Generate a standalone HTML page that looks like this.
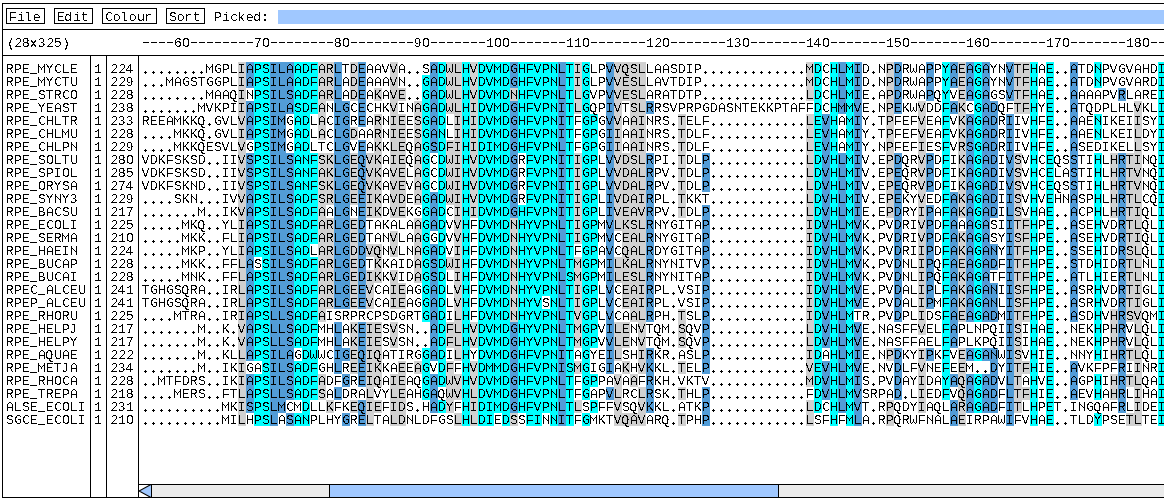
<!DOCTYPE html>
<html><head><meta charset="utf-8"><style>
html,body{margin:0;padding:0;background:#fff;}
body{width:1164px;height:504px;overflow:hidden;position:relative;font-family:"Liberation Mono",monospace;font-size:13.333px;color:#000;}
.a{position:absolute;}
.t{position:absolute;white-space:pre;line-height:13px;height:13px;}
.hl{position:absolute;background:#000;height:1px;}
.vl{position:absolute;background:#000;width:1px;}
.bx{position:absolute;border:1px solid #000;box-sizing:border-box;}
.r{position:absolute;height:13px;}
#txt{position:absolute;left:0;top:0;width:1164px;height:504px;filter:url(#crisp);}
.ln{position:absolute;left:0;height:13px;width:1164px}
.ln i{position:absolute;top:0;font-style:normal;white-space:pre;line-height:13px}
</style></head><body>

<svg width="0" height="0" style="position:absolute"><filter id="crisp" x="0" y="0" width="100%" height="100%" color-interpolation-filters="sRGB"><feComponentTransfer><feFuncA type="discrete" tableValues="0 1" /></feComponentTransfer></filter></svg>
<div class="r" style="left:238px;top:62px;width:8px;background:#d0d0d0"></div>
<div class="r" style="left:246px;top:62px;width:8px;background:#529cd7"></div>
<div class="r" style="left:254px;top:62px;width:16px;background:#00ffff"></div>
<div class="r" style="left:270px;top:62px;width:24px;background:#529cd7"></div>
<div class="r" style="left:294px;top:62px;width:24px;background:#00ffff"></div>
<div class="r" style="left:318px;top:62px;width:16px;background:#d0d0d0"></div>
<div class="r" style="left:334px;top:62px;width:8px;background:#529cd7"></div>
<div class="r" style="left:350px;top:62px;width:8px;background:#d0d0d0"></div>
<div class="r" style="left:358px;top:62px;width:8px;background:#529cd7"></div>
<div class="r" style="left:390px;top:62px;width:8px;background:#d0d0d0"></div>
<div class="r" style="left:430px;top:62px;width:8px;background:#529cd7"></div>
<div class="r" style="left:438px;top:62px;width:8px;background:#00ffff"></div>
<div class="r" style="left:446px;top:62px;width:16px;background:#d0d0d0"></div>
<div class="r" style="left:462px;top:62px;width:8px;background:#00ffff"></div>
<div class="r" style="left:470px;top:62px;width:8px;background:#d0d0d0"></div>
<div class="r" style="left:478px;top:62px;width:32px;background:#00ffff"></div>
<div class="r" style="left:510px;top:62px;width:8px;background:#529cd7"></div>
<div class="r" style="left:518px;top:62px;width:40px;background:#00ffff"></div>
<div class="r" style="left:558px;top:62px;width:8px;background:#529cd7"></div>
<div class="r" style="left:566px;top:62px;width:8px;background:#00ffff"></div>
<div class="r" style="left:574px;top:62px;width:8px;background:#d0d0d0"></div>
<div class="r" style="left:582px;top:62px;width:8px;background:#00ffff"></div>
<div class="r" style="left:606px;top:62px;width:8px;background:#529cd7"></div>
<div class="r" style="left:614px;top:62px;width:32px;background:#d0d0d0"></div>
<div class="r" style="left:806px;top:62px;width:8px;background:#d0d0d0"></div>
<div class="r" style="left:814px;top:62px;width:8px;background:#00ffff"></div>
<div class="r" style="left:830px;top:62px;width:8px;background:#00ffff"></div>
<div class="r" style="left:838px;top:62px;width:8px;background:#529cd7"></div>
<div class="r" style="left:846px;top:62px;width:8px;background:#00ffff"></div>
<div class="r" style="left:854px;top:62px;width:8px;background:#529cd7"></div>
<div class="r" style="left:886px;top:62px;width:8px;background:#d0d0d0"></div>
<div class="r" style="left:894px;top:62px;width:8px;background:#529cd7"></div>
<div class="r" style="left:926px;top:62px;width:8px;background:#529cd7"></div>
<div class="r" style="left:942px;top:62px;width:8px;background:#00ffff"></div>
<div class="r" style="left:950px;top:62px;width:8px;background:#529cd7"></div>
<div class="r" style="left:958px;top:62px;width:8px;background:#d0d0d0"></div>
<div class="r" style="left:966px;top:62px;width:8px;background:#529cd7"></div>
<div class="r" style="left:974px;top:62px;width:8px;background:#00ffff"></div>
<div class="r" style="left:982px;top:62px;width:8px;background:#529cd7"></div>
<div class="r" style="left:1006px;top:62px;width:8px;background:#529cd7"></div>
<div class="r" style="left:1014px;top:62px;width:16px;background:#d0d0d0"></div>
<div class="r" style="left:1030px;top:62px;width:8px;background:#00ffff"></div>
<div class="r" style="left:1046px;top:62px;width:8px;background:#00ffff"></div>
<div class="r" style="left:1070px;top:62px;width:8px;background:#529cd7"></div>
<div class="r" style="left:1094px;top:62px;width:8px;background:#00ffff"></div>
<div class="r" style="left:1158px;top:62px;width:8px;background:#00ffff"></div>
<div class="r" style="left:238px;top:75px;width:8px;background:#d0d0d0"></div>
<div class="r" style="left:246px;top:75px;width:8px;background:#529cd7"></div>
<div class="r" style="left:254px;top:75px;width:16px;background:#00ffff"></div>
<div class="r" style="left:270px;top:75px;width:24px;background:#529cd7"></div>
<div class="r" style="left:294px;top:75px;width:24px;background:#00ffff"></div>
<div class="r" style="left:318px;top:75px;width:16px;background:#d0d0d0"></div>
<div class="r" style="left:334px;top:75px;width:8px;background:#529cd7"></div>
<div class="r" style="left:350px;top:75px;width:8px;background:#d0d0d0"></div>
<div class="r" style="left:358px;top:75px;width:8px;background:#529cd7"></div>
<div class="r" style="left:390px;top:75px;width:8px;background:#d0d0d0"></div>
<div class="r" style="left:422px;top:75px;width:8px;background:#00ffff"></div>
<div class="r" style="left:430px;top:75px;width:8px;background:#529cd7"></div>
<div class="r" style="left:438px;top:75px;width:8px;background:#00ffff"></div>
<div class="r" style="left:446px;top:75px;width:16px;background:#d0d0d0"></div>
<div class="r" style="left:462px;top:75px;width:8px;background:#00ffff"></div>
<div class="r" style="left:470px;top:75px;width:8px;background:#d0d0d0"></div>
<div class="r" style="left:478px;top:75px;width:32px;background:#00ffff"></div>
<div class="r" style="left:510px;top:75px;width:8px;background:#529cd7"></div>
<div class="r" style="left:518px;top:75px;width:40px;background:#00ffff"></div>
<div class="r" style="left:558px;top:75px;width:8px;background:#529cd7"></div>
<div class="r" style="left:566px;top:75px;width:8px;background:#00ffff"></div>
<div class="r" style="left:574px;top:75px;width:8px;background:#d0d0d0"></div>
<div class="r" style="left:582px;top:75px;width:8px;background:#00ffff"></div>
<div class="r" style="left:606px;top:75px;width:8px;background:#529cd7"></div>
<div class="r" style="left:614px;top:75px;width:32px;background:#d0d0d0"></div>
<div class="r" style="left:806px;top:75px;width:8px;background:#d0d0d0"></div>
<div class="r" style="left:814px;top:75px;width:8px;background:#00ffff"></div>
<div class="r" style="left:830px;top:75px;width:8px;background:#00ffff"></div>
<div class="r" style="left:838px;top:75px;width:8px;background:#529cd7"></div>
<div class="r" style="left:846px;top:75px;width:8px;background:#00ffff"></div>
<div class="r" style="left:854px;top:75px;width:8px;background:#529cd7"></div>
<div class="r" style="left:886px;top:75px;width:8px;background:#d0d0d0"></div>
<div class="r" style="left:894px;top:75px;width:8px;background:#529cd7"></div>
<div class="r" style="left:926px;top:75px;width:8px;background:#529cd7"></div>
<div class="r" style="left:942px;top:75px;width:8px;background:#00ffff"></div>
<div class="r" style="left:950px;top:75px;width:8px;background:#529cd7"></div>
<div class="r" style="left:958px;top:75px;width:8px;background:#d0d0d0"></div>
<div class="r" style="left:966px;top:75px;width:8px;background:#529cd7"></div>
<div class="r" style="left:974px;top:75px;width:8px;background:#00ffff"></div>
<div class="r" style="left:982px;top:75px;width:8px;background:#529cd7"></div>
<div class="r" style="left:1006px;top:75px;width:8px;background:#529cd7"></div>
<div class="r" style="left:1014px;top:75px;width:16px;background:#d0d0d0"></div>
<div class="r" style="left:1030px;top:75px;width:8px;background:#00ffff"></div>
<div class="r" style="left:1046px;top:75px;width:8px;background:#00ffff"></div>
<div class="r" style="left:1070px;top:75px;width:8px;background:#529cd7"></div>
<div class="r" style="left:1094px;top:75px;width:8px;background:#00ffff"></div>
<div class="r" style="left:1158px;top:75px;width:8px;background:#00ffff"></div>
<div class="r" style="left:238px;top:88px;width:8px;background:#d0d0d0"></div>
<div class="r" style="left:254px;top:88px;width:16px;background:#00ffff"></div>
<div class="r" style="left:270px;top:88px;width:24px;background:#529cd7"></div>
<div class="r" style="left:294px;top:88px;width:24px;background:#00ffff"></div>
<div class="r" style="left:318px;top:88px;width:16px;background:#d0d0d0"></div>
<div class="r" style="left:334px;top:88px;width:8px;background:#529cd7"></div>
<div class="r" style="left:350px;top:88px;width:8px;background:#d0d0d0"></div>
<div class="r" style="left:358px;top:88px;width:8px;background:#529cd7"></div>
<div class="r" style="left:374px;top:88px;width:8px;background:#d0d0d0"></div>
<div class="r" style="left:390px;top:88px;width:16px;background:#d0d0d0"></div>
<div class="r" style="left:422px;top:88px;width:8px;background:#00ffff"></div>
<div class="r" style="left:430px;top:88px;width:8px;background:#529cd7"></div>
<div class="r" style="left:438px;top:88px;width:8px;background:#00ffff"></div>
<div class="r" style="left:446px;top:88px;width:16px;background:#d0d0d0"></div>
<div class="r" style="left:462px;top:88px;width:8px;background:#00ffff"></div>
<div class="r" style="left:470px;top:88px;width:8px;background:#d0d0d0"></div>
<div class="r" style="left:478px;top:88px;width:32px;background:#00ffff"></div>
<div class="r" style="left:510px;top:88px;width:8px;background:#d0d0d0"></div>
<div class="r" style="left:518px;top:88px;width:40px;background:#00ffff"></div>
<div class="r" style="left:558px;top:88px;width:8px;background:#529cd7"></div>
<div class="r" style="left:566px;top:88px;width:8px;background:#00ffff"></div>
<div class="r" style="left:574px;top:88px;width:8px;background:#d0d0d0"></div>
<div class="r" style="left:582px;top:88px;width:8px;background:#00ffff"></div>
<div class="r" style="left:606px;top:88px;width:8px;background:#529cd7"></div>
<div class="r" style="left:614px;top:88px;width:32px;background:#d0d0d0"></div>
<div class="r" style="left:806px;top:88px;width:8px;background:#d0d0d0"></div>
<div class="r" style="left:814px;top:88px;width:8px;background:#00ffff"></div>
<div class="r" style="left:830px;top:88px;width:8px;background:#00ffff"></div>
<div class="r" style="left:838px;top:88px;width:8px;background:#529cd7"></div>
<div class="r" style="left:846px;top:88px;width:8px;background:#00ffff"></div>
<div class="r" style="left:854px;top:88px;width:8px;background:#529cd7"></div>
<div class="r" style="left:886px;top:88px;width:8px;background:#d0d0d0"></div>
<div class="r" style="left:894px;top:88px;width:8px;background:#529cd7"></div>
<div class="r" style="left:926px;top:88px;width:8px;background:#529cd7"></div>
<div class="r" style="left:942px;top:88px;width:8px;background:#00ffff"></div>
<div class="r" style="left:958px;top:88px;width:8px;background:#d0d0d0"></div>
<div class="r" style="left:966px;top:88px;width:8px;background:#529cd7"></div>
<div class="r" style="left:974px;top:88px;width:8px;background:#00ffff"></div>
<div class="r" style="left:982px;top:88px;width:8px;background:#529cd7"></div>
<div class="r" style="left:1006px;top:88px;width:8px;background:#529cd7"></div>
<div class="r" style="left:1014px;top:88px;width:16px;background:#d0d0d0"></div>
<div class="r" style="left:1030px;top:88px;width:8px;background:#00ffff"></div>
<div class="r" style="left:1046px;top:88px;width:8px;background:#00ffff"></div>
<div class="r" style="left:1070px;top:88px;width:8px;background:#529cd7"></div>
<div class="r" style="left:1118px;top:88px;width:8px;background:#529cd7"></div>
<div class="r" style="left:1158px;top:88px;width:8px;background:#00ffff"></div>
<div class="r" style="left:238px;top:101px;width:8px;background:#d0d0d0"></div>
<div class="r" style="left:246px;top:101px;width:8px;background:#529cd7"></div>
<div class="r" style="left:254px;top:101px;width:16px;background:#00ffff"></div>
<div class="r" style="left:270px;top:101px;width:24px;background:#529cd7"></div>
<div class="r" style="left:294px;top:101px;width:24px;background:#00ffff"></div>
<div class="r" style="left:318px;top:101px;width:8px;background:#d0d0d0"></div>
<div class="r" style="left:334px;top:101px;width:16px;background:#529cd7"></div>
<div class="r" style="left:358px;top:101px;width:8px;background:#529cd7"></div>
<div class="r" style="left:390px;top:101px;width:8px;background:#d0d0d0"></div>
<div class="r" style="left:414px;top:101px;width:8px;background:#d0d0d0"></div>
<div class="r" style="left:422px;top:101px;width:8px;background:#00ffff"></div>
<div class="r" style="left:430px;top:101px;width:8px;background:#529cd7"></div>
<div class="r" style="left:438px;top:101px;width:8px;background:#00ffff"></div>
<div class="r" style="left:446px;top:101px;width:16px;background:#d0d0d0"></div>
<div class="r" style="left:462px;top:101px;width:8px;background:#00ffff"></div>
<div class="r" style="left:470px;top:101px;width:8px;background:#d0d0d0"></div>
<div class="r" style="left:478px;top:101px;width:32px;background:#00ffff"></div>
<div class="r" style="left:510px;top:101px;width:8px;background:#529cd7"></div>
<div class="r" style="left:518px;top:101px;width:40px;background:#00ffff"></div>
<div class="r" style="left:558px;top:101px;width:8px;background:#529cd7"></div>
<div class="r" style="left:566px;top:101px;width:8px;background:#00ffff"></div>
<div class="r" style="left:574px;top:101px;width:8px;background:#d0d0d0"></div>
<div class="r" style="left:582px;top:101px;width:8px;background:#00ffff"></div>
<div class="r" style="left:606px;top:101px;width:8px;background:#529cd7"></div>
<div class="r" style="left:614px;top:101px;width:8px;background:#d0d0d0"></div>
<div class="r" style="left:630px;top:101px;width:16px;background:#d0d0d0"></div>
<div class="r" style="left:646px;top:101px;width:8px;background:#529cd7"></div>
<div class="r" style="left:814px;top:101px;width:8px;background:#00ffff"></div>
<div class="r" style="left:830px;top:101px;width:8px;background:#00ffff"></div>
<div class="r" style="left:838px;top:101px;width:8px;background:#529cd7"></div>
<div class="r" style="left:846px;top:101px;width:8px;background:#00ffff"></div>
<div class="r" style="left:854px;top:101px;width:8px;background:#529cd7"></div>
<div class="r" style="left:886px;top:101px;width:8px;background:#d0d0d0"></div>
<div class="r" style="left:894px;top:101px;width:8px;background:#529cd7"></div>
<div class="r" style="left:918px;top:101px;width:8px;background:#d0d0d0"></div>
<div class="r" style="left:942px;top:101px;width:8px;background:#00ffff"></div>
<div class="r" style="left:950px;top:101px;width:8px;background:#529cd7"></div>
<div class="r" style="left:958px;top:101px;width:8px;background:#d0d0d0"></div>
<div class="r" style="left:974px;top:101px;width:8px;background:#00ffff"></div>
<div class="r" style="left:982px;top:101px;width:16px;background:#529cd7"></div>
<div class="r" style="left:1014px;top:101px;width:16px;background:#d0d0d0"></div>
<div class="r" style="left:1030px;top:101px;width:8px;background:#00ffff"></div>
<div class="r" style="left:1046px;top:101px;width:8px;background:#00ffff"></div>
<div class="r" style="left:1070px;top:101px;width:8px;background:#529cd7"></div>
<div class="r" style="left:1134px;top:101px;width:8px;background:#d0d0d0"></div>
<div class="r" style="left:1158px;top:101px;width:8px;background:#00ffff"></div>
<div class="r" style="left:238px;top:114px;width:8px;background:#d0d0d0"></div>
<div class="r" style="left:246px;top:114px;width:8px;background:#529cd7"></div>
<div class="r" style="left:254px;top:114px;width:16px;background:#00ffff"></div>
<div class="r" style="left:270px;top:114px;width:16px;background:#529cd7"></div>
<div class="r" style="left:294px;top:114px;width:16px;background:#00ffff"></div>
<div class="r" style="left:318px;top:114px;width:8px;background:#d0d0d0"></div>
<div class="r" style="left:334px;top:114px;width:16px;background:#529cd7"></div>
<div class="r" style="left:358px;top:114px;width:8px;background:#529cd7"></div>
<div class="r" style="left:374px;top:114px;width:8px;background:#d0d0d0"></div>
<div class="r" style="left:390px;top:114px;width:16px;background:#d0d0d0"></div>
<div class="r" style="left:414px;top:114px;width:8px;background:#d0d0d0"></div>
<div class="r" style="left:422px;top:114px;width:8px;background:#00ffff"></div>
<div class="r" style="left:430px;top:114px;width:8px;background:#529cd7"></div>
<div class="r" style="left:438px;top:114px;width:8px;background:#00ffff"></div>
<div class="r" style="left:454px;top:114px;width:8px;background:#d0d0d0"></div>
<div class="r" style="left:462px;top:114px;width:8px;background:#00ffff"></div>
<div class="r" style="left:470px;top:114px;width:8px;background:#d0d0d0"></div>
<div class="r" style="left:478px;top:114px;width:32px;background:#00ffff"></div>
<div class="r" style="left:510px;top:114px;width:8px;background:#529cd7"></div>
<div class="r" style="left:518px;top:114px;width:40px;background:#00ffff"></div>
<div class="r" style="left:558px;top:114px;width:8px;background:#529cd7"></div>
<div class="r" style="left:566px;top:114px;width:8px;background:#00ffff"></div>
<div class="r" style="left:582px;top:114px;width:16px;background:#00ffff"></div>
<div class="r" style="left:606px;top:114px;width:8px;background:#529cd7"></div>
<div class="r" style="left:614px;top:114px;width:8px;background:#d0d0d0"></div>
<div class="r" style="left:630px;top:114px;width:16px;background:#d0d0d0"></div>
<div class="r" style="left:678px;top:114px;width:8px;background:#d0d0d0"></div>
<div class="r" style="left:806px;top:114px;width:8px;background:#d0d0d0"></div>
<div class="r" style="left:814px;top:114px;width:8px;background:#00ffff"></div>
<div class="r" style="left:822px;top:114px;width:8px;background:#529cd7"></div>
<div class="r" style="left:830px;top:114px;width:8px;background:#00ffff"></div>
<div class="r" style="left:846px;top:114px;width:8px;background:#00ffff"></div>
<div class="r" style="left:854px;top:114px;width:8px;background:#529cd7"></div>
<div class="r" style="left:886px;top:114px;width:8px;background:#d0d0d0"></div>
<div class="r" style="left:918px;top:114px;width:8px;background:#d0d0d0"></div>
<div class="r" style="left:942px;top:114px;width:8px;background:#00ffff"></div>
<div class="r" style="left:958px;top:114px;width:8px;background:#d0d0d0"></div>
<div class="r" style="left:966px;top:114px;width:8px;background:#529cd7"></div>
<div class="r" style="left:974px;top:114px;width:8px;background:#00ffff"></div>
<div class="r" style="left:982px;top:114px;width:16px;background:#529cd7"></div>
<div class="r" style="left:1006px;top:114px;width:8px;background:#529cd7"></div>
<div class="r" style="left:1030px;top:114px;width:8px;background:#00ffff"></div>
<div class="r" style="left:1046px;top:114px;width:8px;background:#00ffff"></div>
<div class="r" style="left:1070px;top:114px;width:8px;background:#529cd7"></div>
<div class="r" style="left:1094px;top:114px;width:8px;background:#00ffff"></div>
<div class="r" style="left:1134px;top:114px;width:8px;background:#d0d0d0"></div>
<div class="r" style="left:1158px;top:114px;width:8px;background:#00ffff"></div>
<div class="r" style="left:238px;top:127px;width:8px;background:#d0d0d0"></div>
<div class="r" style="left:246px;top:127px;width:8px;background:#529cd7"></div>
<div class="r" style="left:254px;top:127px;width:16px;background:#00ffff"></div>
<div class="r" style="left:270px;top:127px;width:16px;background:#529cd7"></div>
<div class="r" style="left:294px;top:127px;width:16px;background:#00ffff"></div>
<div class="r" style="left:318px;top:127px;width:8px;background:#d0d0d0"></div>
<div class="r" style="left:334px;top:127px;width:16px;background:#529cd7"></div>
<div class="r" style="left:350px;top:127px;width:8px;background:#d0d0d0"></div>
<div class="r" style="left:374px;top:127px;width:8px;background:#d0d0d0"></div>
<div class="r" style="left:390px;top:127px;width:16px;background:#d0d0d0"></div>
<div class="r" style="left:414px;top:127px;width:8px;background:#d0d0d0"></div>
<div class="r" style="left:422px;top:127px;width:8px;background:#00ffff"></div>
<div class="r" style="left:430px;top:127px;width:8px;background:#529cd7"></div>
<div class="r" style="left:438px;top:127px;width:8px;background:#00ffff"></div>
<div class="r" style="left:454px;top:127px;width:8px;background:#d0d0d0"></div>
<div class="r" style="left:462px;top:127px;width:8px;background:#00ffff"></div>
<div class="r" style="left:470px;top:127px;width:8px;background:#d0d0d0"></div>
<div class="r" style="left:478px;top:127px;width:32px;background:#00ffff"></div>
<div class="r" style="left:510px;top:127px;width:8px;background:#529cd7"></div>
<div class="r" style="left:518px;top:127px;width:40px;background:#00ffff"></div>
<div class="r" style="left:558px;top:127px;width:8px;background:#529cd7"></div>
<div class="r" style="left:566px;top:127px;width:8px;background:#00ffff"></div>
<div class="r" style="left:582px;top:127px;width:16px;background:#00ffff"></div>
<div class="r" style="left:606px;top:127px;width:8px;background:#529cd7"></div>
<div class="r" style="left:614px;top:127px;width:8px;background:#d0d0d0"></div>
<div class="r" style="left:630px;top:127px;width:16px;background:#d0d0d0"></div>
<div class="r" style="left:678px;top:127px;width:8px;background:#d0d0d0"></div>
<div class="r" style="left:806px;top:127px;width:8px;background:#d0d0d0"></div>
<div class="r" style="left:814px;top:127px;width:8px;background:#00ffff"></div>
<div class="r" style="left:822px;top:127px;width:8px;background:#529cd7"></div>
<div class="r" style="left:830px;top:127px;width:8px;background:#00ffff"></div>
<div class="r" style="left:846px;top:127px;width:8px;background:#00ffff"></div>
<div class="r" style="left:854px;top:127px;width:8px;background:#529cd7"></div>
<div class="r" style="left:886px;top:127px;width:8px;background:#d0d0d0"></div>
<div class="r" style="left:918px;top:127px;width:8px;background:#d0d0d0"></div>
<div class="r" style="left:942px;top:127px;width:8px;background:#00ffff"></div>
<div class="r" style="left:958px;top:127px;width:8px;background:#d0d0d0"></div>
<div class="r" style="left:966px;top:127px;width:8px;background:#529cd7"></div>
<div class="r" style="left:974px;top:127px;width:8px;background:#00ffff"></div>
<div class="r" style="left:982px;top:127px;width:16px;background:#529cd7"></div>
<div class="r" style="left:1006px;top:127px;width:8px;background:#529cd7"></div>
<div class="r" style="left:1030px;top:127px;width:8px;background:#00ffff"></div>
<div class="r" style="left:1046px;top:127px;width:8px;background:#00ffff"></div>
<div class="r" style="left:1070px;top:127px;width:8px;background:#529cd7"></div>
<div class="r" style="left:1094px;top:127px;width:8px;background:#00ffff"></div>
<div class="r" style="left:1134px;top:127px;width:8px;background:#d0d0d0"></div>
<div class="r" style="left:1158px;top:127px;width:8px;background:#00ffff"></div>
<div class="r" style="left:238px;top:140px;width:8px;background:#d0d0d0"></div>
<div class="r" style="left:254px;top:140px;width:16px;background:#00ffff"></div>
<div class="r" style="left:270px;top:140px;width:16px;background:#529cd7"></div>
<div class="r" style="left:294px;top:140px;width:16px;background:#00ffff"></div>
<div class="r" style="left:334px;top:140px;width:16px;background:#529cd7"></div>
<div class="r" style="left:358px;top:140px;width:8px;background:#529cd7"></div>
<div class="r" style="left:374px;top:140px;width:8px;background:#d0d0d0"></div>
<div class="r" style="left:390px;top:140px;width:16px;background:#d0d0d0"></div>
<div class="r" style="left:414px;top:140px;width:8px;background:#d0d0d0"></div>
<div class="r" style="left:422px;top:140px;width:8px;background:#00ffff"></div>
<div class="r" style="left:430px;top:140px;width:8px;background:#529cd7"></div>
<div class="r" style="left:438px;top:140px;width:8px;background:#00ffff"></div>
<div class="r" style="left:446px;top:140px;width:16px;background:#d0d0d0"></div>
<div class="r" style="left:462px;top:140px;width:8px;background:#00ffff"></div>
<div class="r" style="left:470px;top:140px;width:8px;background:#d0d0d0"></div>
<div class="r" style="left:478px;top:140px;width:32px;background:#00ffff"></div>
<div class="r" style="left:510px;top:140px;width:8px;background:#529cd7"></div>
<div class="r" style="left:518px;top:140px;width:40px;background:#00ffff"></div>
<div class="r" style="left:558px;top:140px;width:8px;background:#529cd7"></div>
<div class="r" style="left:566px;top:140px;width:8px;background:#00ffff"></div>
<div class="r" style="left:582px;top:140px;width:16px;background:#00ffff"></div>
<div class="r" style="left:606px;top:140px;width:8px;background:#529cd7"></div>
<div class="r" style="left:614px;top:140px;width:8px;background:#d0d0d0"></div>
<div class="r" style="left:630px;top:140px;width:16px;background:#d0d0d0"></div>
<div class="r" style="left:678px;top:140px;width:8px;background:#d0d0d0"></div>
<div class="r" style="left:806px;top:140px;width:8px;background:#d0d0d0"></div>
<div class="r" style="left:814px;top:140px;width:8px;background:#00ffff"></div>
<div class="r" style="left:822px;top:140px;width:8px;background:#529cd7"></div>
<div class="r" style="left:830px;top:140px;width:8px;background:#00ffff"></div>
<div class="r" style="left:846px;top:140px;width:8px;background:#00ffff"></div>
<div class="r" style="left:854px;top:140px;width:8px;background:#529cd7"></div>
<div class="r" style="left:886px;top:140px;width:8px;background:#d0d0d0"></div>
<div class="r" style="left:918px;top:140px;width:8px;background:#d0d0d0"></div>
<div class="r" style="left:942px;top:140px;width:8px;background:#00ffff"></div>
<div class="r" style="left:958px;top:140px;width:8px;background:#d0d0d0"></div>
<div class="r" style="left:966px;top:140px;width:8px;background:#529cd7"></div>
<div class="r" style="left:974px;top:140px;width:8px;background:#00ffff"></div>
<div class="r" style="left:982px;top:140px;width:16px;background:#529cd7"></div>
<div class="r" style="left:1006px;top:140px;width:8px;background:#529cd7"></div>
<div class="r" style="left:1030px;top:140px;width:8px;background:#00ffff"></div>
<div class="r" style="left:1046px;top:140px;width:8px;background:#00ffff"></div>
<div class="r" style="left:1070px;top:140px;width:8px;background:#529cd7"></div>
<div class="r" style="left:1134px;top:140px;width:8px;background:#d0d0d0"></div>
<div class="r" style="left:1158px;top:140px;width:8px;background:#00ffff"></div>
<div class="r" style="left:238px;top:153px;width:8px;background:#d0d0d0"></div>
<div class="r" style="left:246px;top:153px;width:8px;background:#529cd7"></div>
<div class="r" style="left:254px;top:153px;width:16px;background:#00ffff"></div>
<div class="r" style="left:270px;top:153px;width:24px;background:#529cd7"></div>
<div class="r" style="left:294px;top:153px;width:24px;background:#00ffff"></div>
<div class="r" style="left:318px;top:153px;width:16px;background:#d0d0d0"></div>
<div class="r" style="left:334px;top:153px;width:16px;background:#529cd7"></div>
<div class="r" style="left:350px;top:153px;width:8px;background:#d0d0d0"></div>
<div class="r" style="left:358px;top:153px;width:8px;background:#529cd7"></div>
<div class="r" style="left:366px;top:153px;width:16px;background:#d0d0d0"></div>
<div class="r" style="left:390px;top:153px;width:16px;background:#d0d0d0"></div>
<div class="r" style="left:414px;top:153px;width:8px;background:#d0d0d0"></div>
<div class="r" style="left:422px;top:153px;width:8px;background:#00ffff"></div>
<div class="r" style="left:438px;top:153px;width:8px;background:#00ffff"></div>
<div class="r" style="left:446px;top:153px;width:16px;background:#d0d0d0"></div>
<div class="r" style="left:462px;top:153px;width:8px;background:#00ffff"></div>
<div class="r" style="left:470px;top:153px;width:8px;background:#d0d0d0"></div>
<div class="r" style="left:478px;top:153px;width:32px;background:#00ffff"></div>
<div class="r" style="left:510px;top:153px;width:8px;background:#529cd7"></div>
<div class="r" style="left:526px;top:153px;width:32px;background:#00ffff"></div>
<div class="r" style="left:558px;top:153px;width:8px;background:#529cd7"></div>
<div class="r" style="left:566px;top:153px;width:8px;background:#00ffff"></div>
<div class="r" style="left:574px;top:153px;width:8px;background:#d0d0d0"></div>
<div class="r" style="left:582px;top:153px;width:16px;background:#00ffff"></div>
<div class="r" style="left:606px;top:153px;width:8px;background:#529cd7"></div>
<div class="r" style="left:614px;top:153px;width:32px;background:#d0d0d0"></div>
<div class="r" style="left:646px;top:153px;width:8px;background:#529cd7"></div>
<div class="r" style="left:678px;top:153px;width:8px;background:#d0d0d0"></div>
<div class="r" style="left:702px;top:153px;width:8px;background:#529cd7"></div>
<div class="r" style="left:806px;top:153px;width:8px;background:#d0d0d0"></div>
<div class="r" style="left:814px;top:153px;width:8px;background:#00ffff"></div>
<div class="r" style="left:822px;top:153px;width:8px;background:#529cd7"></div>
<div class="r" style="left:830px;top:153px;width:8px;background:#00ffff"></div>
<div class="r" style="left:838px;top:153px;width:8px;background:#529cd7"></div>
<div class="r" style="left:846px;top:153px;width:8px;background:#00ffff"></div>
<div class="r" style="left:854px;top:153px;width:8px;background:#529cd7"></div>
<div class="r" style="left:886px;top:153px;width:8px;background:#d0d0d0"></div>
<div class="r" style="left:894px;top:153px;width:8px;background:#529cd7"></div>
<div class="r" style="left:918px;top:153px;width:8px;background:#d0d0d0"></div>
<div class="r" style="left:926px;top:153px;width:8px;background:#529cd7"></div>
<div class="r" style="left:942px;top:153px;width:8px;background:#00ffff"></div>
<div class="r" style="left:958px;top:153px;width:8px;background:#d0d0d0"></div>
<div class="r" style="left:966px;top:153px;width:8px;background:#529cd7"></div>
<div class="r" style="left:974px;top:153px;width:8px;background:#00ffff"></div>
<div class="r" style="left:982px;top:153px;width:16px;background:#529cd7"></div>
<div class="r" style="left:1006px;top:153px;width:8px;background:#529cd7"></div>
<div class="r" style="left:1014px;top:153px;width:8px;background:#d0d0d0"></div>
<div class="r" style="left:1030px;top:153px;width:8px;background:#00ffff"></div>
<div class="r" style="left:1046px;top:153px;width:8px;background:#00ffff"></div>
<div class="r" style="left:1070px;top:153px;width:8px;background:#529cd7"></div>
<div class="r" style="left:1094px;top:153px;width:8px;background:#00ffff"></div>
<div class="r" style="left:1110px;top:153px;width:8px;background:#d0d0d0"></div>
<div class="r" style="left:1118px;top:153px;width:8px;background:#529cd7"></div>
<div class="r" style="left:1126px;top:153px;width:16px;background:#d0d0d0"></div>
<div class="r" style="left:1158px;top:153px;width:8px;background:#00ffff"></div>
<div class="r" style="left:238px;top:166px;width:8px;background:#d0d0d0"></div>
<div class="r" style="left:246px;top:166px;width:8px;background:#529cd7"></div>
<div class="r" style="left:254px;top:166px;width:16px;background:#00ffff"></div>
<div class="r" style="left:270px;top:166px;width:24px;background:#529cd7"></div>
<div class="r" style="left:294px;top:166px;width:24px;background:#00ffff"></div>
<div class="r" style="left:318px;top:166px;width:16px;background:#d0d0d0"></div>
<div class="r" style="left:334px;top:166px;width:16px;background:#529cd7"></div>
<div class="r" style="left:350px;top:166px;width:8px;background:#d0d0d0"></div>
<div class="r" style="left:358px;top:166px;width:8px;background:#529cd7"></div>
<div class="r" style="left:366px;top:166px;width:16px;background:#d0d0d0"></div>
<div class="r" style="left:390px;top:166px;width:16px;background:#d0d0d0"></div>
<div class="r" style="left:414px;top:166px;width:8px;background:#d0d0d0"></div>
<div class="r" style="left:422px;top:166px;width:8px;background:#00ffff"></div>
<div class="r" style="left:438px;top:166px;width:8px;background:#00ffff"></div>
<div class="r" style="left:446px;top:166px;width:16px;background:#d0d0d0"></div>
<div class="r" style="left:462px;top:166px;width:8px;background:#00ffff"></div>
<div class="r" style="left:470px;top:166px;width:8px;background:#d0d0d0"></div>
<div class="r" style="left:478px;top:166px;width:32px;background:#00ffff"></div>
<div class="r" style="left:510px;top:166px;width:8px;background:#529cd7"></div>
<div class="r" style="left:526px;top:166px;width:32px;background:#00ffff"></div>
<div class="r" style="left:558px;top:166px;width:8px;background:#529cd7"></div>
<div class="r" style="left:566px;top:166px;width:8px;background:#00ffff"></div>
<div class="r" style="left:574px;top:166px;width:8px;background:#d0d0d0"></div>
<div class="r" style="left:582px;top:166px;width:16px;background:#00ffff"></div>
<div class="r" style="left:606px;top:166px;width:8px;background:#529cd7"></div>
<div class="r" style="left:614px;top:166px;width:32px;background:#d0d0d0"></div>
<div class="r" style="left:646px;top:166px;width:8px;background:#529cd7"></div>
<div class="r" style="left:678px;top:166px;width:8px;background:#d0d0d0"></div>
<div class="r" style="left:702px;top:166px;width:8px;background:#529cd7"></div>
<div class="r" style="left:806px;top:166px;width:8px;background:#d0d0d0"></div>
<div class="r" style="left:814px;top:166px;width:8px;background:#00ffff"></div>
<div class="r" style="left:822px;top:166px;width:8px;background:#529cd7"></div>
<div class="r" style="left:830px;top:166px;width:8px;background:#00ffff"></div>
<div class="r" style="left:838px;top:166px;width:8px;background:#529cd7"></div>
<div class="r" style="left:846px;top:166px;width:8px;background:#00ffff"></div>
<div class="r" style="left:854px;top:166px;width:8px;background:#529cd7"></div>
<div class="r" style="left:886px;top:166px;width:8px;background:#d0d0d0"></div>
<div class="r" style="left:894px;top:166px;width:8px;background:#529cd7"></div>
<div class="r" style="left:918px;top:166px;width:8px;background:#d0d0d0"></div>
<div class="r" style="left:926px;top:166px;width:8px;background:#529cd7"></div>
<div class="r" style="left:942px;top:166px;width:8px;background:#00ffff"></div>
<div class="r" style="left:958px;top:166px;width:8px;background:#d0d0d0"></div>
<div class="r" style="left:966px;top:166px;width:8px;background:#529cd7"></div>
<div class="r" style="left:974px;top:166px;width:8px;background:#00ffff"></div>
<div class="r" style="left:982px;top:166px;width:16px;background:#529cd7"></div>
<div class="r" style="left:1006px;top:166px;width:8px;background:#529cd7"></div>
<div class="r" style="left:1014px;top:166px;width:8px;background:#d0d0d0"></div>
<div class="r" style="left:1030px;top:166px;width:8px;background:#00ffff"></div>
<div class="r" style="left:1046px;top:166px;width:8px;background:#00ffff"></div>
<div class="r" style="left:1070px;top:166px;width:8px;background:#529cd7"></div>
<div class="r" style="left:1094px;top:166px;width:8px;background:#00ffff"></div>
<div class="r" style="left:1110px;top:166px;width:8px;background:#d0d0d0"></div>
<div class="r" style="left:1118px;top:166px;width:8px;background:#529cd7"></div>
<div class="r" style="left:1126px;top:166px;width:16px;background:#d0d0d0"></div>
<div class="r" style="left:1158px;top:166px;width:8px;background:#00ffff"></div>
<div class="r" style="left:238px;top:179px;width:8px;background:#d0d0d0"></div>
<div class="r" style="left:246px;top:179px;width:8px;background:#529cd7"></div>
<div class="r" style="left:254px;top:179px;width:16px;background:#00ffff"></div>
<div class="r" style="left:270px;top:179px;width:24px;background:#529cd7"></div>
<div class="r" style="left:294px;top:179px;width:24px;background:#00ffff"></div>
<div class="r" style="left:318px;top:179px;width:16px;background:#d0d0d0"></div>
<div class="r" style="left:334px;top:179px;width:16px;background:#529cd7"></div>
<div class="r" style="left:350px;top:179px;width:8px;background:#d0d0d0"></div>
<div class="r" style="left:358px;top:179px;width:8px;background:#529cd7"></div>
<div class="r" style="left:366px;top:179px;width:16px;background:#d0d0d0"></div>
<div class="r" style="left:390px;top:179px;width:16px;background:#d0d0d0"></div>
<div class="r" style="left:414px;top:179px;width:8px;background:#d0d0d0"></div>
<div class="r" style="left:422px;top:179px;width:8px;background:#00ffff"></div>
<div class="r" style="left:438px;top:179px;width:8px;background:#00ffff"></div>
<div class="r" style="left:446px;top:179px;width:16px;background:#d0d0d0"></div>
<div class="r" style="left:462px;top:179px;width:8px;background:#00ffff"></div>
<div class="r" style="left:470px;top:179px;width:8px;background:#d0d0d0"></div>
<div class="r" style="left:478px;top:179px;width:32px;background:#00ffff"></div>
<div class="r" style="left:510px;top:179px;width:8px;background:#529cd7"></div>
<div class="r" style="left:526px;top:179px;width:32px;background:#00ffff"></div>
<div class="r" style="left:558px;top:179px;width:8px;background:#529cd7"></div>
<div class="r" style="left:566px;top:179px;width:8px;background:#00ffff"></div>
<div class="r" style="left:574px;top:179px;width:8px;background:#d0d0d0"></div>
<div class="r" style="left:582px;top:179px;width:16px;background:#00ffff"></div>
<div class="r" style="left:606px;top:179px;width:8px;background:#529cd7"></div>
<div class="r" style="left:614px;top:179px;width:32px;background:#d0d0d0"></div>
<div class="r" style="left:646px;top:179px;width:8px;background:#529cd7"></div>
<div class="r" style="left:678px;top:179px;width:8px;background:#d0d0d0"></div>
<div class="r" style="left:702px;top:179px;width:8px;background:#529cd7"></div>
<div class="r" style="left:806px;top:179px;width:8px;background:#d0d0d0"></div>
<div class="r" style="left:814px;top:179px;width:8px;background:#00ffff"></div>
<div class="r" style="left:822px;top:179px;width:8px;background:#529cd7"></div>
<div class="r" style="left:830px;top:179px;width:8px;background:#00ffff"></div>
<div class="r" style="left:838px;top:179px;width:8px;background:#529cd7"></div>
<div class="r" style="left:846px;top:179px;width:8px;background:#00ffff"></div>
<div class="r" style="left:854px;top:179px;width:8px;background:#529cd7"></div>
<div class="r" style="left:886px;top:179px;width:8px;background:#d0d0d0"></div>
<div class="r" style="left:894px;top:179px;width:8px;background:#529cd7"></div>
<div class="r" style="left:918px;top:179px;width:8px;background:#d0d0d0"></div>
<div class="r" style="left:926px;top:179px;width:8px;background:#529cd7"></div>
<div class="r" style="left:942px;top:179px;width:8px;background:#00ffff"></div>
<div class="r" style="left:958px;top:179px;width:8px;background:#d0d0d0"></div>
<div class="r" style="left:966px;top:179px;width:8px;background:#529cd7"></div>
<div class="r" style="left:974px;top:179px;width:8px;background:#00ffff"></div>
<div class="r" style="left:982px;top:179px;width:16px;background:#529cd7"></div>
<div class="r" style="left:1006px;top:179px;width:8px;background:#529cd7"></div>
<div class="r" style="left:1014px;top:179px;width:8px;background:#d0d0d0"></div>
<div class="r" style="left:1030px;top:179px;width:8px;background:#00ffff"></div>
<div class="r" style="left:1046px;top:179px;width:8px;background:#00ffff"></div>
<div class="r" style="left:1070px;top:179px;width:8px;background:#529cd7"></div>
<div class="r" style="left:1094px;top:179px;width:8px;background:#00ffff"></div>
<div class="r" style="left:1110px;top:179px;width:8px;background:#d0d0d0"></div>
<div class="r" style="left:1118px;top:179px;width:8px;background:#529cd7"></div>
<div class="r" style="left:1126px;top:179px;width:16px;background:#d0d0d0"></div>
<div class="r" style="left:1158px;top:179px;width:8px;background:#00ffff"></div>
<div class="r" style="left:238px;top:192px;width:8px;background:#d0d0d0"></div>
<div class="r" style="left:246px;top:192px;width:8px;background:#529cd7"></div>
<div class="r" style="left:254px;top:192px;width:16px;background:#00ffff"></div>
<div class="r" style="left:270px;top:192px;width:24px;background:#529cd7"></div>
<div class="r" style="left:294px;top:192px;width:24px;background:#00ffff"></div>
<div class="r" style="left:318px;top:192px;width:16px;background:#d0d0d0"></div>
<div class="r" style="left:334px;top:192px;width:16px;background:#529cd7"></div>
<div class="r" style="left:350px;top:192px;width:8px;background:#d0d0d0"></div>
<div class="r" style="left:358px;top:192px;width:8px;background:#529cd7"></div>
<div class="r" style="left:366px;top:192px;width:16px;background:#d0d0d0"></div>
<div class="r" style="left:390px;top:192px;width:16px;background:#d0d0d0"></div>
<div class="r" style="left:414px;top:192px;width:8px;background:#d0d0d0"></div>
<div class="r" style="left:422px;top:192px;width:8px;background:#00ffff"></div>
<div class="r" style="left:430px;top:192px;width:8px;background:#529cd7"></div>
<div class="r" style="left:438px;top:192px;width:8px;background:#00ffff"></div>
<div class="r" style="left:446px;top:192px;width:16px;background:#d0d0d0"></div>
<div class="r" style="left:462px;top:192px;width:8px;background:#00ffff"></div>
<div class="r" style="left:470px;top:192px;width:8px;background:#d0d0d0"></div>
<div class="r" style="left:478px;top:192px;width:32px;background:#00ffff"></div>
<div class="r" style="left:510px;top:192px;width:8px;background:#529cd7"></div>
<div class="r" style="left:526px;top:192px;width:32px;background:#00ffff"></div>
<div class="r" style="left:558px;top:192px;width:8px;background:#529cd7"></div>
<div class="r" style="left:566px;top:192px;width:8px;background:#00ffff"></div>
<div class="r" style="left:574px;top:192px;width:8px;background:#d0d0d0"></div>
<div class="r" style="left:582px;top:192px;width:16px;background:#00ffff"></div>
<div class="r" style="left:606px;top:192px;width:8px;background:#529cd7"></div>
<div class="r" style="left:614px;top:192px;width:32px;background:#d0d0d0"></div>
<div class="r" style="left:646px;top:192px;width:8px;background:#529cd7"></div>
<div class="r" style="left:678px;top:192px;width:8px;background:#d0d0d0"></div>
<div class="r" style="left:806px;top:192px;width:8px;background:#d0d0d0"></div>
<div class="r" style="left:814px;top:192px;width:8px;background:#00ffff"></div>
<div class="r" style="left:822px;top:192px;width:8px;background:#529cd7"></div>
<div class="r" style="left:830px;top:192px;width:8px;background:#00ffff"></div>
<div class="r" style="left:838px;top:192px;width:8px;background:#529cd7"></div>
<div class="r" style="left:846px;top:192px;width:8px;background:#00ffff"></div>
<div class="r" style="left:854px;top:192px;width:8px;background:#529cd7"></div>
<div class="r" style="left:886px;top:192px;width:8px;background:#d0d0d0"></div>
<div class="r" style="left:894px;top:192px;width:8px;background:#529cd7"></div>
<div class="r" style="left:918px;top:192px;width:8px;background:#d0d0d0"></div>
<div class="r" style="left:942px;top:192px;width:8px;background:#00ffff"></div>
<div class="r" style="left:950px;top:192px;width:8px;background:#529cd7"></div>
<div class="r" style="left:958px;top:192px;width:8px;background:#d0d0d0"></div>
<div class="r" style="left:966px;top:192px;width:8px;background:#529cd7"></div>
<div class="r" style="left:974px;top:192px;width:8px;background:#00ffff"></div>
<div class="r" style="left:982px;top:192px;width:16px;background:#529cd7"></div>
<div class="r" style="left:1006px;top:192px;width:8px;background:#529cd7"></div>
<div class="r" style="left:1014px;top:192px;width:8px;background:#d0d0d0"></div>
<div class="r" style="left:1030px;top:192px;width:8px;background:#00ffff"></div>
<div class="r" style="left:1046px;top:192px;width:8px;background:#00ffff"></div>
<div class="r" style="left:1070px;top:192px;width:8px;background:#529cd7"></div>
<div class="r" style="left:1094px;top:192px;width:8px;background:#00ffff"></div>
<div class="r" style="left:1110px;top:192px;width:8px;background:#d0d0d0"></div>
<div class="r" style="left:1118px;top:192px;width:8px;background:#529cd7"></div>
<div class="r" style="left:1126px;top:192px;width:16px;background:#d0d0d0"></div>
<div class="r" style="left:1158px;top:192px;width:8px;background:#00ffff"></div>
<div class="r" style="left:238px;top:205px;width:8px;background:#d0d0d0"></div>
<div class="r" style="left:246px;top:205px;width:8px;background:#529cd7"></div>
<div class="r" style="left:254px;top:205px;width:16px;background:#00ffff"></div>
<div class="r" style="left:270px;top:205px;width:24px;background:#529cd7"></div>
<div class="r" style="left:294px;top:205px;width:24px;background:#00ffff"></div>
<div class="r" style="left:318px;top:205px;width:8px;background:#d0d0d0"></div>
<div class="r" style="left:334px;top:205px;width:16px;background:#529cd7"></div>
<div class="r" style="left:358px;top:205px;width:8px;background:#529cd7"></div>
<div class="r" style="left:366px;top:205px;width:16px;background:#d0d0d0"></div>
<div class="r" style="left:390px;top:205px;width:16px;background:#d0d0d0"></div>
<div class="r" style="left:422px;top:205px;width:8px;background:#00ffff"></div>
<div class="r" style="left:430px;top:205px;width:8px;background:#529cd7"></div>
<div class="r" style="left:438px;top:205px;width:8px;background:#00ffff"></div>
<div class="r" style="left:454px;top:205px;width:8px;background:#d0d0d0"></div>
<div class="r" style="left:462px;top:205px;width:8px;background:#00ffff"></div>
<div class="r" style="left:470px;top:205px;width:8px;background:#d0d0d0"></div>
<div class="r" style="left:478px;top:205px;width:32px;background:#00ffff"></div>
<div class="r" style="left:510px;top:205px;width:8px;background:#529cd7"></div>
<div class="r" style="left:518px;top:205px;width:40px;background:#00ffff"></div>
<div class="r" style="left:558px;top:205px;width:8px;background:#529cd7"></div>
<div class="r" style="left:566px;top:205px;width:8px;background:#00ffff"></div>
<div class="r" style="left:574px;top:205px;width:8px;background:#d0d0d0"></div>
<div class="r" style="left:582px;top:205px;width:16px;background:#00ffff"></div>
<div class="r" style="left:606px;top:205px;width:8px;background:#529cd7"></div>
<div class="r" style="left:614px;top:205px;width:32px;background:#d0d0d0"></div>
<div class="r" style="left:646px;top:205px;width:8px;background:#529cd7"></div>
<div class="r" style="left:678px;top:205px;width:8px;background:#d0d0d0"></div>
<div class="r" style="left:702px;top:205px;width:8px;background:#529cd7"></div>
<div class="r" style="left:806px;top:205px;width:8px;background:#d0d0d0"></div>
<div class="r" style="left:814px;top:205px;width:8px;background:#00ffff"></div>
<div class="r" style="left:822px;top:205px;width:8px;background:#529cd7"></div>
<div class="r" style="left:830px;top:205px;width:8px;background:#00ffff"></div>
<div class="r" style="left:838px;top:205px;width:8px;background:#529cd7"></div>
<div class="r" style="left:846px;top:205px;width:8px;background:#00ffff"></div>
<div class="r" style="left:854px;top:205px;width:8px;background:#529cd7"></div>
<div class="r" style="left:886px;top:205px;width:8px;background:#d0d0d0"></div>
<div class="r" style="left:894px;top:205px;width:8px;background:#529cd7"></div>
<div class="r" style="left:918px;top:205px;width:8px;background:#d0d0d0"></div>
<div class="r" style="left:926px;top:205px;width:8px;background:#529cd7"></div>
<div class="r" style="left:942px;top:205px;width:8px;background:#00ffff"></div>
<div class="r" style="left:950px;top:205px;width:8px;background:#529cd7"></div>
<div class="r" style="left:958px;top:205px;width:8px;background:#d0d0d0"></div>
<div class="r" style="left:966px;top:205px;width:8px;background:#529cd7"></div>
<div class="r" style="left:974px;top:205px;width:8px;background:#00ffff"></div>
<div class="r" style="left:982px;top:205px;width:16px;background:#529cd7"></div>
<div class="r" style="left:1006px;top:205px;width:8px;background:#529cd7"></div>
<div class="r" style="left:1014px;top:205px;width:8px;background:#d0d0d0"></div>
<div class="r" style="left:1030px;top:205px;width:8px;background:#00ffff"></div>
<div class="r" style="left:1046px;top:205px;width:8px;background:#00ffff"></div>
<div class="r" style="left:1070px;top:205px;width:8px;background:#529cd7"></div>
<div class="r" style="left:1094px;top:205px;width:8px;background:#00ffff"></div>
<div class="r" style="left:1110px;top:205px;width:8px;background:#d0d0d0"></div>
<div class="r" style="left:1118px;top:205px;width:8px;background:#529cd7"></div>
<div class="r" style="left:1126px;top:205px;width:16px;background:#d0d0d0"></div>
<div class="r" style="left:1158px;top:205px;width:8px;background:#00ffff"></div>
<div class="r" style="left:238px;top:218px;width:8px;background:#d0d0d0"></div>
<div class="r" style="left:246px;top:218px;width:8px;background:#529cd7"></div>
<div class="r" style="left:254px;top:218px;width:16px;background:#00ffff"></div>
<div class="r" style="left:270px;top:218px;width:24px;background:#529cd7"></div>
<div class="r" style="left:294px;top:218px;width:24px;background:#00ffff"></div>
<div class="r" style="left:318px;top:218px;width:16px;background:#d0d0d0"></div>
<div class="r" style="left:334px;top:218px;width:16px;background:#529cd7"></div>
<div class="r" style="left:350px;top:218px;width:8px;background:#d0d0d0"></div>
<div class="r" style="left:358px;top:218px;width:8px;background:#529cd7"></div>
<div class="r" style="left:414px;top:218px;width:8px;background:#d0d0d0"></div>
<div class="r" style="left:422px;top:218px;width:8px;background:#00ffff"></div>
<div class="r" style="left:430px;top:218px;width:8px;background:#529cd7"></div>
<div class="r" style="left:438px;top:218px;width:8px;background:#00ffff"></div>
<div class="r" style="left:454px;top:218px;width:8px;background:#d0d0d0"></div>
<div class="r" style="left:462px;top:218px;width:8px;background:#00ffff"></div>
<div class="r" style="left:478px;top:218px;width:32px;background:#00ffff"></div>
<div class="r" style="left:510px;top:218px;width:8px;background:#d0d0d0"></div>
<div class="r" style="left:518px;top:218px;width:40px;background:#00ffff"></div>
<div class="r" style="left:558px;top:218px;width:8px;background:#529cd7"></div>
<div class="r" style="left:566px;top:218px;width:8px;background:#00ffff"></div>
<div class="r" style="left:574px;top:218px;width:8px;background:#d0d0d0"></div>
<div class="r" style="left:582px;top:218px;width:16px;background:#00ffff"></div>
<div class="r" style="left:606px;top:218px;width:8px;background:#529cd7"></div>
<div class="r" style="left:614px;top:218px;width:32px;background:#d0d0d0"></div>
<div class="r" style="left:646px;top:218px;width:8px;background:#529cd7"></div>
<div class="r" style="left:702px;top:218px;width:8px;background:#529cd7"></div>
<div class="r" style="left:806px;top:218px;width:8px;background:#d0d0d0"></div>
<div class="r" style="left:814px;top:218px;width:8px;background:#00ffff"></div>
<div class="r" style="left:822px;top:218px;width:8px;background:#529cd7"></div>
<div class="r" style="left:830px;top:218px;width:8px;background:#00ffff"></div>
<div class="r" style="left:838px;top:218px;width:8px;background:#529cd7"></div>
<div class="r" style="left:846px;top:218px;width:8px;background:#00ffff"></div>
<div class="r" style="left:854px;top:218px;width:8px;background:#529cd7"></div>
<div class="r" style="left:894px;top:218px;width:8px;background:#529cd7"></div>
<div class="r" style="left:918px;top:218px;width:8px;background:#d0d0d0"></div>
<div class="r" style="left:926px;top:218px;width:8px;background:#529cd7"></div>
<div class="r" style="left:942px;top:218px;width:8px;background:#00ffff"></div>
<div class="r" style="left:950px;top:218px;width:8px;background:#529cd7"></div>
<div class="r" style="left:966px;top:218px;width:8px;background:#529cd7"></div>
<div class="r" style="left:974px;top:218px;width:8px;background:#00ffff"></div>
<div class="r" style="left:982px;top:218px;width:8px;background:#529cd7"></div>
<div class="r" style="left:1006px;top:218px;width:8px;background:#529cd7"></div>
<div class="r" style="left:1014px;top:218px;width:16px;background:#d0d0d0"></div>
<div class="r" style="left:1030px;top:218px;width:8px;background:#00ffff"></div>
<div class="r" style="left:1046px;top:218px;width:8px;background:#00ffff"></div>
<div class="r" style="left:1070px;top:218px;width:8px;background:#529cd7"></div>
<div class="r" style="left:1094px;top:218px;width:8px;background:#00ffff"></div>
<div class="r" style="left:1118px;top:218px;width:8px;background:#529cd7"></div>
<div class="r" style="left:1126px;top:218px;width:16px;background:#d0d0d0"></div>
<div class="r" style="left:1158px;top:218px;width:8px;background:#00ffff"></div>
<div class="r" style="left:238px;top:231px;width:8px;background:#d0d0d0"></div>
<div class="r" style="left:246px;top:231px;width:8px;background:#529cd7"></div>
<div class="r" style="left:254px;top:231px;width:16px;background:#00ffff"></div>
<div class="r" style="left:270px;top:231px;width:24px;background:#529cd7"></div>
<div class="r" style="left:294px;top:231px;width:24px;background:#00ffff"></div>
<div class="r" style="left:318px;top:231px;width:16px;background:#d0d0d0"></div>
<div class="r" style="left:334px;top:231px;width:16px;background:#529cd7"></div>
<div class="r" style="left:350px;top:231px;width:8px;background:#d0d0d0"></div>
<div class="r" style="left:358px;top:231px;width:8px;background:#529cd7"></div>
<div class="r" style="left:390px;top:231px;width:8px;background:#d0d0d0"></div>
<div class="r" style="left:414px;top:231px;width:8px;background:#d0d0d0"></div>
<div class="r" style="left:422px;top:231px;width:8px;background:#00ffff"></div>
<div class="r" style="left:438px;top:231px;width:8px;background:#00ffff"></div>
<div class="r" style="left:454px;top:231px;width:8px;background:#d0d0d0"></div>
<div class="r" style="left:462px;top:231px;width:8px;background:#00ffff"></div>
<div class="r" style="left:478px;top:231px;width:32px;background:#00ffff"></div>
<div class="r" style="left:510px;top:231px;width:8px;background:#d0d0d0"></div>
<div class="r" style="left:518px;top:231px;width:40px;background:#00ffff"></div>
<div class="r" style="left:558px;top:231px;width:8px;background:#529cd7"></div>
<div class="r" style="left:566px;top:231px;width:8px;background:#00ffff"></div>
<div class="r" style="left:574px;top:231px;width:8px;background:#d0d0d0"></div>
<div class="r" style="left:582px;top:231px;width:16px;background:#00ffff"></div>
<div class="r" style="left:606px;top:231px;width:8px;background:#529cd7"></div>
<div class="r" style="left:622px;top:231px;width:24px;background:#d0d0d0"></div>
<div class="r" style="left:646px;top:231px;width:8px;background:#529cd7"></div>
<div class="r" style="left:702px;top:231px;width:8px;background:#529cd7"></div>
<div class="r" style="left:806px;top:231px;width:8px;background:#d0d0d0"></div>
<div class="r" style="left:814px;top:231px;width:8px;background:#00ffff"></div>
<div class="r" style="left:822px;top:231px;width:8px;background:#529cd7"></div>
<div class="r" style="left:830px;top:231px;width:8px;background:#00ffff"></div>
<div class="r" style="left:838px;top:231px;width:8px;background:#529cd7"></div>
<div class="r" style="left:846px;top:231px;width:8px;background:#00ffff"></div>
<div class="r" style="left:854px;top:231px;width:8px;background:#529cd7"></div>
<div class="r" style="left:894px;top:231px;width:8px;background:#529cd7"></div>
<div class="r" style="left:918px;top:231px;width:8px;background:#d0d0d0"></div>
<div class="r" style="left:926px;top:231px;width:8px;background:#529cd7"></div>
<div class="r" style="left:942px;top:231px;width:8px;background:#00ffff"></div>
<div class="r" style="left:950px;top:231px;width:8px;background:#529cd7"></div>
<div class="r" style="left:958px;top:231px;width:8px;background:#d0d0d0"></div>
<div class="r" style="left:966px;top:231px;width:8px;background:#529cd7"></div>
<div class="r" style="left:974px;top:231px;width:8px;background:#00ffff"></div>
<div class="r" style="left:982px;top:231px;width:8px;background:#529cd7"></div>
<div class="r" style="left:1006px;top:231px;width:8px;background:#529cd7"></div>
<div class="r" style="left:1014px;top:231px;width:16px;background:#d0d0d0"></div>
<div class="r" style="left:1030px;top:231px;width:8px;background:#00ffff"></div>
<div class="r" style="left:1046px;top:231px;width:8px;background:#00ffff"></div>
<div class="r" style="left:1070px;top:231px;width:8px;background:#529cd7"></div>
<div class="r" style="left:1094px;top:231px;width:8px;background:#00ffff"></div>
<div class="r" style="left:1118px;top:231px;width:8px;background:#529cd7"></div>
<div class="r" style="left:1126px;top:231px;width:16px;background:#d0d0d0"></div>
<div class="r" style="left:1158px;top:231px;width:8px;background:#00ffff"></div>
<div class="r" style="left:238px;top:244px;width:8px;background:#d0d0d0"></div>
<div class="r" style="left:246px;top:244px;width:8px;background:#529cd7"></div>
<div class="r" style="left:254px;top:244px;width:16px;background:#00ffff"></div>
<div class="r" style="left:270px;top:244px;width:24px;background:#529cd7"></div>
<div class="r" style="left:294px;top:244px;width:16px;background:#00ffff"></div>
<div class="r" style="left:318px;top:244px;width:16px;background:#d0d0d0"></div>
<div class="r" style="left:334px;top:244px;width:16px;background:#529cd7"></div>
<div class="r" style="left:350px;top:244px;width:8px;background:#d0d0d0"></div>
<div class="r" style="left:358px;top:244px;width:8px;background:#529cd7"></div>
<div class="r" style="left:366px;top:244px;width:16px;background:#d0d0d0"></div>
<div class="r" style="left:390px;top:244px;width:8px;background:#d0d0d0"></div>
<div class="r" style="left:414px;top:244px;width:8px;background:#d0d0d0"></div>
<div class="r" style="left:422px;top:244px;width:8px;background:#00ffff"></div>
<div class="r" style="left:430px;top:244px;width:8px;background:#529cd7"></div>
<div class="r" style="left:438px;top:244px;width:8px;background:#00ffff"></div>
<div class="r" style="left:454px;top:244px;width:8px;background:#d0d0d0"></div>
<div class="r" style="left:462px;top:244px;width:8px;background:#00ffff"></div>
<div class="r" style="left:478px;top:244px;width:32px;background:#00ffff"></div>
<div class="r" style="left:510px;top:244px;width:8px;background:#d0d0d0"></div>
<div class="r" style="left:518px;top:244px;width:40px;background:#00ffff"></div>
<div class="r" style="left:558px;top:244px;width:8px;background:#529cd7"></div>
<div class="r" style="left:566px;top:244px;width:8px;background:#00ffff"></div>
<div class="r" style="left:582px;top:244px;width:16px;background:#00ffff"></div>
<div class="r" style="left:606px;top:244px;width:8px;background:#529cd7"></div>
<div class="r" style="left:622px;top:244px;width:24px;background:#d0d0d0"></div>
<div class="r" style="left:646px;top:244px;width:8px;background:#529cd7"></div>
<div class="r" style="left:702px;top:244px;width:8px;background:#529cd7"></div>
<div class="r" style="left:806px;top:244px;width:8px;background:#d0d0d0"></div>
<div class="r" style="left:814px;top:244px;width:8px;background:#00ffff"></div>
<div class="r" style="left:822px;top:244px;width:8px;background:#529cd7"></div>
<div class="r" style="left:830px;top:244px;width:8px;background:#00ffff"></div>
<div class="r" style="left:838px;top:244px;width:8px;background:#529cd7"></div>
<div class="r" style="left:846px;top:244px;width:8px;background:#00ffff"></div>
<div class="r" style="left:854px;top:244px;width:8px;background:#529cd7"></div>
<div class="r" style="left:894px;top:244px;width:8px;background:#529cd7"></div>
<div class="r" style="left:918px;top:244px;width:8px;background:#d0d0d0"></div>
<div class="r" style="left:926px;top:244px;width:8px;background:#529cd7"></div>
<div class="r" style="left:942px;top:244px;width:8px;background:#00ffff"></div>
<div class="r" style="left:950px;top:244px;width:8px;background:#529cd7"></div>
<div class="r" style="left:958px;top:244px;width:8px;background:#d0d0d0"></div>
<div class="r" style="left:966px;top:244px;width:8px;background:#529cd7"></div>
<div class="r" style="left:974px;top:244px;width:8px;background:#00ffff"></div>
<div class="r" style="left:982px;top:244px;width:16px;background:#529cd7"></div>
<div class="r" style="left:1006px;top:244px;width:8px;background:#529cd7"></div>
<div class="r" style="left:1014px;top:244px;width:16px;background:#d0d0d0"></div>
<div class="r" style="left:1030px;top:244px;width:8px;background:#00ffff"></div>
<div class="r" style="left:1046px;top:244px;width:8px;background:#00ffff"></div>
<div class="r" style="left:1070px;top:244px;width:8px;background:#529cd7"></div>
<div class="r" style="left:1094px;top:244px;width:8px;background:#00ffff"></div>
<div class="r" style="left:1118px;top:244px;width:8px;background:#529cd7"></div>
<div class="r" style="left:1126px;top:244px;width:16px;background:#d0d0d0"></div>
<div class="r" style="left:1158px;top:244px;width:8px;background:#00ffff"></div>
<div class="r" style="left:238px;top:257px;width:8px;background:#d0d0d0"></div>
<div class="r" style="left:246px;top:257px;width:8px;background:#529cd7"></div>
<div class="r" style="left:262px;top:257px;width:8px;background:#00ffff"></div>
<div class="r" style="left:270px;top:257px;width:24px;background:#529cd7"></div>
<div class="r" style="left:294px;top:257px;width:24px;background:#00ffff"></div>
<div class="r" style="left:318px;top:257px;width:16px;background:#d0d0d0"></div>
<div class="r" style="left:334px;top:257px;width:16px;background:#529cd7"></div>
<div class="r" style="left:350px;top:257px;width:8px;background:#d0d0d0"></div>
<div class="r" style="left:358px;top:257px;width:8px;background:#529cd7"></div>
<div class="r" style="left:374px;top:257px;width:8px;background:#d0d0d0"></div>
<div class="r" style="left:414px;top:257px;width:8px;background:#d0d0d0"></div>
<div class="r" style="left:422px;top:257px;width:8px;background:#00ffff"></div>
<div class="r" style="left:430px;top:257px;width:8px;background:#529cd7"></div>
<div class="r" style="left:438px;top:257px;width:8px;background:#00ffff"></div>
<div class="r" style="left:446px;top:257px;width:16px;background:#d0d0d0"></div>
<div class="r" style="left:462px;top:257px;width:8px;background:#00ffff"></div>
<div class="r" style="left:478px;top:257px;width:32px;background:#00ffff"></div>
<div class="r" style="left:510px;top:257px;width:8px;background:#d0d0d0"></div>
<div class="r" style="left:518px;top:257px;width:40px;background:#00ffff"></div>
<div class="r" style="left:558px;top:257px;width:8px;background:#529cd7"></div>
<div class="r" style="left:566px;top:257px;width:8px;background:#00ffff"></div>
<div class="r" style="left:574px;top:257px;width:8px;background:#d0d0d0"></div>
<div class="r" style="left:582px;top:257px;width:16px;background:#00ffff"></div>
<div class="r" style="left:606px;top:257px;width:8px;background:#529cd7"></div>
<div class="r" style="left:614px;top:257px;width:32px;background:#d0d0d0"></div>
<div class="r" style="left:646px;top:257px;width:8px;background:#529cd7"></div>
<div class="r" style="left:702px;top:257px;width:8px;background:#529cd7"></div>
<div class="r" style="left:806px;top:257px;width:8px;background:#d0d0d0"></div>
<div class="r" style="left:814px;top:257px;width:8px;background:#00ffff"></div>
<div class="r" style="left:822px;top:257px;width:8px;background:#529cd7"></div>
<div class="r" style="left:830px;top:257px;width:8px;background:#00ffff"></div>
<div class="r" style="left:838px;top:257px;width:8px;background:#529cd7"></div>
<div class="r" style="left:846px;top:257px;width:8px;background:#00ffff"></div>
<div class="r" style="left:854px;top:257px;width:8px;background:#529cd7"></div>
<div class="r" style="left:894px;top:257px;width:8px;background:#529cd7"></div>
<div class="r" style="left:918px;top:257px;width:8px;background:#d0d0d0"></div>
<div class="r" style="left:926px;top:257px;width:8px;background:#529cd7"></div>
<div class="r" style="left:942px;top:257px;width:8px;background:#00ffff"></div>
<div class="r" style="left:950px;top:257px;width:8px;background:#529cd7"></div>
<div class="r" style="left:958px;top:257px;width:8px;background:#d0d0d0"></div>
<div class="r" style="left:966px;top:257px;width:8px;background:#529cd7"></div>
<div class="r" style="left:974px;top:257px;width:8px;background:#00ffff"></div>
<div class="r" style="left:982px;top:257px;width:16px;background:#529cd7"></div>
<div class="r" style="left:1006px;top:257px;width:8px;background:#529cd7"></div>
<div class="r" style="left:1014px;top:257px;width:16px;background:#d0d0d0"></div>
<div class="r" style="left:1030px;top:257px;width:8px;background:#00ffff"></div>
<div class="r" style="left:1046px;top:257px;width:8px;background:#00ffff"></div>
<div class="r" style="left:1070px;top:257px;width:8px;background:#529cd7"></div>
<div class="r" style="left:1094px;top:257px;width:8px;background:#00ffff"></div>
<div class="r" style="left:1118px;top:257px;width:8px;background:#529cd7"></div>
<div class="r" style="left:1126px;top:257px;width:16px;background:#d0d0d0"></div>
<div class="r" style="left:1158px;top:257px;width:8px;background:#00ffff"></div>
<div class="r" style="left:238px;top:270px;width:8px;background:#d0d0d0"></div>
<div class="r" style="left:246px;top:270px;width:8px;background:#529cd7"></div>
<div class="r" style="left:254px;top:270px;width:16px;background:#00ffff"></div>
<div class="r" style="left:270px;top:270px;width:24px;background:#529cd7"></div>
<div class="r" style="left:294px;top:270px;width:24px;background:#00ffff"></div>
<div class="r" style="left:318px;top:270px;width:16px;background:#d0d0d0"></div>
<div class="r" style="left:334px;top:270px;width:16px;background:#529cd7"></div>
<div class="r" style="left:350px;top:270px;width:8px;background:#d0d0d0"></div>
<div class="r" style="left:358px;top:270px;width:8px;background:#529cd7"></div>
<div class="r" style="left:366px;top:270px;width:16px;background:#d0d0d0"></div>
<div class="r" style="left:390px;top:270px;width:8px;background:#d0d0d0"></div>
<div class="r" style="left:414px;top:270px;width:8px;background:#d0d0d0"></div>
<div class="r" style="left:422px;top:270px;width:8px;background:#00ffff"></div>
<div class="r" style="left:430px;top:270px;width:8px;background:#529cd7"></div>
<div class="r" style="left:438px;top:270px;width:8px;background:#00ffff"></div>
<div class="r" style="left:454px;top:270px;width:8px;background:#d0d0d0"></div>
<div class="r" style="left:462px;top:270px;width:8px;background:#00ffff"></div>
<div class="r" style="left:478px;top:270px;width:32px;background:#00ffff"></div>
<div class="r" style="left:510px;top:270px;width:8px;background:#d0d0d0"></div>
<div class="r" style="left:518px;top:270px;width:40px;background:#00ffff"></div>
<div class="r" style="left:558px;top:270px;width:8px;background:#529cd7"></div>
<div class="r" style="left:566px;top:270px;width:8px;background:#00ffff"></div>
<div class="r" style="left:574px;top:270px;width:8px;background:#d0d0d0"></div>
<div class="r" style="left:582px;top:270px;width:16px;background:#00ffff"></div>
<div class="r" style="left:606px;top:270px;width:8px;background:#529cd7"></div>
<div class="r" style="left:614px;top:270px;width:32px;background:#d0d0d0"></div>
<div class="r" style="left:646px;top:270px;width:8px;background:#529cd7"></div>
<div class="r" style="left:702px;top:270px;width:8px;background:#529cd7"></div>
<div class="r" style="left:806px;top:270px;width:8px;background:#d0d0d0"></div>
<div class="r" style="left:814px;top:270px;width:8px;background:#00ffff"></div>
<div class="r" style="left:822px;top:270px;width:8px;background:#529cd7"></div>
<div class="r" style="left:830px;top:270px;width:8px;background:#00ffff"></div>
<div class="r" style="left:838px;top:270px;width:8px;background:#529cd7"></div>
<div class="r" style="left:846px;top:270px;width:8px;background:#00ffff"></div>
<div class="r" style="left:854px;top:270px;width:8px;background:#529cd7"></div>
<div class="r" style="left:894px;top:270px;width:8px;background:#529cd7"></div>
<div class="r" style="left:918px;top:270px;width:8px;background:#d0d0d0"></div>
<div class="r" style="left:926px;top:270px;width:8px;background:#529cd7"></div>
<div class="r" style="left:942px;top:270px;width:8px;background:#00ffff"></div>
<div class="r" style="left:950px;top:270px;width:8px;background:#529cd7"></div>
<div class="r" style="left:958px;top:270px;width:8px;background:#d0d0d0"></div>
<div class="r" style="left:966px;top:270px;width:8px;background:#529cd7"></div>
<div class="r" style="left:974px;top:270px;width:8px;background:#00ffff"></div>
<div class="r" style="left:982px;top:270px;width:8px;background:#529cd7"></div>
<div class="r" style="left:1006px;top:270px;width:8px;background:#529cd7"></div>
<div class="r" style="left:1014px;top:270px;width:16px;background:#d0d0d0"></div>
<div class="r" style="left:1030px;top:270px;width:8px;background:#00ffff"></div>
<div class="r" style="left:1046px;top:270px;width:8px;background:#00ffff"></div>
<div class="r" style="left:1070px;top:270px;width:8px;background:#529cd7"></div>
<div class="r" style="left:1094px;top:270px;width:8px;background:#00ffff"></div>
<div class="r" style="left:1118px;top:270px;width:8px;background:#529cd7"></div>
<div class="r" style="left:1126px;top:270px;width:16px;background:#d0d0d0"></div>
<div class="r" style="left:1158px;top:270px;width:8px;background:#00ffff"></div>
<div class="r" style="left:238px;top:283px;width:8px;background:#d0d0d0"></div>
<div class="r" style="left:246px;top:283px;width:8px;background:#529cd7"></div>
<div class="r" style="left:254px;top:283px;width:16px;background:#00ffff"></div>
<div class="r" style="left:270px;top:283px;width:24px;background:#529cd7"></div>
<div class="r" style="left:294px;top:283px;width:24px;background:#00ffff"></div>
<div class="r" style="left:318px;top:283px;width:16px;background:#d0d0d0"></div>
<div class="r" style="left:334px;top:283px;width:16px;background:#529cd7"></div>
<div class="r" style="left:350px;top:283px;width:8px;background:#d0d0d0"></div>
<div class="r" style="left:358px;top:283px;width:8px;background:#529cd7"></div>
<div class="r" style="left:366px;top:283px;width:8px;background:#d0d0d0"></div>
<div class="r" style="left:390px;top:283px;width:16px;background:#d0d0d0"></div>
<div class="r" style="left:422px;top:283px;width:8px;background:#00ffff"></div>
<div class="r" style="left:430px;top:283px;width:8px;background:#529cd7"></div>
<div class="r" style="left:438px;top:283px;width:8px;background:#00ffff"></div>
<div class="r" style="left:454px;top:283px;width:8px;background:#d0d0d0"></div>
<div class="r" style="left:462px;top:283px;width:8px;background:#00ffff"></div>
<div class="r" style="left:478px;top:283px;width:32px;background:#00ffff"></div>
<div class="r" style="left:510px;top:283px;width:8px;background:#d0d0d0"></div>
<div class="r" style="left:518px;top:283px;width:40px;background:#00ffff"></div>
<div class="r" style="left:558px;top:283px;width:8px;background:#529cd7"></div>
<div class="r" style="left:566px;top:283px;width:8px;background:#00ffff"></div>
<div class="r" style="left:574px;top:283px;width:8px;background:#d0d0d0"></div>
<div class="r" style="left:582px;top:283px;width:16px;background:#00ffff"></div>
<div class="r" style="left:606px;top:283px;width:8px;background:#529cd7"></div>
<div class="r" style="left:622px;top:283px;width:24px;background:#d0d0d0"></div>
<div class="r" style="left:646px;top:283px;width:8px;background:#529cd7"></div>
<div class="r" style="left:702px;top:283px;width:8px;background:#529cd7"></div>
<div class="r" style="left:806px;top:283px;width:8px;background:#d0d0d0"></div>
<div class="r" style="left:814px;top:283px;width:8px;background:#00ffff"></div>
<div class="r" style="left:822px;top:283px;width:8px;background:#529cd7"></div>
<div class="r" style="left:830px;top:283px;width:8px;background:#00ffff"></div>
<div class="r" style="left:838px;top:283px;width:8px;background:#529cd7"></div>
<div class="r" style="left:846px;top:283px;width:8px;background:#00ffff"></div>
<div class="r" style="left:854px;top:283px;width:8px;background:#529cd7"></div>
<div class="r" style="left:894px;top:283px;width:8px;background:#529cd7"></div>
<div class="r" style="left:918px;top:283px;width:8px;background:#d0d0d0"></div>
<div class="r" style="left:926px;top:283px;width:8px;background:#529cd7"></div>
<div class="r" style="left:942px;top:283px;width:8px;background:#00ffff"></div>
<div class="r" style="left:950px;top:283px;width:8px;background:#529cd7"></div>
<div class="r" style="left:958px;top:283px;width:8px;background:#d0d0d0"></div>
<div class="r" style="left:966px;top:283px;width:8px;background:#529cd7"></div>
<div class="r" style="left:974px;top:283px;width:8px;background:#00ffff"></div>
<div class="r" style="left:982px;top:283px;width:16px;background:#529cd7"></div>
<div class="r" style="left:1006px;top:283px;width:8px;background:#529cd7"></div>
<div class="r" style="left:1014px;top:283px;width:16px;background:#d0d0d0"></div>
<div class="r" style="left:1030px;top:283px;width:8px;background:#00ffff"></div>
<div class="r" style="left:1046px;top:283px;width:8px;background:#00ffff"></div>
<div class="r" style="left:1070px;top:283px;width:8px;background:#529cd7"></div>
<div class="r" style="left:1094px;top:283px;width:8px;background:#00ffff"></div>
<div class="r" style="left:1118px;top:283px;width:8px;background:#529cd7"></div>
<div class="r" style="left:1126px;top:283px;width:16px;background:#d0d0d0"></div>
<div class="r" style="left:1158px;top:283px;width:8px;background:#00ffff"></div>
<div class="r" style="left:238px;top:296px;width:8px;background:#d0d0d0"></div>
<div class="r" style="left:246px;top:296px;width:8px;background:#529cd7"></div>
<div class="r" style="left:254px;top:296px;width:16px;background:#00ffff"></div>
<div class="r" style="left:270px;top:296px;width:24px;background:#529cd7"></div>
<div class="r" style="left:294px;top:296px;width:24px;background:#00ffff"></div>
<div class="r" style="left:318px;top:296px;width:16px;background:#d0d0d0"></div>
<div class="r" style="left:334px;top:296px;width:16px;background:#529cd7"></div>
<div class="r" style="left:350px;top:296px;width:8px;background:#d0d0d0"></div>
<div class="r" style="left:358px;top:296px;width:8px;background:#529cd7"></div>
<div class="r" style="left:366px;top:296px;width:8px;background:#d0d0d0"></div>
<div class="r" style="left:390px;top:296px;width:16px;background:#d0d0d0"></div>
<div class="r" style="left:422px;top:296px;width:8px;background:#00ffff"></div>
<div class="r" style="left:430px;top:296px;width:8px;background:#529cd7"></div>
<div class="r" style="left:438px;top:296px;width:8px;background:#00ffff"></div>
<div class="r" style="left:454px;top:296px;width:8px;background:#d0d0d0"></div>
<div class="r" style="left:462px;top:296px;width:8px;background:#00ffff"></div>
<div class="r" style="left:478px;top:296px;width:32px;background:#00ffff"></div>
<div class="r" style="left:510px;top:296px;width:8px;background:#d0d0d0"></div>
<div class="r" style="left:518px;top:296px;width:24px;background:#00ffff"></div>
<div class="r" style="left:550px;top:296px;width:8px;background:#00ffff"></div>
<div class="r" style="left:558px;top:296px;width:8px;background:#529cd7"></div>
<div class="r" style="left:566px;top:296px;width:8px;background:#00ffff"></div>
<div class="r" style="left:574px;top:296px;width:8px;background:#d0d0d0"></div>
<div class="r" style="left:582px;top:296px;width:16px;background:#00ffff"></div>
<div class="r" style="left:606px;top:296px;width:8px;background:#529cd7"></div>
<div class="r" style="left:622px;top:296px;width:24px;background:#d0d0d0"></div>
<div class="r" style="left:646px;top:296px;width:8px;background:#529cd7"></div>
<div class="r" style="left:702px;top:296px;width:8px;background:#529cd7"></div>
<div class="r" style="left:806px;top:296px;width:8px;background:#d0d0d0"></div>
<div class="r" style="left:814px;top:296px;width:8px;background:#00ffff"></div>
<div class="r" style="left:822px;top:296px;width:8px;background:#529cd7"></div>
<div class="r" style="left:830px;top:296px;width:8px;background:#00ffff"></div>
<div class="r" style="left:838px;top:296px;width:8px;background:#529cd7"></div>
<div class="r" style="left:846px;top:296px;width:8px;background:#00ffff"></div>
<div class="r" style="left:854px;top:296px;width:8px;background:#529cd7"></div>
<div class="r" style="left:894px;top:296px;width:8px;background:#529cd7"></div>
<div class="r" style="left:918px;top:296px;width:8px;background:#d0d0d0"></div>
<div class="r" style="left:926px;top:296px;width:8px;background:#529cd7"></div>
<div class="r" style="left:942px;top:296px;width:8px;background:#00ffff"></div>
<div class="r" style="left:950px;top:296px;width:8px;background:#529cd7"></div>
<div class="r" style="left:958px;top:296px;width:8px;background:#d0d0d0"></div>
<div class="r" style="left:966px;top:296px;width:8px;background:#529cd7"></div>
<div class="r" style="left:974px;top:296px;width:8px;background:#00ffff"></div>
<div class="r" style="left:982px;top:296px;width:16px;background:#529cd7"></div>
<div class="r" style="left:1006px;top:296px;width:8px;background:#529cd7"></div>
<div class="r" style="left:1014px;top:296px;width:16px;background:#d0d0d0"></div>
<div class="r" style="left:1030px;top:296px;width:8px;background:#00ffff"></div>
<div class="r" style="left:1046px;top:296px;width:8px;background:#00ffff"></div>
<div class="r" style="left:1070px;top:296px;width:8px;background:#529cd7"></div>
<div class="r" style="left:1094px;top:296px;width:8px;background:#00ffff"></div>
<div class="r" style="left:1118px;top:296px;width:8px;background:#529cd7"></div>
<div class="r" style="left:1126px;top:296px;width:16px;background:#d0d0d0"></div>
<div class="r" style="left:1158px;top:296px;width:8px;background:#00ffff"></div>
<div class="r" style="left:238px;top:309px;width:8px;background:#d0d0d0"></div>
<div class="r" style="left:246px;top:309px;width:8px;background:#529cd7"></div>
<div class="r" style="left:254px;top:309px;width:16px;background:#00ffff"></div>
<div class="r" style="left:270px;top:309px;width:24px;background:#529cd7"></div>
<div class="r" style="left:294px;top:309px;width:24px;background:#00ffff"></div>
<div class="r" style="left:318px;top:309px;width:8px;background:#d0d0d0"></div>
<div class="r" style="left:422px;top:309px;width:8px;background:#00ffff"></div>
<div class="r" style="left:430px;top:309px;width:8px;background:#529cd7"></div>
<div class="r" style="left:438px;top:309px;width:8px;background:#00ffff"></div>
<div class="r" style="left:454px;top:309px;width:8px;background:#d0d0d0"></div>
<div class="r" style="left:462px;top:309px;width:8px;background:#00ffff"></div>
<div class="r" style="left:478px;top:309px;width:32px;background:#00ffff"></div>
<div class="r" style="left:510px;top:309px;width:8px;background:#d0d0d0"></div>
<div class="r" style="left:518px;top:309px;width:40px;background:#00ffff"></div>
<div class="r" style="left:558px;top:309px;width:8px;background:#529cd7"></div>
<div class="r" style="left:566px;top:309px;width:8px;background:#00ffff"></div>
<div class="r" style="left:574px;top:309px;width:8px;background:#d0d0d0"></div>
<div class="r" style="left:582px;top:309px;width:16px;background:#00ffff"></div>
<div class="r" style="left:606px;top:309px;width:8px;background:#529cd7"></div>
<div class="r" style="left:630px;top:309px;width:16px;background:#d0d0d0"></div>
<div class="r" style="left:646px;top:309px;width:8px;background:#529cd7"></div>
<div class="r" style="left:678px;top:309px;width:8px;background:#d0d0d0"></div>
<div class="r" style="left:702px;top:309px;width:8px;background:#529cd7"></div>
<div class="r" style="left:806px;top:309px;width:8px;background:#d0d0d0"></div>
<div class="r" style="left:814px;top:309px;width:8px;background:#00ffff"></div>
<div class="r" style="left:822px;top:309px;width:8px;background:#529cd7"></div>
<div class="r" style="left:830px;top:309px;width:8px;background:#00ffff"></div>
<div class="r" style="left:838px;top:309px;width:8px;background:#529cd7"></div>
<div class="r" style="left:846px;top:309px;width:8px;background:#00ffff"></div>
<div class="r" style="left:894px;top:309px;width:8px;background:#529cd7"></div>
<div class="r" style="left:918px;top:309px;width:8px;background:#d0d0d0"></div>
<div class="r" style="left:942px;top:309px;width:8px;background:#00ffff"></div>
<div class="r" style="left:950px;top:309px;width:8px;background:#529cd7"></div>
<div class="r" style="left:958px;top:309px;width:8px;background:#d0d0d0"></div>
<div class="r" style="left:966px;top:309px;width:8px;background:#529cd7"></div>
<div class="r" style="left:974px;top:309px;width:8px;background:#00ffff"></div>
<div class="r" style="left:982px;top:309px;width:16px;background:#529cd7"></div>
<div class="r" style="left:1006px;top:309px;width:8px;background:#529cd7"></div>
<div class="r" style="left:1014px;top:309px;width:16px;background:#d0d0d0"></div>
<div class="r" style="left:1030px;top:309px;width:8px;background:#00ffff"></div>
<div class="r" style="left:1046px;top:309px;width:8px;background:#00ffff"></div>
<div class="r" style="left:1070px;top:309px;width:8px;background:#529cd7"></div>
<div class="r" style="left:1094px;top:309px;width:8px;background:#00ffff"></div>
<div class="r" style="left:1110px;top:309px;width:8px;background:#d0d0d0"></div>
<div class="r" style="left:1118px;top:309px;width:8px;background:#529cd7"></div>
<div class="r" style="left:1126px;top:309px;width:16px;background:#d0d0d0"></div>
<div class="r" style="left:1158px;top:309px;width:8px;background:#00ffff"></div>
<div class="r" style="left:238px;top:322px;width:8px;background:#d0d0d0"></div>
<div class="r" style="left:246px;top:322px;width:8px;background:#529cd7"></div>
<div class="r" style="left:254px;top:322px;width:16px;background:#00ffff"></div>
<div class="r" style="left:270px;top:322px;width:24px;background:#529cd7"></div>
<div class="r" style="left:294px;top:322px;width:24px;background:#00ffff"></div>
<div class="r" style="left:334px;top:322px;width:8px;background:#529cd7"></div>
<div class="r" style="left:350px;top:322px;width:8px;background:#d0d0d0"></div>
<div class="r" style="left:358px;top:322px;width:8px;background:#529cd7"></div>
<div class="r" style="left:366px;top:322px;width:16px;background:#d0d0d0"></div>
<div class="r" style="left:390px;top:322px;width:8px;background:#d0d0d0"></div>
<div class="r" style="left:430px;top:322px;width:8px;background:#529cd7"></div>
<div class="r" style="left:438px;top:322px;width:8px;background:#00ffff"></div>
<div class="r" style="left:446px;top:322px;width:16px;background:#d0d0d0"></div>
<div class="r" style="left:462px;top:322px;width:8px;background:#00ffff"></div>
<div class="r" style="left:470px;top:322px;width:8px;background:#d0d0d0"></div>
<div class="r" style="left:478px;top:322px;width:32px;background:#00ffff"></div>
<div class="r" style="left:510px;top:322px;width:8px;background:#529cd7"></div>
<div class="r" style="left:518px;top:322px;width:40px;background:#00ffff"></div>
<div class="r" style="left:558px;top:322px;width:8px;background:#529cd7"></div>
<div class="r" style="left:566px;top:322px;width:8px;background:#00ffff"></div>
<div class="r" style="left:574px;top:322px;width:8px;background:#d0d0d0"></div>
<div class="r" style="left:582px;top:322px;width:16px;background:#00ffff"></div>
<div class="r" style="left:606px;top:322px;width:8px;background:#529cd7"></div>
<div class="r" style="left:614px;top:322px;width:16px;background:#d0d0d0"></div>
<div class="r" style="left:638px;top:322px;width:8px;background:#d0d0d0"></div>
<div class="r" style="left:678px;top:322px;width:8px;background:#d0d0d0"></div>
<div class="r" style="left:702px;top:322px;width:8px;background:#529cd7"></div>
<div class="r" style="left:806px;top:322px;width:8px;background:#d0d0d0"></div>
<div class="r" style="left:814px;top:322px;width:8px;background:#00ffff"></div>
<div class="r" style="left:822px;top:322px;width:8px;background:#529cd7"></div>
<div class="r" style="left:830px;top:322px;width:8px;background:#00ffff"></div>
<div class="r" style="left:838px;top:322px;width:8px;background:#529cd7"></div>
<div class="r" style="left:846px;top:322px;width:8px;background:#00ffff"></div>
<div class="r" style="left:854px;top:322px;width:8px;background:#529cd7"></div>
<div class="r" style="left:918px;top:322px;width:8px;background:#d0d0d0"></div>
<div class="r" style="left:942px;top:322px;width:8px;background:#00ffff"></div>
<div class="r" style="left:950px;top:322px;width:8px;background:#529cd7"></div>
<div class="r" style="left:1006px;top:322px;width:8px;background:#529cd7"></div>
<div class="r" style="left:1014px;top:322px;width:8px;background:#d0d0d0"></div>
<div class="r" style="left:1030px;top:322px;width:8px;background:#00ffff"></div>
<div class="r" style="left:1046px;top:322px;width:8px;background:#00ffff"></div>
<div class="r" style="left:1094px;top:322px;width:8px;background:#00ffff"></div>
<div class="r" style="left:1110px;top:322px;width:8px;background:#d0d0d0"></div>
<div class="r" style="left:1118px;top:322px;width:8px;background:#529cd7"></div>
<div class="r" style="left:1134px;top:322px;width:8px;background:#d0d0d0"></div>
<div class="r" style="left:1158px;top:322px;width:8px;background:#00ffff"></div>
<div class="r" style="left:238px;top:335px;width:8px;background:#d0d0d0"></div>
<div class="r" style="left:246px;top:335px;width:8px;background:#529cd7"></div>
<div class="r" style="left:254px;top:335px;width:16px;background:#00ffff"></div>
<div class="r" style="left:270px;top:335px;width:24px;background:#529cd7"></div>
<div class="r" style="left:294px;top:335px;width:24px;background:#00ffff"></div>
<div class="r" style="left:334px;top:335px;width:8px;background:#529cd7"></div>
<div class="r" style="left:350px;top:335px;width:8px;background:#d0d0d0"></div>
<div class="r" style="left:358px;top:335px;width:8px;background:#529cd7"></div>
<div class="r" style="left:366px;top:335px;width:16px;background:#d0d0d0"></div>
<div class="r" style="left:390px;top:335px;width:8px;background:#d0d0d0"></div>
<div class="r" style="left:430px;top:335px;width:8px;background:#529cd7"></div>
<div class="r" style="left:438px;top:335px;width:8px;background:#00ffff"></div>
<div class="r" style="left:446px;top:335px;width:16px;background:#d0d0d0"></div>
<div class="r" style="left:462px;top:335px;width:8px;background:#00ffff"></div>
<div class="r" style="left:470px;top:335px;width:8px;background:#d0d0d0"></div>
<div class="r" style="left:478px;top:335px;width:32px;background:#00ffff"></div>
<div class="r" style="left:510px;top:335px;width:8px;background:#529cd7"></div>
<div class="r" style="left:518px;top:335px;width:40px;background:#00ffff"></div>
<div class="r" style="left:558px;top:335px;width:8px;background:#529cd7"></div>
<div class="r" style="left:566px;top:335px;width:8px;background:#00ffff"></div>
<div class="r" style="left:574px;top:335px;width:8px;background:#d0d0d0"></div>
<div class="r" style="left:582px;top:335px;width:16px;background:#00ffff"></div>
<div class="r" style="left:606px;top:335px;width:8px;background:#529cd7"></div>
<div class="r" style="left:614px;top:335px;width:16px;background:#d0d0d0"></div>
<div class="r" style="left:638px;top:335px;width:8px;background:#d0d0d0"></div>
<div class="r" style="left:678px;top:335px;width:8px;background:#d0d0d0"></div>
<div class="r" style="left:702px;top:335px;width:8px;background:#529cd7"></div>
<div class="r" style="left:806px;top:335px;width:8px;background:#d0d0d0"></div>
<div class="r" style="left:814px;top:335px;width:8px;background:#00ffff"></div>
<div class="r" style="left:822px;top:335px;width:8px;background:#529cd7"></div>
<div class="r" style="left:830px;top:335px;width:8px;background:#00ffff"></div>
<div class="r" style="left:838px;top:335px;width:8px;background:#529cd7"></div>
<div class="r" style="left:846px;top:335px;width:8px;background:#00ffff"></div>
<div class="r" style="left:854px;top:335px;width:8px;background:#529cd7"></div>
<div class="r" style="left:942px;top:335px;width:8px;background:#00ffff"></div>
<div class="r" style="left:950px;top:335px;width:8px;background:#529cd7"></div>
<div class="r" style="left:1006px;top:335px;width:8px;background:#529cd7"></div>
<div class="r" style="left:1014px;top:335px;width:8px;background:#d0d0d0"></div>
<div class="r" style="left:1030px;top:335px;width:8px;background:#00ffff"></div>
<div class="r" style="left:1046px;top:335px;width:8px;background:#00ffff"></div>
<div class="r" style="left:1094px;top:335px;width:8px;background:#00ffff"></div>
<div class="r" style="left:1110px;top:335px;width:8px;background:#d0d0d0"></div>
<div class="r" style="left:1118px;top:335px;width:8px;background:#529cd7"></div>
<div class="r" style="left:1134px;top:335px;width:8px;background:#d0d0d0"></div>
<div class="r" style="left:1158px;top:335px;width:8px;background:#00ffff"></div>
<div class="r" style="left:238px;top:348px;width:8px;background:#d0d0d0"></div>
<div class="r" style="left:246px;top:348px;width:8px;background:#529cd7"></div>
<div class="r" style="left:254px;top:348px;width:16px;background:#00ffff"></div>
<div class="r" style="left:270px;top:348px;width:24px;background:#529cd7"></div>
<div class="r" style="left:302px;top:348px;width:16px;background:#00ffff"></div>
<div class="r" style="left:334px;top:348px;width:16px;background:#529cd7"></div>
<div class="r" style="left:350px;top:348px;width:8px;background:#d0d0d0"></div>
<div class="r" style="left:358px;top:348px;width:8px;background:#529cd7"></div>
<div class="r" style="left:366px;top:348px;width:16px;background:#d0d0d0"></div>
<div class="r" style="left:422px;top:348px;width:8px;background:#00ffff"></div>
<div class="r" style="left:430px;top:348px;width:8px;background:#529cd7"></div>
<div class="r" style="left:438px;top:348px;width:8px;background:#00ffff"></div>
<div class="r" style="left:454px;top:348px;width:8px;background:#d0d0d0"></div>
<div class="r" style="left:462px;top:348px;width:8px;background:#00ffff"></div>
<div class="r" style="left:478px;top:348px;width:32px;background:#00ffff"></div>
<div class="r" style="left:510px;top:348px;width:8px;background:#529cd7"></div>
<div class="r" style="left:518px;top:348px;width:40px;background:#00ffff"></div>
<div class="r" style="left:558px;top:348px;width:8px;background:#529cd7"></div>
<div class="r" style="left:566px;top:348px;width:8px;background:#00ffff"></div>
<div class="r" style="left:582px;top:348px;width:8px;background:#00ffff"></div>
<div class="r" style="left:606px;top:348px;width:8px;background:#529cd7"></div>
<div class="r" style="left:614px;top:348px;width:8px;background:#d0d0d0"></div>
<div class="r" style="left:638px;top:348px;width:8px;background:#d0d0d0"></div>
<div class="r" style="left:646px;top:348px;width:8px;background:#529cd7"></div>
<div class="r" style="left:702px;top:348px;width:8px;background:#529cd7"></div>
<div class="r" style="left:806px;top:348px;width:8px;background:#d0d0d0"></div>
<div class="r" style="left:814px;top:348px;width:8px;background:#00ffff"></div>
<div class="r" style="left:830px;top:348px;width:8px;background:#00ffff"></div>
<div class="r" style="left:838px;top:348px;width:8px;background:#529cd7"></div>
<div class="r" style="left:846px;top:348px;width:8px;background:#00ffff"></div>
<div class="r" style="left:854px;top:348px;width:8px;background:#529cd7"></div>
<div class="r" style="left:886px;top:348px;width:8px;background:#d0d0d0"></div>
<div class="r" style="left:894px;top:348px;width:8px;background:#529cd7"></div>
<div class="r" style="left:918px;top:348px;width:8px;background:#d0d0d0"></div>
<div class="r" style="left:926px;top:348px;width:8px;background:#529cd7"></div>
<div class="r" style="left:942px;top:348px;width:8px;background:#00ffff"></div>
<div class="r" style="left:958px;top:348px;width:8px;background:#d0d0d0"></div>
<div class="r" style="left:966px;top:348px;width:8px;background:#529cd7"></div>
<div class="r" style="left:974px;top:348px;width:8px;background:#00ffff"></div>
<div class="r" style="left:982px;top:348px;width:16px;background:#529cd7"></div>
<div class="r" style="left:1006px;top:348px;width:8px;background:#529cd7"></div>
<div class="r" style="left:1014px;top:348px;width:8px;background:#d0d0d0"></div>
<div class="r" style="left:1030px;top:348px;width:8px;background:#00ffff"></div>
<div class="r" style="left:1046px;top:348px;width:8px;background:#00ffff"></div>
<div class="r" style="left:1094px;top:348px;width:8px;background:#00ffff"></div>
<div class="r" style="left:1110px;top:348px;width:8px;background:#d0d0d0"></div>
<div class="r" style="left:1118px;top:348px;width:8px;background:#529cd7"></div>
<div class="r" style="left:1126px;top:348px;width:16px;background:#d0d0d0"></div>
<div class="r" style="left:1158px;top:348px;width:8px;background:#00ffff"></div>
<div class="r" style="left:238px;top:361px;width:8px;background:#d0d0d0"></div>
<div class="r" style="left:262px;top:361px;width:8px;background:#00ffff"></div>
<div class="r" style="left:270px;top:361px;width:24px;background:#529cd7"></div>
<div class="r" style="left:294px;top:361px;width:24px;background:#00ffff"></div>
<div class="r" style="left:334px;top:361px;width:8px;background:#529cd7"></div>
<div class="r" style="left:350px;top:361px;width:8px;background:#d0d0d0"></div>
<div class="r" style="left:358px;top:361px;width:8px;background:#529cd7"></div>
<div class="r" style="left:366px;top:361px;width:16px;background:#d0d0d0"></div>
<div class="r" style="left:398px;top:361px;width:8px;background:#d0d0d0"></div>
<div class="r" style="left:414px;top:361px;width:8px;background:#d0d0d0"></div>
<div class="r" style="left:422px;top:361px;width:8px;background:#00ffff"></div>
<div class="r" style="left:438px;top:361px;width:8px;background:#00ffff"></div>
<div class="r" style="left:446px;top:361px;width:8px;background:#d0d0d0"></div>
<div class="r" style="left:462px;top:361px;width:8px;background:#00ffff"></div>
<div class="r" style="left:470px;top:361px;width:8px;background:#d0d0d0"></div>
<div class="r" style="left:478px;top:361px;width:32px;background:#00ffff"></div>
<div class="r" style="left:510px;top:361px;width:8px;background:#529cd7"></div>
<div class="r" style="left:518px;top:361px;width:40px;background:#00ffff"></div>
<div class="r" style="left:558px;top:361px;width:8px;background:#529cd7"></div>
<div class="r" style="left:566px;top:361px;width:8px;background:#00ffff"></div>
<div class="r" style="left:574px;top:361px;width:8px;background:#d0d0d0"></div>
<div class="r" style="left:582px;top:361px;width:8px;background:#00ffff"></div>
<div class="r" style="left:606px;top:361px;width:8px;background:#529cd7"></div>
<div class="r" style="left:622px;top:361px;width:8px;background:#d0d0d0"></div>
<div class="r" style="left:638px;top:361px;width:8px;background:#d0d0d0"></div>
<div class="r" style="left:646px;top:361px;width:8px;background:#529cd7"></div>
<div class="r" style="left:678px;top:361px;width:8px;background:#d0d0d0"></div>
<div class="r" style="left:702px;top:361px;width:8px;background:#529cd7"></div>
<div class="r" style="left:806px;top:361px;width:8px;background:#d0d0d0"></div>
<div class="r" style="left:814px;top:361px;width:8px;background:#00ffff"></div>
<div class="r" style="left:822px;top:361px;width:8px;background:#529cd7"></div>
<div class="r" style="left:830px;top:361px;width:8px;background:#00ffff"></div>
<div class="r" style="left:838px;top:361px;width:8px;background:#529cd7"></div>
<div class="r" style="left:846px;top:361px;width:8px;background:#00ffff"></div>
<div class="r" style="left:854px;top:361px;width:8px;background:#529cd7"></div>
<div class="r" style="left:894px;top:361px;width:8px;background:#529cd7"></div>
<div class="r" style="left:918px;top:361px;width:8px;background:#d0d0d0"></div>
<div class="r" style="left:942px;top:361px;width:8px;background:#00ffff"></div>
<div class="r" style="left:958px;top:361px;width:8px;background:#d0d0d0"></div>
<div class="r" style="left:990px;top:361px;width:8px;background:#529cd7"></div>
<div class="r" style="left:1006px;top:361px;width:8px;background:#529cd7"></div>
<div class="r" style="left:1014px;top:361px;width:16px;background:#d0d0d0"></div>
<div class="r" style="left:1030px;top:361px;width:8px;background:#00ffff"></div>
<div class="r" style="left:1046px;top:361px;width:8px;background:#00ffff"></div>
<div class="r" style="left:1070px;top:361px;width:8px;background:#529cd7"></div>
<div class="r" style="left:1118px;top:361px;width:8px;background:#529cd7"></div>
<div class="r" style="left:1134px;top:361px;width:8px;background:#d0d0d0"></div>
<div class="r" style="left:1158px;top:361px;width:8px;background:#00ffff"></div>
<div class="r" style="left:238px;top:374px;width:8px;background:#d0d0d0"></div>
<div class="r" style="left:246px;top:374px;width:8px;background:#529cd7"></div>
<div class="r" style="left:254px;top:374px;width:16px;background:#00ffff"></div>
<div class="r" style="left:270px;top:374px;width:24px;background:#529cd7"></div>
<div class="r" style="left:294px;top:374px;width:24px;background:#00ffff"></div>
<div class="r" style="left:318px;top:374px;width:8px;background:#d0d0d0"></div>
<div class="r" style="left:342px;top:374px;width:8px;background:#529cd7"></div>
<div class="r" style="left:358px;top:374px;width:8px;background:#529cd7"></div>
<div class="r" style="left:366px;top:374px;width:16px;background:#d0d0d0"></div>
<div class="r" style="left:390px;top:374px;width:16px;background:#d0d0d0"></div>
<div class="r" style="left:422px;top:374px;width:8px;background:#00ffff"></div>
<div class="r" style="left:430px;top:374px;width:8px;background:#529cd7"></div>
<div class="r" style="left:438px;top:374px;width:8px;background:#00ffff"></div>
<div class="r" style="left:446px;top:374px;width:16px;background:#d0d0d0"></div>
<div class="r" style="left:462px;top:374px;width:8px;background:#00ffff"></div>
<div class="r" style="left:470px;top:374px;width:8px;background:#d0d0d0"></div>
<div class="r" style="left:478px;top:374px;width:32px;background:#00ffff"></div>
<div class="r" style="left:510px;top:374px;width:8px;background:#529cd7"></div>
<div class="r" style="left:518px;top:374px;width:40px;background:#00ffff"></div>
<div class="r" style="left:558px;top:374px;width:8px;background:#529cd7"></div>
<div class="r" style="left:566px;top:374px;width:8px;background:#00ffff"></div>
<div class="r" style="left:582px;top:374px;width:16px;background:#00ffff"></div>
<div class="r" style="left:614px;top:374px;width:8px;background:#d0d0d0"></div>
<div class="r" style="left:630px;top:374px;width:8px;background:#d0d0d0"></div>
<div class="r" style="left:646px;top:374px;width:8px;background:#529cd7"></div>
<div class="r" style="left:806px;top:374px;width:8px;background:#d0d0d0"></div>
<div class="r" style="left:814px;top:374px;width:8px;background:#00ffff"></div>
<div class="r" style="left:822px;top:374px;width:8px;background:#529cd7"></div>
<div class="r" style="left:830px;top:374px;width:8px;background:#00ffff"></div>
<div class="r" style="left:838px;top:374px;width:8px;background:#529cd7"></div>
<div class="r" style="left:846px;top:374px;width:8px;background:#00ffff"></div>
<div class="r" style="left:854px;top:374px;width:8px;background:#529cd7"></div>
<div class="r" style="left:894px;top:374px;width:8px;background:#529cd7"></div>
<div class="r" style="left:918px;top:374px;width:8px;background:#d0d0d0"></div>
<div class="r" style="left:942px;top:374px;width:8px;background:#00ffff"></div>
<div class="r" style="left:950px;top:374px;width:8px;background:#529cd7"></div>
<div class="r" style="left:958px;top:374px;width:8px;background:#d0d0d0"></div>
<div class="r" style="left:966px;top:374px;width:8px;background:#529cd7"></div>
<div class="r" style="left:974px;top:374px;width:8px;background:#00ffff"></div>
<div class="r" style="left:982px;top:374px;width:16px;background:#529cd7"></div>
<div class="r" style="left:1006px;top:374px;width:8px;background:#529cd7"></div>
<div class="r" style="left:1014px;top:374px;width:8px;background:#d0d0d0"></div>
<div class="r" style="left:1030px;top:374px;width:8px;background:#00ffff"></div>
<div class="r" style="left:1046px;top:374px;width:8px;background:#00ffff"></div>
<div class="r" style="left:1070px;top:374px;width:8px;background:#529cd7"></div>
<div class="r" style="left:1094px;top:374px;width:8px;background:#00ffff"></div>
<div class="r" style="left:1110px;top:374px;width:8px;background:#d0d0d0"></div>
<div class="r" style="left:1118px;top:374px;width:8px;background:#529cd7"></div>
<div class="r" style="left:1126px;top:374px;width:16px;background:#d0d0d0"></div>
<div class="r" style="left:1158px;top:374px;width:8px;background:#00ffff"></div>
<div class="r" style="left:238px;top:387px;width:8px;background:#d0d0d0"></div>
<div class="r" style="left:246px;top:387px;width:8px;background:#529cd7"></div>
<div class="r" style="left:254px;top:387px;width:16px;background:#00ffff"></div>
<div class="r" style="left:270px;top:387px;width:24px;background:#529cd7"></div>
<div class="r" style="left:294px;top:387px;width:24px;background:#00ffff"></div>
<div class="r" style="left:318px;top:387px;width:8px;background:#d0d0d0"></div>
<div class="r" style="left:334px;top:387px;width:8px;background:#529cd7"></div>
<div class="r" style="left:366px;top:387px;width:8px;background:#d0d0d0"></div>
<div class="r" style="left:390px;top:387px;width:16px;background:#d0d0d0"></div>
<div class="r" style="left:422px;top:387px;width:8px;background:#00ffff"></div>
<div class="r" style="left:430px;top:387px;width:8px;background:#529cd7"></div>
<div class="r" style="left:446px;top:387px;width:16px;background:#d0d0d0"></div>
<div class="r" style="left:462px;top:387px;width:8px;background:#00ffff"></div>
<div class="r" style="left:470px;top:387px;width:8px;background:#d0d0d0"></div>
<div class="r" style="left:478px;top:387px;width:32px;background:#00ffff"></div>
<div class="r" style="left:510px;top:387px;width:8px;background:#529cd7"></div>
<div class="r" style="left:518px;top:387px;width:40px;background:#00ffff"></div>
<div class="r" style="left:558px;top:387px;width:8px;background:#529cd7"></div>
<div class="r" style="left:566px;top:387px;width:8px;background:#00ffff"></div>
<div class="r" style="left:582px;top:387px;width:8px;background:#00ffff"></div>
<div class="r" style="left:606px;top:387px;width:8px;background:#529cd7"></div>
<div class="r" style="left:614px;top:387px;width:8px;background:#d0d0d0"></div>
<div class="r" style="left:638px;top:387px;width:8px;background:#d0d0d0"></div>
<div class="r" style="left:646px;top:387px;width:8px;background:#529cd7"></div>
<div class="r" style="left:678px;top:387px;width:8px;background:#d0d0d0"></div>
<div class="r" style="left:702px;top:387px;width:8px;background:#529cd7"></div>
<div class="r" style="left:814px;top:387px;width:8px;background:#00ffff"></div>
<div class="r" style="left:822px;top:387px;width:8px;background:#529cd7"></div>
<div class="r" style="left:830px;top:387px;width:8px;background:#00ffff"></div>
<div class="r" style="left:838px;top:387px;width:8px;background:#529cd7"></div>
<div class="r" style="left:846px;top:387px;width:8px;background:#00ffff"></div>
<div class="r" style="left:854px;top:387px;width:8px;background:#529cd7"></div>
<div class="r" style="left:894px;top:387px;width:8px;background:#529cd7"></div>
<div class="r" style="left:918px;top:387px;width:8px;background:#d0d0d0"></div>
<div class="r" style="left:942px;top:387px;width:8px;background:#00ffff"></div>
<div class="r" style="left:958px;top:387px;width:8px;background:#d0d0d0"></div>
<div class="r" style="left:966px;top:387px;width:8px;background:#529cd7"></div>
<div class="r" style="left:974px;top:387px;width:8px;background:#00ffff"></div>
<div class="r" style="left:982px;top:387px;width:16px;background:#529cd7"></div>
<div class="r" style="left:1006px;top:387px;width:8px;background:#529cd7"></div>
<div class="r" style="left:1014px;top:387px;width:16px;background:#d0d0d0"></div>
<div class="r" style="left:1030px;top:387px;width:8px;background:#00ffff"></div>
<div class="r" style="left:1046px;top:387px;width:8px;background:#00ffff"></div>
<div class="r" style="left:1070px;top:387px;width:8px;background:#529cd7"></div>
<div class="r" style="left:1094px;top:387px;width:8px;background:#00ffff"></div>
<div class="r" style="left:1110px;top:387px;width:8px;background:#d0d0d0"></div>
<div class="r" style="left:1118px;top:387px;width:8px;background:#529cd7"></div>
<div class="r" style="left:1134px;top:387px;width:8px;background:#d0d0d0"></div>
<div class="r" style="left:1158px;top:387px;width:8px;background:#00ffff"></div>
<div class="r" style="left:238px;top:400px;width:8px;background:#d0d0d0"></div>
<div class="r" style="left:246px;top:400px;width:8px;background:#529cd7"></div>
<div class="r" style="left:254px;top:400px;width:16px;background:#00ffff"></div>
<div class="r" style="left:270px;top:400px;width:16px;background:#529cd7"></div>
<div class="r" style="left:302px;top:400px;width:8px;background:#00ffff"></div>
<div class="r" style="left:326px;top:400px;width:8px;background:#d0d0d0"></div>
<div class="r" style="left:350px;top:400px;width:8px;background:#d0d0d0"></div>
<div class="r" style="left:358px;top:400px;width:8px;background:#529cd7"></div>
<div class="r" style="left:366px;top:400px;width:16px;background:#d0d0d0"></div>
<div class="r" style="left:390px;top:400px;width:16px;background:#d0d0d0"></div>
<div class="r" style="left:430px;top:400px;width:8px;background:#529cd7"></div>
<div class="r" style="left:438px;top:400px;width:8px;background:#00ffff"></div>
<div class="r" style="left:446px;top:400px;width:8px;background:#d0d0d0"></div>
<div class="r" style="left:462px;top:400px;width:8px;background:#00ffff"></div>
<div class="r" style="left:470px;top:400px;width:8px;background:#d0d0d0"></div>
<div class="r" style="left:478px;top:400px;width:32px;background:#00ffff"></div>
<div class="r" style="left:510px;top:400px;width:8px;background:#529cd7"></div>
<div class="r" style="left:518px;top:400px;width:40px;background:#00ffff"></div>
<div class="r" style="left:558px;top:400px;width:8px;background:#529cd7"></div>
<div class="r" style="left:566px;top:400px;width:8px;background:#00ffff"></div>
<div class="r" style="left:574px;top:400px;width:8px;background:#d0d0d0"></div>
<div class="r" style="left:590px;top:400px;width:8px;background:#00ffff"></div>
<div class="r" style="left:614px;top:400px;width:8px;background:#d0d0d0"></div>
<div class="r" style="left:638px;top:400px;width:8px;background:#d0d0d0"></div>
<div class="r" style="left:646px;top:400px;width:8px;background:#529cd7"></div>
<div class="r" style="left:702px;top:400px;width:8px;background:#529cd7"></div>
<div class="r" style="left:806px;top:400px;width:8px;background:#d0d0d0"></div>
<div class="r" style="left:814px;top:400px;width:8px;background:#00ffff"></div>
<div class="r" style="left:830px;top:400px;width:8px;background:#00ffff"></div>
<div class="r" style="left:838px;top:400px;width:8px;background:#529cd7"></div>
<div class="r" style="left:846px;top:400px;width:8px;background:#00ffff"></div>
<div class="r" style="left:854px;top:400px;width:8px;background:#529cd7"></div>
<div class="r" style="left:886px;top:400px;width:8px;background:#d0d0d0"></div>
<div class="r" style="left:918px;top:400px;width:8px;background:#d0d0d0"></div>
<div class="r" style="left:950px;top:400px;width:8px;background:#529cd7"></div>
<div class="r" style="left:958px;top:400px;width:8px;background:#d0d0d0"></div>
<div class="r" style="left:966px;top:400px;width:8px;background:#529cd7"></div>
<div class="r" style="left:974px;top:400px;width:8px;background:#00ffff"></div>
<div class="r" style="left:982px;top:400px;width:16px;background:#529cd7"></div>
<div class="r" style="left:1006px;top:400px;width:8px;background:#529cd7"></div>
<div class="r" style="left:1014px;top:400px;width:8px;background:#d0d0d0"></div>
<div class="r" style="left:1030px;top:400px;width:8px;background:#00ffff"></div>
<div class="r" style="left:1046px;top:400px;width:8px;background:#00ffff"></div>
<div class="r" style="left:1118px;top:400px;width:8px;background:#529cd7"></div>
<div class="r" style="left:1134px;top:400px;width:8px;background:#d0d0d0"></div>
<div class="r" style="left:1158px;top:400px;width:8px;background:#00ffff"></div>
<div class="r" style="left:238px;top:413px;width:8px;background:#d0d0d0"></div>
<div class="r" style="left:254px;top:413px;width:16px;background:#00ffff"></div>
<div class="r" style="left:270px;top:413px;width:8px;background:#529cd7"></div>
<div class="r" style="left:286px;top:413px;width:8px;background:#529cd7"></div>
<div class="r" style="left:294px;top:413px;width:16px;background:#00ffff"></div>
<div class="r" style="left:342px;top:413px;width:8px;background:#529cd7"></div>
<div class="r" style="left:358px;top:413px;width:8px;background:#529cd7"></div>
<div class="r" style="left:366px;top:413px;width:8px;background:#d0d0d0"></div>
<div class="r" style="left:390px;top:413px;width:16px;background:#d0d0d0"></div>
<div class="r" style="left:454px;top:413px;width:8px;background:#d0d0d0"></div>
<div class="r" style="left:462px;top:413px;width:8px;background:#00ffff"></div>
<div class="r" style="left:470px;top:413px;width:8px;background:#d0d0d0"></div>
<div class="r" style="left:478px;top:413px;width:16px;background:#00ffff"></div>
<div class="r" style="left:502px;top:413px;width:8px;background:#00ffff"></div>
<div class="r" style="left:510px;top:413px;width:8px;background:#d0d0d0"></div>
<div class="r" style="left:526px;top:413px;width:16px;background:#00ffff"></div>
<div class="r" style="left:550px;top:413px;width:8px;background:#00ffff"></div>
<div class="r" style="left:558px;top:413px;width:8px;background:#529cd7"></div>
<div class="r" style="left:566px;top:413px;width:8px;background:#00ffff"></div>
<div class="r" style="left:582px;top:413px;width:8px;background:#00ffff"></div>
<div class="r" style="left:614px;top:413px;width:32px;background:#d0d0d0"></div>
<div class="r" style="left:678px;top:413px;width:8px;background:#d0d0d0"></div>
<div class="r" style="left:702px;top:413px;width:8px;background:#529cd7"></div>
<div class="r" style="left:806px;top:413px;width:8px;background:#d0d0d0"></div>
<div class="r" style="left:830px;top:413px;width:8px;background:#00ffff"></div>
<div class="r" style="left:846px;top:413px;width:8px;background:#00ffff"></div>
<div class="r" style="left:854px;top:413px;width:8px;background:#529cd7"></div>
<div class="r" style="left:886px;top:413px;width:8px;background:#d0d0d0"></div>
<div class="r" style="left:950px;top:413px;width:8px;background:#529cd7"></div>
<div class="r" style="left:958px;top:413px;width:8px;background:#d0d0d0"></div>
<div class="r" style="left:1006px;top:413px;width:8px;background:#529cd7"></div>
<div class="r" style="left:1030px;top:413px;width:8px;background:#00ffff"></div>
<div class="r" style="left:1046px;top:413px;width:8px;background:#00ffff"></div>
<div class="r" style="left:1094px;top:413px;width:8px;background:#00ffff"></div>
<div class="r" style="left:1126px;top:413px;width:16px;background:#d0d0d0"></div>
<div class="r" style="left:1158px;top:413px;width:8px;background:#00ffff"></div>
<div class="a" style="left:278px;top:10px;width:886px;height:14px;background:#a0c8ff"></div>
<div class="hl" style="left:2px;top:3px;width:1162px"></div>
<div class="vl" style="left:2px;top:3px;height:495px"></div>
<div class="hl" style="left:2px;top:497px;width:1162px"></div>
<div class="hl" style="left:2px;top:29px;width:1162px"></div>
<div class="hl" style="left:2px;top:55px;width:1162px"></div>
<div class="vl" style="left:90px;top:55px;height:442px"></div>
<div class="vl" style="left:106px;top:55px;height:442px"></div>
<div class="vl" style="left:138px;top:55px;height:442px"></div>
<div class="bx" style="left:6px;top:8px;width:39px;height:16px"></div>
<div class="bx" style="left:54px;top:8px;width:39px;height:16px"></div>
<div class="bx" style="left:102px;top:8px;width:55px;height:16px"></div>
<div class="bx" style="left:166px;top:8px;width:39px;height:16px"></div>
<div class="a" style="left:152px;top:485px;width:1012px;height:12px;background:#ebebeb"></div>
<div class="a" style="left:330px;top:485px;width:448px;height:12px;background:#a0c8ff"></div>
<div class="hl" style="left:138px;top:484px;width:1026px"></div>
<div class="vl" style="left:151px;top:484px;height:13px"></div>
<div class="vl" style="left:329px;top:484px;height:13px"></div>
<div class="vl" style="left:778px;top:484px;height:13px"></div>
<svg class="a" style="left:138px;top:484px" width="14" height="14" viewBox="0 0 14 14"><polygon points="1,7 13,1 13,13" fill="#a0c8ff"/><polyline points="13,0.6 1,7 13,13.4" fill="none" stroke="#000" stroke-width="1.1"/></svg>
<div id="txt">
<div class="ln" style="top:10.75px"><i style="left:8.75px">F</i><i style="left:17px">i</i><i style="left:24px">l</i><i style="left:32.75px">e</i></div>
<div class="ln" style="top:10.75px"><i style="left:56.5px">E</i><i style="left:64.25px">d</i><i style="left:73px">i</i><i style="left:80.5px">t</i></div>
<div class="ln" style="top:10.75px"><i style="left:105.25px">C</i><i style="left:112.75px">o</i><i style="left:120px">l</i><i style="left:128.75px">o</i><i style="left:137px">u</i><i style="left:144px">r</i></div>
<div class="ln" style="top:10.75px"><i style="left:169px">S</i><i style="left:176.75px">o</i><i style="left:184px">r</i><i style="left:192.5px">t</i></div>
<div class="ln" style="top:10.75px"><i style="left:213.75px">P</i><i style="left:222px">i</i><i style="left:230.25px">c</i><i style="left:237.25px">k</i><i style="left:245.75px">e</i><i style="left:253.25px">d</i><i style="left:261px">:</i></div>
<div class="ln" style="top:36.75px"><i style="left:7px">(</i><i style="left:14.25px">2</i><i style="left:21.75px">8</i><i style="left:29.5px">x</i><i style="left:37.5px">3</i><i style="left:46.25px">2</i><i style="left:53.75px">5</i><i style="left:62px">)</i></div>
<div class="ln" style="top:36.75px"><i style="left:174px">6</i><i style="left:182px">O</i><i style="left:253.75px">7</i><i style="left:262px">O</i><i style="left:333.75px">8</i><i style="left:342px">O</i><i style="left:413.5px">9</i><i style="left:422px">O</i><i style="left:486px">1</i><i style="left:494px">O</i><i style="left:502px">O</i><i style="left:566px">1</i><i style="left:574px">1</i><i style="left:582px">O</i><i style="left:646px">1</i><i style="left:654.25px">2</i><i style="left:662px">O</i><i style="left:726px">1</i><i style="left:733.5px">3</i><i style="left:742px">O</i><i style="left:806px">1</i><i style="left:813.25px">4</i><i style="left:822px">O</i><i style="left:886px">1</i><i style="left:893.75px">5</i><i style="left:902px">O</i><i style="left:966px">1</i><i style="left:974px">6</i><i style="left:982px">O</i><i style="left:1046px">1</i><i style="left:1053.75px">7</i><i style="left:1062px">O</i><i style="left:1126px">1</i><i style="left:1133.75px">8</i><i style="left:1142px">O</i></div>
<div class="ln" style="top:62.75px"><i style="left:5.75px">R</i><i style="left:13.75px">P</i><i style="left:21.5px">E</i><i style="left:45.5px">Y</i><i style="left:54.25px">C</i><i style="left:61.5px">L</i><i style="left:69.5px">E</i></div>
<div class="ln" style="top:62.75px"><i style="left:94px">1</i></div>
<div class="ln" style="top:62.75px"><i style="left:110.25px">2</i><i style="left:118.25px">2</i><i style="left:125.25px">4</i></div>
<div class="ln" style="top:62.75px"><i style="left:214.25px">G</i><i style="left:221.75px">P</i><i style="left:229.5px">L</i><i style="left:237.25px">I</i><i style="left:253.75px">P</i><i style="left:262px">S</i><i style="left:269.25px">I</i><i style="left:277.5px">L</i><i style="left:301.75px">D</i><i style="left:309.75px">F</i><i style="left:325.75px">R</i><i style="left:333.5px">L</i><i style="left:341.25px">T</i><i style="left:349.75px">D</i><i style="left:357.5px">E</i><i style="left:381.5px">V</i><i style="left:389.5px">V</i><i style="left:422px">S</i><i style="left:437.75px">D</i><i style="left:453.5px">L</i><i style="left:462px">H</i><i style="left:469.5px">V</i><i style="left:477.75px">D</i><i style="left:485.5px">V</i><i style="left:501.75px">D</i><i style="left:510.25px">G</i><i style="left:518px">H</i><i style="left:525.75px">F</i><i style="left:533.5px">V</i><i style="left:541.75px">P</i><i style="left:557.5px">L</i><i style="left:565.25px">T</i><i style="left:573.25px">I</i><i style="left:582.25px">G</i><i style="left:589.5px">L</i><i style="left:597.75px">P</i><i style="left:605.5px">V</i><i style="left:613.5px">V</i><i style="left:621.25px">Q</i><i style="left:630px">S</i><i style="left:637.5px">L</i><i style="left:645.5px">L</i><i style="left:670px">S</i><i style="left:677.75px">D</i><i style="left:685.25px">I</i><i style="left:693.75px">P</i><i style="left:813.75px">D</i><i style="left:822.25px">C</i><i style="left:830px">H</i><i style="left:837.5px">L</i><i style="left:853.25px">I</i><i style="left:861.75px">D</i><i style="left:885.75px">P</i><i style="left:893.75px">D</i><i style="left:901.75px">R</i><i style="left:925.75px">P</i><i style="left:933.75px">P</i><i style="left:941.5px">Y</i><i style="left:957.5px">E</i><i style="left:974.25px">G</i><i style="left:989.5px">Y</i><i style="left:1005.5px">V</i><i style="left:1013.25px">T</i><i style="left:1021.75px">F</i><i style="left:1030px">H</i><i style="left:1045.5px">E</i><i style="left:1077.25px">T</i><i style="left:1085.75px">D</i><i style="left:1101.75px">P</i><i style="left:1109.5px">V</i><i style="left:1118.25px">G</i><i style="left:1125.5px">V</i><i style="left:1142px">H</i><i style="left:1149.75px">D</i><i style="left:1157.25px">I</i></div>
<div class="ln" style="top:75.75px"><i style="left:5.75px">R</i><i style="left:13.75px">P</i><i style="left:21.5px">E</i><i style="left:45.5px">Y</i><i style="left:54.25px">C</i><i style="left:61.25px">T</i><i style="left:70.25px">U</i></div>
<div class="ln" style="top:75.75px"><i style="left:94px">1</i></div>
<div class="ln" style="top:75.75px"><i style="left:110.25px">2</i><i style="left:118.25px">2</i><i style="left:125.5px">9</i></div>
<div class="ln" style="top:75.75px"><i style="left:182.25px">G</i><i style="left:190px">S</i><i style="left:197.25px">T</i><i style="left:206.25px">G</i><i style="left:214.25px">G</i><i style="left:221.75px">P</i><i style="left:229.5px">L</i><i style="left:237.25px">I</i><i style="left:253.75px">P</i><i style="left:262px">S</i><i style="left:269.25px">I</i><i style="left:277.5px">L</i><i style="left:301.75px">D</i><i style="left:309.75px">F</i><i style="left:325.75px">R</i><i style="left:333.5px">L</i><i style="left:349.75px">D</i><i style="left:357.5px">E</i><i style="left:389.5px">V</i><i style="left:422.25px">G</i><i style="left:437.75px">D</i><i style="left:453.5px">L</i><i style="left:462px">H</i><i style="left:469.5px">V</i><i style="left:477.75px">D</i><i style="left:485.5px">V</i><i style="left:501.75px">D</i><i style="left:510.25px">G</i><i style="left:518px">H</i><i style="left:525.75px">F</i><i style="left:533.5px">V</i><i style="left:541.75px">P</i><i style="left:557.5px">L</i><i style="left:565.25px">T</i><i style="left:573.25px">I</i><i style="left:582.25px">G</i><i style="left:589.5px">L</i><i style="left:597.75px">P</i><i style="left:605.5px">V</i><i style="left:613.5px">V</i><i style="left:621.5px">E</i><i style="left:630px">S</i><i style="left:637.5px">L</i><i style="left:645.5px">L</i><i style="left:661.5px">V</i><i style="left:669.25px">T</i><i style="left:677.75px">D</i><i style="left:685.25px">I</i><i style="left:693.75px">P</i><i style="left:813.75px">D</i><i style="left:822.25px">C</i><i style="left:830px">H</i><i style="left:837.5px">L</i><i style="left:853.25px">I</i><i style="left:861.75px">D</i><i style="left:885.75px">P</i><i style="left:893.75px">D</i><i style="left:901.75px">R</i><i style="left:925.75px">P</i><i style="left:933.75px">P</i><i style="left:941.5px">Y</i><i style="left:957.5px">E</i><i style="left:974.25px">G</i><i style="left:989.5px">Y</i><i style="left:1005.5px">V</i><i style="left:1013.25px">T</i><i style="left:1021.75px">F</i><i style="left:1030px">H</i><i style="left:1045.5px">E</i><i style="left:1077.25px">T</i><i style="left:1085.75px">D</i><i style="left:1101.75px">P</i><i style="left:1109.5px">V</i><i style="left:1118.25px">G</i><i style="left:1125.5px">V</i><i style="left:1141.75px">R</i><i style="left:1149.75px">D</i><i style="left:1157.25px">I</i></div>
<div class="ln" style="top:88.75px"><i style="left:5.75px">R</i><i style="left:13.75px">P</i><i style="left:21.5px">E</i><i style="left:38px">S</i><i style="left:45.25px">T</i><i style="left:53.75px">R</i><i style="left:62.25px">C</i><i style="left:70px">O</i></div>
<div class="ln" style="top:88.75px"><i style="left:94px">1</i></div>
<div class="ln" style="top:88.75px"><i style="left:110.25px">2</i><i style="left:118.25px">2</i><i style="left:125.75px">8</i></div>
<div class="ln" style="top:88.75px"><i style="left:229.25px">Q</i><i style="left:237.25px">I</i><i style="left:253.75px">P</i><i style="left:262px">S</i><i style="left:269.25px">I</i><i style="left:277.5px">L</i><i style="left:286px">S</i><i style="left:301.75px">D</i><i style="left:309.75px">F</i><i style="left:325.75px">R</i><i style="left:333.5px">L</i><i style="left:349.75px">D</i><i style="left:357.5px">E</i><i style="left:373.75px">K</i><i style="left:389.5px">V</i><i style="left:397.5px">E</i><i style="left:422.25px">G</i><i style="left:437.75px">D</i><i style="left:453.5px">L</i><i style="left:462px">H</i><i style="left:469.5px">V</i><i style="left:477.75px">D</i><i style="left:485.5px">V</i><i style="left:501.75px">D</i><i style="left:518px">H</i><i style="left:525.75px">F</i><i style="left:533.5px">V</i><i style="left:541.75px">P</i><i style="left:557.5px">L</i><i style="left:565.25px">T</i><i style="left:573.5px">L</i><i style="left:582.25px">G</i><i style="left:589.5px">V</i><i style="left:597.75px">P</i><i style="left:605.5px">V</i><i style="left:613.5px">V</i><i style="left:621.5px">E</i><i style="left:630px">S</i><i style="left:637.5px">L</i><i style="left:653.75px">R</i><i style="left:669.25px">T</i><i style="left:677.75px">D</i><i style="left:685.25px">T</i><i style="left:693.75px">P</i><i style="left:805.5px">L</i><i style="left:813.75px">D</i><i style="left:822.25px">C</i><i style="left:830px">H</i><i style="left:837.5px">L</i><i style="left:853.25px">I</i><i style="left:861.5px">E</i><i style="left:885.75px">P</i><i style="left:893.75px">D</i><i style="left:901.75px">R</i><i style="left:925.75px">P</i><i style="left:933.25px">Q</i><i style="left:941.5px">Y</i><i style="left:949.5px">V</i><i style="left:957.5px">E</i><i style="left:974.25px">G</i><i style="left:990.25px">G</i><i style="left:998px">S</i><i style="left:1005.5px">V</i><i style="left:1013.25px">T</i><i style="left:1021.75px">F</i><i style="left:1030px">H</i><i style="left:1045.5px">E</i><i style="left:1101.75px">P</i><i style="left:1109.5px">V</i><i style="left:1117.75px">R</i><i style="left:1125.5px">L</i><i style="left:1141.75px">R</i><i style="left:1149.5px">E</i><i style="left:1157.25px">I</i></div>
<div class="ln" style="top:101.75px"><i style="left:5.75px">R</i><i style="left:13.75px">P</i><i style="left:21.5px">E</i><i style="left:37.5px">Y</i><i style="left:45.5px">E</i><i style="left:62px">S</i><i style="left:69.25px">T</i></div>
<div class="ln" style="top:101.75px"><i style="left:94px">1</i></div>
<div class="ln" style="top:101.75px"><i style="left:110.25px">2</i><i style="left:117.5px">3</i><i style="left:125.75px">8</i></div>
<div class="ln" style="top:101.75px"><i style="left:205.5px">V</i><i style="left:213.75px">K</i><i style="left:221.75px">P</i><i style="left:229.25px">I</i><i style="left:237.25px">I</i><i style="left:253.75px">P</i><i style="left:262px">S</i><i style="left:269.25px">I</i><i style="left:277.5px">L</i><i style="left:294px">S</i><i style="left:301.75px">D</i><i style="left:309.75px">F</i><i style="left:333.5px">L</i><i style="left:342.25px">G</i><i style="left:350.25px">C</i><i style="left:357.5px">E</i><i style="left:366.25px">C</i><i style="left:374px">H</i><i style="left:381.75px">K</i><i style="left:389.5px">V</i><i style="left:397.25px">I</i><i style="left:422.25px">G</i><i style="left:437.75px">D</i><i style="left:453.5px">L</i><i style="left:462px">H</i><i style="left:469.25px">I</i><i style="left:477.75px">D</i><i style="left:485.5px">V</i><i style="left:501.75px">D</i><i style="left:510.25px">G</i><i style="left:518px">H</i><i style="left:525.75px">F</i><i style="left:533.5px">V</i><i style="left:541.75px">P</i><i style="left:557.25px">I</i><i style="left:565.25px">T</i><i style="left:573.5px">L</i><i style="left:582.25px">G</i><i style="left:589.25px">Q</i><i style="left:597.75px">P</i><i style="left:605.25px">I</i><i style="left:613.5px">V</i><i style="left:621.25px">T</i><i style="left:630px">S</i><i style="left:637.5px">L</i><i style="left:645.75px">R</i><i style="left:653.75px">R</i><i style="left:662px">S</i><i style="left:669.5px">V</i><i style="left:677.75px">P</i><i style="left:685.75px">R</i><i style="left:693.75px">P</i><i style="left:702.25px">G</i><i style="left:709.75px">D</i><i style="left:726px">S</i><i style="left:741.25px">T</i><i style="left:749.5px">E</i><i style="left:757.75px">K</i><i style="left:765.75px">K</i><i style="left:773.75px">P</i><i style="left:781.25px">T</i><i style="left:797.75px">F</i><i style="left:805.75px">F</i><i style="left:813.75px">D</i><i style="left:822.25px">C</i><i style="left:830px">H</i><i style="left:853.5px">V</i><i style="left:861.5px">E</i><i style="left:885.75px">P</i><i style="left:893.5px">E</i><i style="left:901.75px">K</i><i style="left:917.5px">V</i><i style="left:925.75px">D</i><i style="left:933.75px">D</i><i style="left:941.75px">F</i><i style="left:957.75px">K</i><i style="left:966.25px">C</i><i style="left:974.25px">G</i><i style="left:989.75px">D</i><i style="left:997.25px">Q</i><i style="left:1005.75px">F</i><i style="left:1013.25px">T</i><i style="left:1021.75px">F</i><i style="left:1030px">H</i><i style="left:1037.5px">Y</i><i style="left:1045.5px">E</i><i style="left:1077.25px">T</i><i style="left:1085.25px">Q</i><i style="left:1093.75px">D</i><i style="left:1101.75px">P</i><i style="left:1109.5px">L</i><i style="left:1118px">H</i><i style="left:1125.5px">L</i><i style="left:1133.5px">V</i><i style="left:1141.75px">K</i><i style="left:1149.5px">L</i><i style="left:1157.25px">I</i></div>
<div class="ln" style="top:114.75px"><i style="left:5.75px">R</i><i style="left:13.75px">P</i><i style="left:21.5px">E</i><i style="left:38.25px">C</i><i style="left:46px">H</i><i style="left:53.5px">L</i><i style="left:61.25px">T</i><i style="left:69.75px">R</i></div>
<div class="ln" style="top:114.75px"><i style="left:94px">1</i></div>
<div class="ln" style="top:114.75px"><i style="left:110.25px">2</i><i style="left:117.5px">3</i><i style="left:125.5px">3</i></div>
<div class="ln" style="top:114.75px"><i style="left:141.75px">R</i><i style="left:149.5px">E</i><i style="left:157.5px">E</i><i style="left:181.75px">K</i><i style="left:189.75px">K</i><i style="left:197.25px">Q</i><i style="left:214.25px">G</i><i style="left:221.5px">V</i><i style="left:229.5px">L</i><i style="left:237.5px">V</i><i style="left:253.75px">P</i><i style="left:262px">S</i><i style="left:269.25px">I</i><i style="left:286.25px">G</i><i style="left:301.75px">D</i><i style="left:309.5px">L</i><i style="left:326.25px">C</i><i style="left:333.25px">I</i><i style="left:342.25px">G</i><i style="left:349.75px">R</i><i style="left:357.5px">E</i><i style="left:373.75px">R</i><i style="left:389.25px">I</i><i style="left:397.5px">E</i><i style="left:405.5px">E</i><i style="left:414px">S</i><i style="left:422.25px">G</i><i style="left:437.75px">D</i><i style="left:445.5px">L</i><i style="left:453.25px">I</i><i style="left:462px">H</i><i style="left:469.25px">I</i><i style="left:477.75px">D</i><i style="left:485.5px">V</i><i style="left:501.75px">D</i><i style="left:510.25px">G</i><i style="left:518px">H</i><i style="left:525.75px">F</i><i style="left:533.5px">V</i><i style="left:541.75px">P</i><i style="left:557.25px">I</i><i style="left:565.25px">T</i><i style="left:573.75px">F</i><i style="left:582.25px">G</i><i style="left:589.75px">P</i><i style="left:598.25px">G</i><i style="left:605.5px">V</i><i style="left:613.5px">V</i><i style="left:637.25px">I</i><i style="left:653.75px">R</i><i style="left:662px">S</i><i style="left:677.25px">T</i><i style="left:685.5px">E</i><i style="left:693.5px">L</i><i style="left:701.75px">F</i><i style="left:805.5px">L</i><i style="left:813.5px">E</i><i style="left:821.5px">V</i><i style="left:830px">H</i><i style="left:853.25px">I</i><i style="left:861.5px">Y</i><i style="left:877.25px">T</i><i style="left:885.75px">P</i><i style="left:893.75px">F</i><i style="left:901.5px">E</i><i style="left:909.75px">F</i><i style="left:917.5px">V</i><i style="left:925.5px">E</i><i style="left:941.75px">F</i><i style="left:949.5px">V</i><i style="left:957.75px">K</i><i style="left:974.25px">G</i><i style="left:989.75px">D</i><i style="left:997.75px">R</i><i style="left:1005.25px">I</i><i style="left:1013.25px">I</i><i style="left:1021.5px">V</i><i style="left:1030px">H</i><i style="left:1037.75px">F</i><i style="left:1045.5px">E</i><i style="left:1085.5px">E</i><i style="left:1101.25px">I</i><i style="left:1109.75px">K</i><i style="left:1117.5px">E</i><i style="left:1125.25px">I</i><i style="left:1133.25px">I</i><i style="left:1142px">S</i><i style="left:1149.5px">Y</i><i style="left:1157.25px">I</i></div>
<div class="ln" style="top:127.75px"><i style="left:5.75px">R</i><i style="left:13.75px">P</i><i style="left:21.5px">E</i><i style="left:38.25px">C</i><i style="left:46px">H</i><i style="left:53.5px">L</i><i style="left:70.25px">U</i></div>
<div class="ln" style="top:127.75px"><i style="left:94px">1</i></div>
<div class="ln" style="top:127.75px"><i style="left:110.25px">2</i><i style="left:118.25px">2</i><i style="left:125.75px">8</i></div>
<div class="ln" style="top:127.75px"><i style="left:181.75px">K</i><i style="left:189.75px">K</i><i style="left:197.25px">Q</i><i style="left:214.25px">G</i><i style="left:221.5px">V</i><i style="left:229.5px">L</i><i style="left:237.25px">I</i><i style="left:253.75px">P</i><i style="left:262px">S</i><i style="left:269.25px">I</i><i style="left:286.25px">G</i><i style="left:301.75px">D</i><i style="left:309.5px">L</i><i style="left:326.25px">C</i><i style="left:333.5px">L</i><i style="left:342.25px">G</i><i style="left:349.75px">D</i><i style="left:373.75px">R</i><i style="left:389.25px">I</i><i style="left:397.5px">E</i><i style="left:405.5px">E</i><i style="left:414px">S</i><i style="left:422.25px">G</i><i style="left:445.5px">L</i><i style="left:453.25px">I</i><i style="left:462px">H</i><i style="left:469.25px">I</i><i style="left:477.75px">D</i><i style="left:485.5px">V</i><i style="left:501.75px">D</i><i style="left:510.25px">G</i><i style="left:518px">H</i><i style="left:525.75px">F</i><i style="left:533.5px">V</i><i style="left:541.75px">P</i><i style="left:557.25px">I</i><i style="left:565.25px">T</i><i style="left:573.75px">F</i><i style="left:582.25px">G</i><i style="left:589.75px">P</i><i style="left:598.25px">G</i><i style="left:605.25px">I</i><i style="left:613.25px">I</i><i style="left:637.25px">I</i><i style="left:653.75px">R</i><i style="left:662px">S</i><i style="left:677.25px">T</i><i style="left:685.75px">D</i><i style="left:693.5px">L</i><i style="left:701.75px">F</i><i style="left:805.5px">L</i><i style="left:813.5px">E</i><i style="left:821.5px">V</i><i style="left:830px">H</i><i style="left:853.25px">I</i><i style="left:861.5px">Y</i><i style="left:877.25px">T</i><i style="left:885.75px">P</i><i style="left:893.75px">F</i><i style="left:901.5px">E</i><i style="left:909.75px">F</i><i style="left:917.5px">V</i><i style="left:925.5px">E</i><i style="left:941.75px">F</i><i style="left:949.5px">V</i><i style="left:957.75px">K</i><i style="left:974.25px">G</i><i style="left:989.75px">D</i><i style="left:997.75px">R</i><i style="left:1005.25px">I</i><i style="left:1013.25px">I</i><i style="left:1021.5px">V</i><i style="left:1030px">H</i><i style="left:1037.75px">F</i><i style="left:1045.5px">E</i><i style="left:1085.5px">E</i><i style="left:1101.5px">L</i><i style="left:1109.75px">K</i><i style="left:1117.5px">E</i><i style="left:1125.25px">I</i><i style="left:1133.5px">L</i><i style="left:1141.75px">D</i><i style="left:1149.5px">Y</i><i style="left:1157.25px">I</i></div>
<div class="ln" style="top:140.75px"><i style="left:5.75px">R</i><i style="left:13.75px">P</i><i style="left:21.5px">E</i><i style="left:38.25px">C</i><i style="left:46px">H</i><i style="left:53.5px">L</i><i style="left:61.75px">P</i></div>
<div class="ln" style="top:140.75px"><i style="left:94px">1</i></div>
<div class="ln" style="top:140.75px"><i style="left:110.25px">2</i><i style="left:118.25px">2</i><i style="left:125.5px">9</i></div>
<div class="ln" style="top:140.75px"><i style="left:181.75px">K</i><i style="left:189.75px">K</i><i style="left:197.25px">Q</i><i style="left:205.5px">E</i><i style="left:214px">S</i><i style="left:221.5px">V</i><i style="left:229.5px">L</i><i style="left:237.5px">V</i><i style="left:246.25px">G</i><i style="left:253.75px">P</i><i style="left:262px">S</i><i style="left:269.25px">I</i><i style="left:286.25px">G</i><i style="left:301.75px">D</i><i style="left:309.5px">L</i><i style="left:317.25px">T</i><i style="left:326.25px">C</i><i style="left:333.5px">L</i><i style="left:342.25px">G</i><i style="left:349.5px">V</i><i style="left:357.5px">E</i><i style="left:373.75px">K</i><i style="left:381.75px">K</i><i style="left:389.5px">L</i><i style="left:397.5px">E</i><i style="left:405.25px">Q</i><i style="left:422.25px">G</i><i style="left:430px">S</i><i style="left:437.75px">D</i><i style="left:445.75px">F</i><i style="left:453.25px">I</i><i style="left:462px">H</i><i style="left:469.25px">I</i><i style="left:477.75px">D</i><i style="left:485.25px">I</i><i style="left:501.75px">D</i><i style="left:510.25px">G</i><i style="left:518px">H</i><i style="left:525.75px">F</i><i style="left:533.5px">V</i><i style="left:541.75px">P</i><i style="left:557.5px">L</i><i style="left:565.25px">T</i><i style="left:573.75px">F</i><i style="left:582.25px">G</i><i style="left:589.75px">P</i><i style="left:598.25px">G</i><i style="left:605.25px">I</i><i style="left:613.25px">I</i><i style="left:637.25px">I</i><i style="left:653.75px">R</i><i style="left:662px">S</i><i style="left:677.25px">T</i><i style="left:685.75px">D</i><i style="left:693.5px">L</i><i style="left:701.75px">F</i><i style="left:805.5px">L</i><i style="left:813.5px">E</i><i style="left:821.5px">V</i><i style="left:830px">H</i><i style="left:853.25px">I</i><i style="left:861.5px">Y</i><i style="left:885.75px">P</i><i style="left:893.75px">F</i><i style="left:901.5px">E</i><i style="left:909.75px">F</i><i style="left:917.25px">I</i><i style="left:925.5px">E</i><i style="left:934px">S</i><i style="left:941.75px">F</i><i style="left:949.5px">V</i><i style="left:957.75px">R</i><i style="left:966px">S</i><i style="left:974.25px">G</i><i style="left:989.75px">D</i><i style="left:997.75px">R</i><i style="left:1005.25px">I</i><i style="left:1013.25px">I</i><i style="left:1021.5px">V</i><i style="left:1030px">H</i><i style="left:1037.75px">F</i><i style="left:1045.5px">E</i><i style="left:1078px">S</i><i style="left:1085.5px">E</i><i style="left:1093.75px">D</i><i style="left:1101.25px">I</i><i style="left:1109.75px">K</i><i style="left:1117.5px">E</i><i style="left:1125.5px">L</i><i style="left:1133.5px">L</i><i style="left:1142px">S</i><i style="left:1149.5px">Y</i><i style="left:1157.25px">I</i></div>
<div class="ln" style="top:153.75px"><i style="left:5.75px">R</i><i style="left:13.75px">P</i><i style="left:21.5px">E</i><i style="left:38px">S</i><i style="left:46px">O</i><i style="left:53.5px">L</i><i style="left:61.25px">T</i><i style="left:70.25px">U</i></div>
<div class="ln" style="top:153.75px"><i style="left:94px">1</i></div>
<div class="ln" style="top:153.75px"><i style="left:110.25px">2</i><i style="left:117.75px">8</i><i style="left:126px">O</i></div>
<div class="ln" style="top:153.75px"><i style="left:141.5px">V</i><i style="left:149.75px">D</i><i style="left:157.75px">K</i><i style="left:165.75px">F</i><i style="left:174px">S</i><i style="left:181.75px">K</i><i style="left:190px">S</i><i style="left:197.75px">D</i><i style="left:221.25px">I</i><i style="left:229.25px">I</i><i style="left:237.5px">V</i><i style="left:246px">S</i><i style="left:253.75px">P</i><i style="left:262px">S</i><i style="left:269.25px">I</i><i style="left:277.5px">L</i><i style="left:286px">S</i><i style="left:309.75px">F</i><i style="left:318px">S</i><i style="left:325.75px">K</i><i style="left:333.5px">L</i><i style="left:342.25px">G</i><i style="left:349.5px">E</i><i style="left:357.25px">Q</i><i style="left:365.5px">V</i><i style="left:373.75px">K</i><i style="left:389.25px">I</i><i style="left:397.5px">E</i><i style="left:405.25px">Q</i><i style="left:422.25px">G</i><i style="left:430.25px">C</i><i style="left:437.75px">D</i><i style="left:453.25px">I</i><i style="left:462px">H</i><i style="left:469.5px">V</i><i style="left:477.75px">D</i><i style="left:485.5px">V</i><i style="left:501.75px">D</i><i style="left:510.25px">G</i><i style="left:517.75px">R</i><i style="left:525.75px">F</i><i style="left:533.5px">V</i><i style="left:541.75px">P</i><i style="left:557.25px">I</i><i style="left:565.25px">T</i><i style="left:573.25px">I</i><i style="left:582.25px">G</i><i style="left:589.75px">P</i><i style="left:597.5px">L</i><i style="left:605.5px">V</i><i style="left:613.5px">V</i><i style="left:621.75px">D</i><i style="left:630px">S</i><i style="left:637.5px">L</i><i style="left:645.75px">R</i><i style="left:653.75px">P</i><i style="left:661.25px">I</i><i style="left:677.25px">T</i><i style="left:685.75px">D</i><i style="left:693.5px">L</i><i style="left:701.75px">P</i><i style="left:805.5px">L</i><i style="left:813.75px">D</i><i style="left:821.5px">V</i><i style="left:830px">H</i><i style="left:837.5px">L</i><i style="left:853.25px">I</i><i style="left:861.5px">V</i><i style="left:877.5px">E</i><i style="left:885.75px">P</i><i style="left:893.75px">D</i><i style="left:901.25px">Q</i><i style="left:909.75px">R</i><i style="left:917.5px">V</i><i style="left:925.75px">P</i><i style="left:933.75px">D</i><i style="left:941.75px">F</i><i style="left:949.25px">I</i><i style="left:957.75px">K</i><i style="left:974.25px">G</i><i style="left:989.75px">D</i><i style="left:997.25px">I</i><i style="left:1005.5px">V</i><i style="left:1014px">S</i><i style="left:1021.5px">V</i><i style="left:1030px">H</i><i style="left:1038.25px">C</i><i style="left:1045.5px">E</i><i style="left:1053.25px">Q</i><i style="left:1062px">S</i><i style="left:1070px">S</i><i style="left:1077.25px">T</i><i style="left:1085.25px">I</i><i style="left:1094px">H</i><i style="left:1101.5px">L</i><i style="left:1110px">H</i><i style="left:1117.75px">R</i><i style="left:1125.25px">T</i><i style="left:1133.25px">I</i><i style="left:1149.25px">Q</i><i style="left:1157.25px">I</i></div>
<div class="ln" style="top:166.75px"><i style="left:5.75px">R</i><i style="left:13.75px">P</i><i style="left:21.5px">E</i><i style="left:38px">S</i><i style="left:45.75px">P</i><i style="left:53.25px">I</i><i style="left:62px">O</i><i style="left:69.5px">L</i></div>
<div class="ln" style="top:166.75px"><i style="left:94px">1</i></div>
<div class="ln" style="top:166.75px"><i style="left:110.25px">2</i><i style="left:117.75px">8</i><i style="left:125.75px">5</i></div>
<div class="ln" style="top:166.75px"><i style="left:141.5px">V</i><i style="left:149.75px">D</i><i style="left:157.75px">K</i><i style="left:165.75px">F</i><i style="left:174px">S</i><i style="left:181.75px">K</i><i style="left:190px">S</i><i style="left:197.75px">D</i><i style="left:221.25px">I</i><i style="left:229.25px">I</i><i style="left:237.5px">V</i><i style="left:246px">S</i><i style="left:253.75px">P</i><i style="left:262px">S</i><i style="left:269.25px">I</i><i style="left:277.5px">L</i><i style="left:286px">S</i><i style="left:309.75px">F</i><i style="left:325.75px">K</i><i style="left:333.5px">L</i><i style="left:342.25px">G</i><i style="left:349.5px">E</i><i style="left:357.25px">Q</i><i style="left:365.5px">V</i><i style="left:373.75px">K</i><i style="left:389.5px">V</i><i style="left:397.5px">E</i><i style="left:405.5px">L</i><i style="left:422.25px">G</i><i style="left:430.25px">C</i><i style="left:437.75px">D</i><i style="left:453.25px">I</i><i style="left:462px">H</i><i style="left:469.5px">V</i><i style="left:477.75px">D</i><i style="left:485.5px">V</i><i style="left:501.75px">D</i><i style="left:510.25px">G</i><i style="left:517.75px">R</i><i style="left:525.75px">F</i><i style="left:533.5px">V</i><i style="left:541.75px">P</i><i style="left:557.25px">I</i><i style="left:565.25px">T</i><i style="left:573.25px">I</i><i style="left:582.25px">G</i><i style="left:589.75px">P</i><i style="left:597.5px">L</i><i style="left:605.5px">V</i><i style="left:613.5px">V</i><i style="left:621.75px">D</i><i style="left:637.5px">L</i><i style="left:645.75px">R</i><i style="left:653.75px">P</i><i style="left:661.5px">V</i><i style="left:677.25px">T</i><i style="left:685.75px">D</i><i style="left:693.5px">L</i><i style="left:701.75px">P</i><i style="left:805.5px">L</i><i style="left:813.75px">D</i><i style="left:821.5px">V</i><i style="left:830px">H</i><i style="left:837.5px">L</i><i style="left:853.25px">I</i><i style="left:861.5px">V</i><i style="left:877.5px">E</i><i style="left:885.75px">P</i><i style="left:893.5px">E</i><i style="left:901.25px">Q</i><i style="left:909.75px">R</i><i style="left:917.5px">V</i><i style="left:925.75px">P</i><i style="left:933.75px">D</i><i style="left:941.75px">F</i><i style="left:949.25px">I</i><i style="left:957.75px">K</i><i style="left:974.25px">G</i><i style="left:989.75px">D</i><i style="left:997.25px">I</i><i style="left:1005.5px">V</i><i style="left:1014px">S</i><i style="left:1021.5px">V</i><i style="left:1030px">H</i><i style="left:1038.25px">C</i><i style="left:1045.5px">E</i><i style="left:1053.5px">L</i><i style="left:1070px">S</i><i style="left:1077.25px">T</i><i style="left:1085.25px">I</i><i style="left:1094px">H</i><i style="left:1101.5px">L</i><i style="left:1110px">H</i><i style="left:1117.75px">R</i><i style="left:1125.25px">T</i><i style="left:1133.5px">V</i><i style="left:1149.25px">Q</i><i style="left:1157.25px">I</i></div>
<div class="ln" style="top:179.75px"><i style="left:5.75px">R</i><i style="left:13.75px">P</i><i style="left:21.5px">E</i><i style="left:38px">O</i><i style="left:45.75px">R</i><i style="left:53.5px">Y</i><i style="left:62px">S</i></div>
<div class="ln" style="top:179.75px"><i style="left:94px">1</i></div>
<div class="ln" style="top:179.75px"><i style="left:110.25px">2</i><i style="left:117.75px">7</i><i style="left:125.25px">4</i></div>
<div class="ln" style="top:179.75px"><i style="left:141.5px">V</i><i style="left:149.75px">D</i><i style="left:157.75px">K</i><i style="left:165.75px">F</i><i style="left:174px">S</i><i style="left:181.75px">K</i><i style="left:197.75px">D</i><i style="left:221.25px">I</i><i style="left:229.25px">I</i><i style="left:237.5px">V</i><i style="left:246px">S</i><i style="left:253.75px">P</i><i style="left:262px">S</i><i style="left:269.25px">I</i><i style="left:277.5px">L</i><i style="left:286px">S</i><i style="left:309.75px">F</i><i style="left:318px">S</i><i style="left:325.75px">K</i><i style="left:333.5px">L</i><i style="left:342.25px">G</i><i style="left:349.5px">E</i><i style="left:357.25px">Q</i><i style="left:365.5px">V</i><i style="left:373.75px">K</i><i style="left:389.5px">V</i><i style="left:397.5px">E</i><i style="left:405.5px">V</i><i style="left:422.25px">G</i><i style="left:430.25px">C</i><i style="left:437.75px">D</i><i style="left:453.25px">I</i><i style="left:462px">H</i><i style="left:469.5px">V</i><i style="left:477.75px">D</i><i style="left:485.5px">V</i><i style="left:501.75px">D</i><i style="left:510.25px">G</i><i style="left:517.75px">R</i><i style="left:525.75px">F</i><i style="left:533.5px">V</i><i style="left:541.75px">P</i><i style="left:557.25px">I</i><i style="left:565.25px">T</i><i style="left:573.25px">I</i><i style="left:582.25px">G</i><i style="left:589.75px">P</i><i style="left:597.5px">L</i><i style="left:605.5px">V</i><i style="left:613.5px">V</i><i style="left:621.75px">D</i><i style="left:637.5px">L</i><i style="left:645.75px">R</i><i style="left:653.75px">P</i><i style="left:661.5px">V</i><i style="left:677.25px">T</i><i style="left:685.75px">D</i><i style="left:693.5px">L</i><i style="left:701.75px">P</i><i style="left:805.5px">L</i><i style="left:813.75px">D</i><i style="left:821.5px">V</i><i style="left:830px">H</i><i style="left:837.5px">L</i><i style="left:853.25px">I</i><i style="left:861.5px">V</i><i style="left:877.5px">E</i><i style="left:885.75px">P</i><i style="left:893.5px">E</i><i style="left:901.25px">Q</i><i style="left:909.75px">R</i><i style="left:917.5px">V</i><i style="left:925.75px">P</i><i style="left:933.75px">D</i><i style="left:941.75px">F</i><i style="left:949.25px">I</i><i style="left:957.75px">K</i><i style="left:974.25px">G</i><i style="left:989.75px">D</i><i style="left:997.25px">I</i><i style="left:1005.5px">V</i><i style="left:1014px">S</i><i style="left:1021.5px">V</i><i style="left:1030px">H</i><i style="left:1038.25px">C</i><i style="left:1045.5px">E</i><i style="left:1053.25px">Q</i><i style="left:1062px">S</i><i style="left:1070px">S</i><i style="left:1077.25px">T</i><i style="left:1085.25px">I</i><i style="left:1094px">H</i><i style="left:1101.5px">L</i><i style="left:1110px">H</i><i style="left:1117.75px">R</i><i style="left:1125.25px">T</i><i style="left:1133.5px">V</i><i style="left:1149.25px">Q</i><i style="left:1157.25px">I</i></div>
<div class="ln" style="top:192.75px"><i style="left:5.75px">R</i><i style="left:13.75px">P</i><i style="left:21.5px">E</i><i style="left:38px">S</i><i style="left:45.5px">Y</i><i style="left:61.5px">Y</i><i style="left:69.5px">3</i></div>
<div class="ln" style="top:192.75px"><i style="left:94px">1</i></div>
<div class="ln" style="top:192.75px"><i style="left:110.25px">2</i><i style="left:118.25px">2</i><i style="left:125.5px">9</i></div>
<div class="ln" style="top:192.75px"><i style="left:174px">S</i><i style="left:181.75px">K</i><i style="left:221.25px">I</i><i style="left:229.5px">V</i><i style="left:237.5px">V</i><i style="left:253.75px">P</i><i style="left:262px">S</i><i style="left:269.25px">I</i><i style="left:277.5px">L</i><i style="left:286px">S</i><i style="left:301.75px">D</i><i style="left:309.75px">F</i><i style="left:318px">S</i><i style="left:325.75px">R</i><i style="left:333.5px">L</i><i style="left:342.25px">G</i><i style="left:349.5px">E</i><i style="left:357.5px">E</i><i style="left:365.25px">I</i><i style="left:373.75px">K</i><i style="left:389.5px">V</i><i style="left:397.75px">D</i><i style="left:405.5px">E</i><i style="left:422.25px">G</i><i style="left:437.75px">D</i><i style="left:453.25px">I</i><i style="left:462px">H</i><i style="left:469.5px">V</i><i style="left:477.75px">D</i><i style="left:485.5px">V</i><i style="left:501.75px">D</i><i style="left:510.25px">G</i><i style="left:517.75px">R</i><i style="left:525.75px">F</i><i style="left:533.5px">V</i><i style="left:541.75px">P</i><i style="left:557.25px">I</i><i style="left:565.25px">T</i><i style="left:573.25px">I</i><i style="left:582.25px">G</i><i style="left:589.75px">P</i><i style="left:597.5px">L</i><i style="left:605.25px">I</i><i style="left:613.5px">V</i><i style="left:621.75px">D</i><i style="left:637.25px">I</i><i style="left:645.75px">R</i><i style="left:653.75px">P</i><i style="left:661.5px">L</i><i style="left:677.25px">T</i><i style="left:685.75px">K</i><i style="left:693.75px">K</i><i style="left:701.25px">T</i><i style="left:805.5px">L</i><i style="left:813.75px">D</i><i style="left:821.5px">V</i><i style="left:830px">H</i><i style="left:837.5px">L</i><i style="left:853.25px">I</i><i style="left:861.5px">V</i><i style="left:877.5px">E</i><i style="left:885.75px">P</i><i style="left:893.5px">E</i><i style="left:901.75px">K</i><i style="left:909.5px">Y</i><i style="left:917.5px">V</i><i style="left:925.5px">E</i><i style="left:933.75px">D</i><i style="left:941.75px">F</i><i style="left:957.75px">K</i><i style="left:974.25px">G</i><i style="left:989.75px">D</i><i style="left:997.25px">I</i><i style="left:1005.25px">I</i><i style="left:1014px">S</i><i style="left:1021.5px">V</i><i style="left:1030px">H</i><i style="left:1037.5px">V</i><i style="left:1045.5px">E</i><i style="left:1054px">H</i><i style="left:1078px">S</i><i style="left:1085.75px">P</i><i style="left:1094px">H</i><i style="left:1101.5px">L</i><i style="left:1110px">H</i><i style="left:1117.75px">R</i><i style="left:1125.25px">T</i><i style="left:1133.5px">L</i><i style="left:1142.25px">C</i><i style="left:1149.25px">Q</i><i style="left:1157.25px">I</i></div>
<div class="ln" style="top:205.75px"><i style="left:5.75px">R</i><i style="left:13.75px">P</i><i style="left:21.5px">E</i><i style="left:37.5px">B</i><i style="left:54.25px">C</i><i style="left:62px">S</i><i style="left:70.25px">U</i></div>
<div class="ln" style="top:205.75px"><i style="left:94px">1</i></div>
<div class="ln" style="top:205.75px"><i style="left:110.25px">2</i><i style="left:118px">1</i><i style="left:125.75px">7</i></div>
<div class="ln" style="top:205.75px"><i style="left:221.25px">I</i><i style="left:229.75px">K</i><i style="left:237.5px">V</i><i style="left:253.75px">P</i><i style="left:262px">S</i><i style="left:269.25px">I</i><i style="left:277.5px">L</i><i style="left:286px">S</i><i style="left:301.75px">D</i><i style="left:309.75px">F</i><i style="left:333.5px">L</i><i style="left:342.25px">G</i><i style="left:357.5px">E</i><i style="left:365.25px">I</i><i style="left:373.75px">K</i><i style="left:381.75px">D</i><i style="left:389.5px">V</i><i style="left:397.5px">E</i><i style="left:405.75px">K</i><i style="left:414.25px">G</i><i style="left:422.25px">G</i><i style="left:437.75px">D</i><i style="left:446.25px">C</i><i style="left:453.25px">I</i><i style="left:462px">H</i><i style="left:469.25px">I</i><i style="left:477.75px">D</i><i style="left:485.5px">V</i><i style="left:501.75px">D</i><i style="left:510.25px">G</i><i style="left:518px">H</i><i style="left:525.75px">F</i><i style="left:533.5px">V</i><i style="left:541.75px">P</i><i style="left:557.25px">I</i><i style="left:565.25px">T</i><i style="left:573.25px">I</i><i style="left:582.25px">G</i><i style="left:589.75px">P</i><i style="left:597.5px">L</i><i style="left:605.25px">I</i><i style="left:613.5px">V</i><i style="left:621.5px">E</i><i style="left:637.5px">V</i><i style="left:645.75px">R</i><i style="left:653.75px">P</i><i style="left:661.5px">V</i><i style="left:677.25px">T</i><i style="left:685.75px">D</i><i style="left:693.5px">L</i><i style="left:701.75px">P</i><i style="left:805.5px">L</i><i style="left:813.75px">D</i><i style="left:821.5px">V</i><i style="left:830px">H</i><i style="left:837.5px">L</i><i style="left:853.25px">I</i><i style="left:861.5px">E</i><i style="left:877.5px">E</i><i style="left:885.75px">P</i><i style="left:893.75px">D</i><i style="left:901.75px">R</i><i style="left:909.5px">Y</i><i style="left:917.25px">I</i><i style="left:925.75px">P</i><i style="left:941.75px">F</i><i style="left:957.75px">K</i><i style="left:974.25px">G</i><i style="left:989.75px">D</i><i style="left:997.25px">I</i><i style="left:1005.5px">L</i><i style="left:1014px">S</i><i style="left:1021.5px">V</i><i style="left:1030px">H</i><i style="left:1045.5px">E</i><i style="left:1078.25px">C</i><i style="left:1085.75px">P</i><i style="left:1094px">H</i><i style="left:1101.5px">L</i><i style="left:1110px">H</i><i style="left:1117.75px">R</i><i style="left:1125.25px">T</i><i style="left:1133.25px">I</i><i style="left:1141.25px">Q</i><i style="left:1149.5px">L</i><i style="left:1157.25px">I</i></div>
<div class="ln" style="top:218.75px"><i style="left:5.75px">R</i><i style="left:13.75px">P</i><i style="left:21.5px">E</i><i style="left:37.5px">E</i><i style="left:46.25px">C</i><i style="left:54px">O</i><i style="left:61.5px">L</i><i style="left:69.25px">I</i></div>
<div class="ln" style="top:218.75px"><i style="left:94px">1</i></div>
<div class="ln" style="top:218.75px"><i style="left:110.25px">2</i><i style="left:118.25px">2</i><i style="left:125.75px">5</i></div>
<div class="ln" style="top:218.75px"><i style="left:189.75px">K</i><i style="left:197.25px">Q</i><i style="left:221.5px">Y</i><i style="left:229.5px">L</i><i style="left:237.25px">I</i><i style="left:253.75px">P</i><i style="left:262px">S</i><i style="left:269.25px">I</i><i style="left:277.5px">L</i><i style="left:286px">S</i><i style="left:301.75px">D</i><i style="left:309.75px">F</i><i style="left:325.75px">R</i><i style="left:333.5px">L</i><i style="left:342.25px">G</i><i style="left:349.5px">E</i><i style="left:357.75px">D</i><i style="left:365.25px">T</i><i style="left:381.75px">K</i><i style="left:397.5px">L</i><i style="left:422.25px">G</i><i style="left:437.75px">D</i><i style="left:445.5px">V</i><i style="left:453.5px">V</i><i style="left:462px">H</i><i style="left:469.75px">F</i><i style="left:477.75px">D</i><i style="left:485.5px">V</i><i style="left:501.75px">D</i><i style="left:518px">H</i><i style="left:525.5px">Y</i><i style="left:533.5px">V</i><i style="left:541.75px">P</i><i style="left:557.5px">L</i><i style="left:565.25px">T</i><i style="left:573.25px">I</i><i style="left:582.25px">G</i><i style="left:589.75px">P</i><i style="left:605.5px">V</i><i style="left:613.5px">L</i><i style="left:621.75px">K</i><i style="left:630px">S</i><i style="left:637.5px">L</i><i style="left:645.75px">R</i><i style="left:661.5px">Y</i><i style="left:670.25px">G</i><i style="left:677.25px">I</i><i style="left:685.25px">T</i><i style="left:701.75px">P</i><i style="left:805.25px">I</i><i style="left:813.75px">D</i><i style="left:821.5px">V</i><i style="left:830px">H</i><i style="left:837.5px">L</i><i style="left:853.5px">V</i><i style="left:861.75px">K</i><i style="left:877.75px">P</i><i style="left:885.5px">V</i><i style="left:893.75px">D</i><i style="left:901.75px">R</i><i style="left:909.25px">I</i><i style="left:917.5px">V</i><i style="left:925.75px">P</i><i style="left:933.75px">D</i><i style="left:941.75px">F</i><i style="left:974.25px">G</i><i style="left:990px">S</i><i style="left:997.25px">I</i><i style="left:1005.25px">I</i><i style="left:1013.25px">T</i><i style="left:1021.75px">F</i><i style="left:1030px">H</i><i style="left:1037.75px">P</i><i style="left:1045.5px">E</i><i style="left:1078px">S</i><i style="left:1085.5px">E</i><i style="left:1094px">H</i><i style="left:1101.5px">V</i><i style="left:1109.75px">D</i><i style="left:1117.75px">R</i><i style="left:1125.25px">T</i><i style="left:1133.5px">L</i><i style="left:1141.25px">Q</i><i style="left:1149.5px">L</i><i style="left:1157.25px">I</i></div>
<div class="ln" style="top:231.75px"><i style="left:5.75px">R</i><i style="left:13.75px">P</i><i style="left:21.5px">E</i><i style="left:38px">S</i><i style="left:45.5px">E</i><i style="left:53.75px">R</i></div>
<div class="ln" style="top:231.75px"><i style="left:94px">1</i></div>
<div class="ln" style="top:231.75px"><i style="left:110.25px">2</i><i style="left:118px">1</i><i style="left:126px">O</i></div>
<div class="ln" style="top:231.75px"><i style="left:189.75px">K</i><i style="left:197.75px">K</i><i style="left:221.75px">F</i><i style="left:229.5px">L</i><i style="left:237.25px">I</i><i style="left:253.75px">P</i><i style="left:262px">S</i><i style="left:269.25px">I</i><i style="left:277.5px">L</i><i style="left:286px">S</i><i style="left:301.75px">D</i><i style="left:309.75px">F</i><i style="left:325.75px">R</i><i style="left:333.5px">L</i><i style="left:342.25px">G</i><i style="left:349.5px">E</i><i style="left:357.75px">D</i><i style="left:365.25px">T</i><i style="left:389.5px">V</i><i style="left:397.5px">L</i><i style="left:422.25px">G</i><i style="left:430.25px">G</i><i style="left:437.75px">D</i><i style="left:445.5px">V</i><i style="left:453.5px">V</i><i style="left:462px">H</i><i style="left:469.75px">F</i><i style="left:477.75px">D</i><i style="left:485.5px">V</i><i style="left:501.75px">D</i><i style="left:518px">H</i><i style="left:525.5px">Y</i><i style="left:533.5px">V</i><i style="left:541.75px">P</i><i style="left:557.5px">L</i><i style="left:565.25px">T</i><i style="left:573.25px">I</i><i style="left:582.25px">G</i><i style="left:589.75px">P</i><i style="left:605.5px">V</i><i style="left:614.25px">C</i><i style="left:621.5px">E</i><i style="left:637.5px">L</i><i style="left:645.75px">R</i><i style="left:661.5px">Y</i><i style="left:670.25px">G</i><i style="left:677.25px">I</i><i style="left:685.25px">T</i><i style="left:701.75px">P</i><i style="left:805.25px">I</i><i style="left:813.75px">D</i><i style="left:821.5px">V</i><i style="left:830px">H</i><i style="left:837.5px">L</i><i style="left:853.5px">V</i><i style="left:861.75px">K</i><i style="left:877.75px">P</i><i style="left:885.5px">V</i><i style="left:893.75px">D</i><i style="left:901.75px">R</i><i style="left:909.25px">I</i><i style="left:917.5px">V</i><i style="left:925.75px">P</i><i style="left:933.75px">D</i><i style="left:941.75px">F</i><i style="left:957.75px">K</i><i style="left:974.25px">G</i><i style="left:990px">S</i><i style="left:997.5px">Y</i><i style="left:1005.25px">I</i><i style="left:1014px">S</i><i style="left:1021.75px">F</i><i style="left:1030px">H</i><i style="left:1037.75px">P</i><i style="left:1045.5px">E</i><i style="left:1078px">S</i><i style="left:1085.5px">E</i><i style="left:1094px">H</i><i style="left:1101.5px">V</i><i style="left:1109.75px">D</i><i style="left:1117.75px">R</i><i style="left:1125.25px">T</i><i style="left:1133.25px">I</i><i style="left:1141.25px">Q</i><i style="left:1149.5px">L</i><i style="left:1157.25px">I</i></div>
<div class="ln" style="top:244.75px"><i style="left:5.75px">R</i><i style="left:13.75px">P</i><i style="left:21.5px">E</i><i style="left:38px">H</i><i style="left:53.5px">E</i><i style="left:61.25px">I</i></div>
<div class="ln" style="top:244.75px"><i style="left:94px">1</i></div>
<div class="ln" style="top:244.75px"><i style="left:110.25px">2</i><i style="left:118.25px">2</i><i style="left:125.25px">4</i></div>
<div class="ln" style="top:244.75px"><i style="left:189.75px">K</i><i style="left:197.75px">P</i><i style="left:221.5px">Y</i><i style="left:229.5px">L</i><i style="left:237.25px">I</i><i style="left:253.75px">P</i><i style="left:262px">S</i><i style="left:269.25px">I</i><i style="left:277.5px">L</i><i style="left:286px">S</i><i style="left:301.75px">D</i><i style="left:309.5px">L</i><i style="left:325.75px">R</i><i style="left:333.5px">L</i><i style="left:342.25px">G</i><i style="left:349.75px">D</i><i style="left:357.75px">D</i><i style="left:365.5px">V</i><i style="left:373.25px">Q</i><i style="left:389.5px">V</i><i style="left:397.5px">L</i><i style="left:422.25px">G</i><i style="left:437.75px">D</i><i style="left:445.5px">V</i><i style="left:453.25px">I</i><i style="left:462px">H</i><i style="left:469.75px">F</i><i style="left:477.75px">D</i><i style="left:485.5px">V</i><i style="left:501.75px">D</i><i style="left:518px">H</i><i style="left:525.5px">Y</i><i style="left:533.5px">V</i><i style="left:541.75px">P</i><i style="left:557.5px">L</i><i style="left:565.25px">T</i><i style="left:573.75px">F</i><i style="left:582.25px">G</i><i style="left:589.75px">P</i><i style="left:605.5px">V</i><i style="left:614.25px">C</i><i style="left:621.25px">Q</i><i style="left:637.5px">L</i><i style="left:645.75px">R</i><i style="left:653.75px">D</i><i style="left:661.5px">Y</i><i style="left:670.25px">G</i><i style="left:677.25px">I</i><i style="left:685.25px">T</i><i style="left:701.75px">P</i><i style="left:805.25px">I</i><i style="left:813.75px">D</i><i style="left:821.5px">V</i><i style="left:830px">H</i><i style="left:837.5px">L</i><i style="left:853.5px">V</i><i style="left:861.75px">K</i><i style="left:877.75px">P</i><i style="left:885.5px">V</i><i style="left:893.75px">D</i><i style="left:901.75px">R</i><i style="left:909.25px">I</i><i style="left:917.25px">I</i><i style="left:925.75px">P</i><i style="left:933.75px">D</i><i style="left:941.75px">F</i><i style="left:957.75px">K</i><i style="left:974.25px">G</i><i style="left:997.5px">Y</i><i style="left:1005.25px">I</i><i style="left:1013.25px">T</i><i style="left:1021.75px">F</i><i style="left:1030px">H</i><i style="left:1037.75px">P</i><i style="left:1045.5px">E</i><i style="left:1070px">S</i><i style="left:1078px">S</i><i style="left:1085.5px">E</i><i style="left:1094px">H</i><i style="left:1101.25px">I</i><i style="left:1109.75px">D</i><i style="left:1117.75px">R</i><i style="left:1126px">S</i><i style="left:1133.5px">L</i><i style="left:1141.25px">Q</i><i style="left:1149.5px">L</i><i style="left:1157.25px">I</i></div>
<div class="ln" style="top:257.75px"><i style="left:5.75px">R</i><i style="left:13.75px">P</i><i style="left:21.5px">E</i><i style="left:37.5px">B</i><i style="left:46.25px">U</i><i style="left:54.25px">C</i><i style="left:69.75px">P</i></div>
<div class="ln" style="top:257.75px"><i style="left:94px">1</i></div>
<div class="ln" style="top:257.75px"><i style="left:110.25px">2</i><i style="left:118.25px">2</i><i style="left:125.75px">8</i></div>
<div class="ln" style="top:257.75px"><i style="left:189.75px">K</i><i style="left:197.75px">K</i><i style="left:221.75px">F</i><i style="left:229.75px">F</i><i style="left:237.5px">L</i><i style="left:254px">S</i><i style="left:262px">S</i><i style="left:269.25px">I</i><i style="left:277.5px">L</i><i style="left:286px">S</i><i style="left:301.75px">D</i><i style="left:309.75px">F</i><i style="left:325.75px">R</i><i style="left:333.5px">L</i><i style="left:342.25px">G</i><i style="left:349.5px">E</i><i style="left:357.75px">D</i><i style="left:365.25px">T</i><i style="left:373.75px">K</i><i style="left:381.75px">K</i><i style="left:397.25px">I</i><i style="left:405.75px">D</i><i style="left:422.25px">G</i><i style="left:430px">S</i><i style="left:437.75px">D</i><i style="left:453.25px">I</i><i style="left:462px">H</i><i style="left:469.75px">F</i><i style="left:477.75px">D</i><i style="left:485.5px">V</i><i style="left:501.75px">D</i><i style="left:518px">H</i><i style="left:525.5px">Y</i><i style="left:533.5px">V</i><i style="left:541.75px">P</i><i style="left:557.5px">L</i><i style="left:565.25px">T</i><i style="left:582.25px">G</i><i style="left:589.75px">P</i><i style="left:605.25px">I</i><i style="left:613.5px">L</i><i style="left:621.75px">K</i><i style="left:637.5px">L</i><i style="left:645.75px">R</i><i style="left:661.5px">Y</i><i style="left:677.25px">I</i><i style="left:685.25px">T</i><i style="left:693.5px">V</i><i style="left:701.75px">P</i><i style="left:805.25px">I</i><i style="left:813.75px">D</i><i style="left:821.5px">V</i><i style="left:830px">H</i><i style="left:837.5px">L</i><i style="left:853.5px">V</i><i style="left:861.75px">K</i><i style="left:877.75px">P</i><i style="left:885.5px">V</i><i style="left:893.75px">D</i><i style="left:909.5px">L</i><i style="left:917.25px">I</i><i style="left:925.75px">P</i><i style="left:933.25px">Q</i><i style="left:941.75px">F</i><i style="left:957.5px">E</i><i style="left:974.25px">G</i><i style="left:989.75px">D</i><i style="left:997.75px">F</i><i style="left:1005.25px">I</i><i style="left:1013.25px">T</i><i style="left:1021.75px">F</i><i style="left:1030px">H</i><i style="left:1037.75px">P</i><i style="left:1045.5px">E</i><i style="left:1070px">S</i><i style="left:1077.25px">T</i><i style="left:1085.75px">D</i><i style="left:1094px">H</i><i style="left:1101.25px">I</i><i style="left:1109.75px">D</i><i style="left:1117.75px">R</i><i style="left:1125.25px">T</i><i style="left:1133.5px">L</i><i style="left:1149.5px">L</i><i style="left:1157.25px">I</i></div>
<div class="ln" style="top:270.75px"><i style="left:5.75px">R</i><i style="left:13.75px">P</i><i style="left:21.5px">E</i><i style="left:37.5px">B</i><i style="left:46.25px">U</i><i style="left:54.25px">C</i><i style="left:69.25px">I</i></div>
<div class="ln" style="top:270.75px"><i style="left:94px">1</i></div>
<div class="ln" style="top:270.75px"><i style="left:110.25px">2</i><i style="left:118.25px">2</i><i style="left:125.75px">8</i></div>
<div class="ln" style="top:270.75px"><i style="left:197.75px">K</i><i style="left:221.75px">F</i><i style="left:229.75px">F</i><i style="left:237.5px">L</i><i style="left:253.75px">P</i><i style="left:262px">S</i><i style="left:269.25px">I</i><i style="left:277.5px">L</i><i style="left:286px">S</i><i style="left:301.75px">D</i><i style="left:309.75px">F</i><i style="left:325.75px">R</i><i style="left:333.5px">L</i><i style="left:342.25px">G</i><i style="left:349.5px">E</i><i style="left:357.75px">D</i><i style="left:365.25px">I</i><i style="left:373.75px">K</i><i style="left:381.75px">K</i><i style="left:389.5px">V</i><i style="left:397.25px">I</i><i style="left:405.75px">D</i><i style="left:422.25px">G</i><i style="left:430px">S</i><i style="left:437.75px">D</i><i style="left:445.5px">L</i><i style="left:453.25px">I</i><i style="left:462px">H</i><i style="left:469.75px">F</i><i style="left:477.75px">D</i><i style="left:485.5px">V</i><i style="left:501.75px">D</i><i style="left:518px">H</i><i style="left:525.5px">Y</i><i style="left:533.5px">V</i><i style="left:541.75px">P</i><i style="left:557.5px">L</i><i style="left:566px">S</i><i style="left:582.25px">G</i><i style="left:589.75px">P</i><i style="left:605.25px">I</i><i style="left:613.5px">L</i><i style="left:621.5px">E</i><i style="left:630px">S</i><i style="left:637.5px">L</i><i style="left:645.75px">R</i><i style="left:661.5px">Y</i><i style="left:677.25px">I</i><i style="left:685.25px">T</i><i style="left:701.75px">P</i><i style="left:805.25px">I</i><i style="left:813.75px">D</i><i style="left:821.5px">V</i><i style="left:830px">H</i><i style="left:837.5px">L</i><i style="left:853.5px">V</i><i style="left:861.75px">K</i><i style="left:877.75px">P</i><i style="left:885.5px">V</i><i style="left:893.75px">D</i><i style="left:909.5px">L</i><i style="left:917.25px">I</i><i style="left:925.75px">P</i><i style="left:933.25px">Q</i><i style="left:941.75px">F</i><i style="left:957.75px">K</i><i style="left:974.25px">G</i><i style="left:989.25px">T</i><i style="left:997.75px">F</i><i style="left:1005.25px">I</i><i style="left:1013.25px">T</i><i style="left:1021.75px">F</i><i style="left:1030px">H</i><i style="left:1037.75px">P</i><i style="left:1045.5px">E</i><i style="left:1077.25px">T</i><i style="left:1085.5px">L</i><i style="left:1094px">H</i><i style="left:1101.25px">I</i><i style="left:1109.5px">E</i><i style="left:1117.75px">R</i><i style="left:1125.25px">T</i><i style="left:1133.5px">L</i><i style="left:1149.5px">L</i><i style="left:1157.25px">I</i></div>
<div class="ln" style="top:283.75px"><i style="left:5.75px">R</i><i style="left:13.75px">P</i><i style="left:21.5px">E</i><i style="left:30.25px">C</i><i style="left:53.5px">L</i><i style="left:62.25px">C</i><i style="left:69.5px">E</i><i style="left:78.25px">U</i></div>
<div class="ln" style="top:283.75px"><i style="left:94px">1</i></div>
<div class="ln" style="top:283.75px"><i style="left:110.25px">2</i><i style="left:117.25px">4</i><i style="left:126px">1</i></div>
<div class="ln" style="top:283.75px"><i style="left:141.25px">T</i><i style="left:150.25px">G</i><i style="left:158px">H</i><i style="left:166.25px">G</i><i style="left:174px">S</i><i style="left:181.25px">Q</i><i style="left:189.75px">R</i><i style="left:221.25px">I</i><i style="left:229.75px">R</i><i style="left:237.5px">L</i><i style="left:253.75px">P</i><i style="left:262px">S</i><i style="left:269.25px">I</i><i style="left:277.5px">L</i><i style="left:286px">S</i><i style="left:301.75px">D</i><i style="left:309.75px">F</i><i style="left:325.75px">R</i><i style="left:333.5px">L</i><i style="left:342.25px">G</i><i style="left:349.5px">E</i><i style="left:357.5px">E</i><i style="left:365.5px">V</i><i style="left:374.25px">C</i><i style="left:389.25px">I</i><i style="left:397.5px">E</i><i style="left:414.25px">G</i><i style="left:422.25px">G</i><i style="left:437.75px">D</i><i style="left:445.5px">L</i><i style="left:453.5px">V</i><i style="left:462px">H</i><i style="left:469.75px">F</i><i style="left:477.75px">D</i><i style="left:485.5px">V</i><i style="left:501.75px">D</i><i style="left:518px">H</i><i style="left:525.5px">Y</i><i style="left:533.5px">V</i><i style="left:541.75px">P</i><i style="left:557.5px">L</i><i style="left:565.25px">T</i><i style="left:573.25px">I</i><i style="left:582.25px">G</i><i style="left:589.75px">P</i><i style="left:597.5px">L</i><i style="left:605.5px">V</i><i style="left:614.25px">C</i><i style="left:621.5px">E</i><i style="left:637.25px">I</i><i style="left:645.75px">R</i><i style="left:653.75px">P</i><i style="left:661.5px">L</i><i style="left:677.5px">V</i><i style="left:686px">S</i><i style="left:693.25px">I</i><i style="left:701.75px">P</i><i style="left:805.25px">I</i><i style="left:813.75px">D</i><i style="left:821.5px">V</i><i style="left:830px">H</i><i style="left:837.5px">L</i><i style="left:853.5px">V</i><i style="left:861.5px">E</i><i style="left:877.75px">P</i><i style="left:885.5px">V</i><i style="left:893.75px">D</i><i style="left:909.5px">L</i><i style="left:917.25px">I</i><i style="left:925.75px">P</i><i style="left:933.5px">L</i><i style="left:941.75px">F</i><i style="left:957.75px">K</i><i style="left:974.25px">G</i><i style="left:997.25px">I</i><i style="left:1005.25px">I</i><i style="left:1014px">S</i><i style="left:1021.75px">F</i><i style="left:1030px">H</i><i style="left:1037.75px">P</i><i style="left:1045.5px">E</i><i style="left:1078px">S</i><i style="left:1085.75px">R</i><i style="left:1094px">H</i><i style="left:1101.5px">V</i><i style="left:1109.75px">D</i><i style="left:1117.75px">R</i><i style="left:1125.25px">T</i><i style="left:1133.25px">I</i><i style="left:1142.25px">G</i><i style="left:1149.5px">L</i><i style="left:1157.25px">I</i></div>
<div class="ln" style="top:296.75px"><i style="left:5.75px">R</i><i style="left:13.75px">P</i><i style="left:21.5px">E</i><i style="left:29.75px">P</i><i style="left:53.5px">L</i><i style="left:62.25px">C</i><i style="left:69.5px">E</i><i style="left:78.25px">U</i></div>
<div class="ln" style="top:296.75px"><i style="left:94px">1</i></div>
<div class="ln" style="top:296.75px"><i style="left:110.25px">2</i><i style="left:117.25px">4</i><i style="left:126px">1</i></div>
<div class="ln" style="top:296.75px"><i style="left:141.25px">T</i><i style="left:150.25px">G</i><i style="left:158px">H</i><i style="left:166.25px">G</i><i style="left:174px">S</i><i style="left:181.25px">Q</i><i style="left:189.75px">R</i><i style="left:221.25px">I</i><i style="left:229.75px">R</i><i style="left:237.5px">L</i><i style="left:253.75px">P</i><i style="left:262px">S</i><i style="left:269.25px">I</i><i style="left:277.5px">L</i><i style="left:286px">S</i><i style="left:301.75px">D</i><i style="left:309.75px">F</i><i style="left:325.75px">R</i><i style="left:333.5px">L</i><i style="left:342.25px">G</i><i style="left:349.5px">E</i><i style="left:357.5px">E</i><i style="left:365.5px">V</i><i style="left:374.25px">C</i><i style="left:389.25px">I</i><i style="left:397.5px">E</i><i style="left:414.25px">G</i><i style="left:422.25px">G</i><i style="left:437.75px">D</i><i style="left:445.5px">L</i><i style="left:453.5px">V</i><i style="left:462px">H</i><i style="left:469.75px">F</i><i style="left:477.75px">D</i><i style="left:485.5px">V</i><i style="left:501.75px">D</i><i style="left:518px">H</i><i style="left:525.5px">Y</i><i style="left:533.5px">V</i><i style="left:542px">S</i><i style="left:557.5px">L</i><i style="left:565.25px">T</i><i style="left:573.25px">I</i><i style="left:582.25px">G</i><i style="left:589.75px">P</i><i style="left:597.5px">L</i><i style="left:605.5px">V</i><i style="left:614.25px">C</i><i style="left:621.5px">E</i><i style="left:637.25px">I</i><i style="left:645.75px">R</i><i style="left:653.75px">P</i><i style="left:661.5px">L</i><i style="left:677.5px">V</i><i style="left:686px">S</i><i style="left:693.25px">I</i><i style="left:701.75px">P</i><i style="left:805.25px">I</i><i style="left:813.75px">D</i><i style="left:821.5px">V</i><i style="left:830px">H</i><i style="left:837.5px">L</i><i style="left:853.5px">V</i><i style="left:861.5px">E</i><i style="left:877.75px">P</i><i style="left:885.5px">V</i><i style="left:893.75px">D</i><i style="left:909.5px">L</i><i style="left:917.25px">I</i><i style="left:925.75px">P</i><i style="left:941.75px">F</i><i style="left:957.75px">K</i><i style="left:974.25px">G</i><i style="left:997.5px">L</i><i style="left:1005.25px">I</i><i style="left:1014px">S</i><i style="left:1021.75px">F</i><i style="left:1030px">H</i><i style="left:1037.75px">P</i><i style="left:1045.5px">E</i><i style="left:1078px">S</i><i style="left:1085.75px">R</i><i style="left:1094px">H</i><i style="left:1101.5px">V</i><i style="left:1109.75px">D</i><i style="left:1117.75px">R</i><i style="left:1125.25px">T</i><i style="left:1133.25px">I</i><i style="left:1142.25px">G</i><i style="left:1149.5px">L</i><i style="left:1157.25px">I</i></div>
<div class="ln" style="top:309.75px"><i style="left:5.75px">R</i><i style="left:13.75px">P</i><i style="left:21.5px">E</i><i style="left:37.75px">R</i><i style="left:46px">H</i><i style="left:54px">O</i><i style="left:61.75px">R</i><i style="left:70.25px">U</i></div>
<div class="ln" style="top:309.75px"><i style="left:94px">1</i></div>
<div class="ln" style="top:309.75px"><i style="left:110.25px">2</i><i style="left:118.25px">2</i><i style="left:125.75px">5</i></div>
<div class="ln" style="top:309.75px"><i style="left:181.25px">T</i><i style="left:189.75px">R</i><i style="left:221.25px">I</i><i style="left:229.75px">R</i><i style="left:237.25px">I</i><i style="left:253.75px">P</i><i style="left:262px">S</i><i style="left:269.5px">L</i><i style="left:277.5px">L</i><i style="left:286px">S</i><i style="left:301.75px">D</i><i style="left:309.75px">F</i><i style="left:325.25px">I</i><i style="left:334px">S</i><i style="left:341.75px">R</i><i style="left:349.75px">P</i><i style="left:357.75px">R</i><i style="left:366.25px">C</i><i style="left:373.75px">P</i><i style="left:382px">S</i><i style="left:389.75px">D</i><i style="left:398.25px">G</i><i style="left:405.75px">R</i><i style="left:413.25px">T</i><i style="left:422.25px">G</i><i style="left:437.75px">D</i><i style="left:445.25px">I</i><i style="left:453.5px">L</i><i style="left:462px">H</i><i style="left:469.75px">F</i><i style="left:477.75px">D</i><i style="left:485.5px">V</i><i style="left:501.75px">D</i><i style="left:518px">H</i><i style="left:525.5px">Y</i><i style="left:533.5px">V</i><i style="left:541.75px">P</i><i style="left:557.5px">L</i><i style="left:565.25px">T</i><i style="left:573.5px">V</i><i style="left:582.25px">G</i><i style="left:589.75px">P</i><i style="left:597.5px">L</i><i style="left:605.5px">V</i><i style="left:614.25px">C</i><i style="left:637.5px">L</i><i style="left:645.75px">R</i><i style="left:653.75px">P</i><i style="left:662px">H</i><i style="left:677.25px">T</i><i style="left:686px">S</i><i style="left:693.5px">L</i><i style="left:701.75px">P</i><i style="left:805.25px">I</i><i style="left:813.75px">D</i><i style="left:821.5px">V</i><i style="left:830px">H</i><i style="left:837.5px">L</i><i style="left:853.25px">T</i><i style="left:861.75px">R</i><i style="left:877.75px">P</i><i style="left:885.5px">V</i><i style="left:893.75px">D</i><i style="left:901.75px">P</i><i style="left:909.5px">L</i><i style="left:917.25px">I</i><i style="left:925.75px">D</i><i style="left:934px">S</i><i style="left:941.75px">F</i><i style="left:957.5px">E</i><i style="left:974.25px">G</i><i style="left:989.75px">D</i><i style="left:1005.25px">I</i><i style="left:1013.25px">T</i><i style="left:1021.75px">F</i><i style="left:1030px">H</i><i style="left:1037.75px">P</i><i style="left:1045.5px">E</i><i style="left:1078px">S</i><i style="left:1085.75px">D</i><i style="left:1094px">H</i><i style="left:1101.5px">V</i><i style="left:1110px">H</i><i style="left:1117.75px">R</i><i style="left:1126px">S</i><i style="left:1133.5px">V</i><i style="left:1141.25px">Q</i><i style="left:1157.25px">I</i></div>
<div class="ln" style="top:322.75px"><i style="left:5.75px">R</i><i style="left:13.75px">P</i><i style="left:21.5px">E</i><i style="left:38px">H</i><i style="left:45.5px">E</i><i style="left:53.5px">L</i><i style="left:61.75px">P</i><i style="left:69px">J</i></div>
<div class="ln" style="top:322.75px"><i style="left:94px">1</i></div>
<div class="ln" style="top:322.75px"><i style="left:110.25px">2</i><i style="left:118px">1</i><i style="left:125.75px">7</i></div>
<div class="ln" style="top:322.75px"><i style="left:221.75px">K</i><i style="left:237.5px">V</i><i style="left:253.75px">P</i><i style="left:262px">S</i><i style="left:269.5px">L</i><i style="left:277.5px">L</i><i style="left:286px">S</i><i style="left:301.75px">D</i><i style="left:309.75px">F</i><i style="left:326px">H</i><i style="left:333.5px">L</i><i style="left:349.75px">K</i><i style="left:357.5px">E</i><i style="left:365.25px">I</i><i style="left:373.5px">E</i><i style="left:382px">S</i><i style="left:389.5px">V</i><i style="left:398px">S</i><i style="left:437.75px">D</i><i style="left:445.75px">F</i><i style="left:453.5px">L</i><i style="left:462px">H</i><i style="left:469.5px">V</i><i style="left:477.75px">D</i><i style="left:485.5px">V</i><i style="left:501.75px">D</i><i style="left:510.25px">G</i><i style="left:518px">H</i><i style="left:525.5px">Y</i><i style="left:533.5px">V</i><i style="left:541.75px">P</i><i style="left:557.5px">L</i><i style="left:565.25px">T</i><i style="left:582.25px">G</i><i style="left:589.75px">P</i><i style="left:597.5px">V</i><i style="left:605.25px">I</i><i style="left:613.5px">L</i><i style="left:621.5px">E</i><i style="left:637.5px">V</i><i style="left:645.25px">T</i><i style="left:653.25px">Q</i><i style="left:678px">S</i><i style="left:685.25px">Q</i><i style="left:693.5px">V</i><i style="left:701.75px">P</i><i style="left:805.5px">L</i><i style="left:813.75px">D</i><i style="left:821.5px">V</i><i style="left:830px">H</i><i style="left:837.5px">L</i><i style="left:853.5px">V</i><i style="left:861.5px">E</i><i style="left:894px">S</i><i style="left:901.75px">F</i><i style="left:909.75px">F</i><i style="left:917.5px">V</i><i style="left:925.5px">E</i><i style="left:933.5px">L</i><i style="left:941.75px">F</i><i style="left:957.75px">P</i><i style="left:965.5px">L</i><i style="left:981.75px">P</i><i style="left:989.25px">Q</i><i style="left:997.25px">I</i><i style="left:1005.25px">I</i><i style="left:1014px">S</i><i style="left:1021.25px">I</i><i style="left:1030px">H</i><i style="left:1045.5px">E</i><i style="left:1077.5px">E</i><i style="left:1085.75px">K</i><i style="left:1094px">H</i><i style="left:1101.75px">P</i><i style="left:1110px">H</i><i style="left:1117.75px">R</i><i style="left:1125.5px">V</i><i style="left:1133.5px">L</i><i style="left:1141.25px">Q</i><i style="left:1149.5px">L</i><i style="left:1157.25px">I</i></div>
<div class="ln" style="top:335.75px"><i style="left:5.75px">R</i><i style="left:13.75px">P</i><i style="left:21.5px">E</i><i style="left:38px">H</i><i style="left:45.5px">E</i><i style="left:53.5px">L</i><i style="left:61.75px">P</i><i style="left:69.5px">Y</i></div>
<div class="ln" style="top:335.75px"><i style="left:94px">1</i></div>
<div class="ln" style="top:335.75px"><i style="left:110.25px">2</i><i style="left:118px">1</i><i style="left:125.75px">7</i></div>
<div class="ln" style="top:335.75px"><i style="left:221.75px">K</i><i style="left:237.5px">V</i><i style="left:253.75px">P</i><i style="left:262px">S</i><i style="left:269.5px">L</i><i style="left:277.5px">L</i><i style="left:286px">S</i><i style="left:301.75px">D</i><i style="left:309.75px">F</i><i style="left:326px">H</i><i style="left:333.5px">L</i><i style="left:349.75px">K</i><i style="left:357.5px">E</i><i style="left:365.25px">I</i><i style="left:373.5px">E</i><i style="left:382px">S</i><i style="left:389.5px">V</i><i style="left:398px">S</i><i style="left:437.75px">D</i><i style="left:445.75px">F</i><i style="left:453.5px">L</i><i style="left:462px">H</i><i style="left:469.5px">V</i><i style="left:477.75px">D</i><i style="left:485.5px">V</i><i style="left:501.75px">D</i><i style="left:510.25px">G</i><i style="left:518px">H</i><i style="left:525.5px">Y</i><i style="left:533.5px">V</i><i style="left:541.75px">P</i><i style="left:557.5px">L</i><i style="left:565.25px">T</i><i style="left:582.25px">G</i><i style="left:589.75px">P</i><i style="left:597.5px">V</i><i style="left:605.5px">V</i><i style="left:613.5px">L</i><i style="left:621.5px">E</i><i style="left:637.5px">V</i><i style="left:645.25px">T</i><i style="left:653.25px">Q</i><i style="left:678px">S</i><i style="left:685.25px">Q</i><i style="left:693.5px">V</i><i style="left:701.75px">P</i><i style="left:805.5px">L</i><i style="left:813.75px">D</i><i style="left:821.5px">V</i><i style="left:830px">H</i><i style="left:837.5px">L</i><i style="left:853.5px">V</i><i style="left:861.5px">E</i><i style="left:894px">S</i><i style="left:901.75px">F</i><i style="left:909.75px">F</i><i style="left:925.5px">E</i><i style="left:933.5px">L</i><i style="left:941.75px">F</i><i style="left:957.75px">P</i><i style="left:965.5px">L</i><i style="left:973.75px">K</i><i style="left:981.75px">P</i><i style="left:989.25px">Q</i><i style="left:997.25px">I</i><i style="left:1005.25px">I</i><i style="left:1014px">S</i><i style="left:1021.25px">I</i><i style="left:1030px">H</i><i style="left:1045.5px">E</i><i style="left:1077.5px">E</i><i style="left:1085.75px">K</i><i style="left:1094px">H</i><i style="left:1101.75px">P</i><i style="left:1110px">H</i><i style="left:1117.75px">R</i><i style="left:1125.5px">V</i><i style="left:1133.5px">L</i><i style="left:1141.25px">Q</i><i style="left:1149.5px">L</i><i style="left:1157.25px">I</i></div>
<div class="ln" style="top:348.75px"><i style="left:5.75px">R</i><i style="left:13.75px">P</i><i style="left:21.5px">E</i><i style="left:45.25px">Q</i><i style="left:54.25px">U</i><i style="left:69.5px">E</i></div>
<div class="ln" style="top:348.75px"><i style="left:94px">1</i></div>
<div class="ln" style="top:348.75px"><i style="left:110.25px">2</i><i style="left:118.25px">2</i><i style="left:126.25px">2</i></div>
<div class="ln" style="top:348.75px"><i style="left:221.75px">K</i><i style="left:229.5px">L</i><i style="left:237.5px">L</i><i style="left:253.75px">P</i><i style="left:262px">S</i><i style="left:269.25px">I</i><i style="left:277.5px">L</i><i style="left:294.25px">G</i><i style="left:301.75px">D</i><i style="left:326.25px">C</i><i style="left:333.25px">I</i><i style="left:342.25px">G</i><i style="left:349.5px">E</i><i style="left:357.25px">Q</i><i style="left:365.25px">I</i><i style="left:373.25px">Q</i><i style="left:389.25px">T</i><i style="left:397.25px">I</i><i style="left:405.75px">R</i><i style="left:414.25px">G</i><i style="left:422.25px">G</i><i style="left:437.75px">D</i><i style="left:445.25px">I</i><i style="left:453.5px">L</i><i style="left:462px">H</i><i style="left:469.5px">Y</i><i style="left:477.75px">D</i><i style="left:485.5px">V</i><i style="left:501.75px">D</i><i style="left:510.25px">G</i><i style="left:518px">H</i><i style="left:525.75px">F</i><i style="left:533.5px">V</i><i style="left:541.75px">P</i><i style="left:557.25px">I</i><i style="left:565.25px">T</i><i style="left:582.25px">G</i><i style="left:589.5px">Y</i><i style="left:597.5px">E</i><i style="left:605.25px">I</i><i style="left:613.5px">L</i><i style="left:622px">S</i><i style="left:630px">H</i><i style="left:637.25px">I</i><i style="left:645.75px">R</i><i style="left:653.75px">K</i><i style="left:661.75px">R</i><i style="left:686px">S</i><i style="left:693.5px">L</i><i style="left:701.75px">P</i><i style="left:805.25px">I</i><i style="left:813.75px">D</i><i style="left:830px">H</i><i style="left:837.5px">L</i><i style="left:853.25px">I</i><i style="left:861.5px">E</i><i style="left:885.75px">P</i><i style="left:893.75px">D</i><i style="left:901.75px">K</i><i style="left:909.5px">Y</i><i style="left:917.25px">I</i><i style="left:925.75px">P</i><i style="left:933.75px">K</i><i style="left:941.75px">F</i><i style="left:949.5px">V</i><i style="left:957.5px">E</i><i style="left:974.25px">G</i><i style="left:1005.25px">I</i><i style="left:1014px">S</i><i style="left:1021.5px">V</i><i style="left:1030px">H</i><i style="left:1037.25px">I</i><i style="left:1045.5px">E</i><i style="left:1085.5px">Y</i><i style="left:1094px">H</i><i style="left:1101.25px">I</i><i style="left:1110px">H</i><i style="left:1117.75px">R</i><i style="left:1125.25px">T</i><i style="left:1133.5px">L</i><i style="left:1141.25px">Q</i><i style="left:1149.5px">L</i><i style="left:1157.25px">I</i></div>
<div class="ln" style="top:361.75px"><i style="left:5.75px">R</i><i style="left:13.75px">P</i><i style="left:21.5px">E</i><i style="left:45.5px">E</i><i style="left:53.25px">T</i><i style="left:61px">J</i></div>
<div class="ln" style="top:361.75px"><i style="left:94px">1</i></div>
<div class="ln" style="top:361.75px"><i style="left:110.25px">2</i><i style="left:117.5px">3</i><i style="left:125.25px">4</i></div>
<div class="ln" style="top:361.75px"><i style="left:221.25px">I</i><i style="left:229.75px">K</i><i style="left:237.25px">I</i><i style="left:246.25px">G</i><i style="left:262px">S</i><i style="left:269.25px">I</i><i style="left:277.5px">L</i><i style="left:286px">S</i><i style="left:301.75px">D</i><i style="left:309.75px">F</i><i style="left:318.25px">G</i><i style="left:326px">H</i><i style="left:333.5px">L</i><i style="left:341.75px">R</i><i style="left:349.5px">E</i><i style="left:357.5px">E</i><i style="left:365.25px">I</i><i style="left:373.75px">K</i><i style="left:381.75px">K</i><i style="left:397.5px">E</i><i style="left:405.5px">E</i><i style="left:422.25px">G</i><i style="left:429.5px">V</i><i style="left:437.75px">D</i><i style="left:445.75px">F</i><i style="left:453.75px">F</i><i style="left:462px">H</i><i style="left:469.5px">V</i><i style="left:477.75px">D</i><i style="left:501.75px">D</i><i style="left:510.25px">G</i><i style="left:518px">H</i><i style="left:525.75px">F</i><i style="left:533.5px">V</i><i style="left:541.75px">P</i><i style="left:557.25px">I</i><i style="left:566px">S</i><i style="left:582.25px">G</i><i style="left:589.25px">I</i><i style="left:598.25px">G</i><i style="left:605.25px">I</i><i style="left:621.75px">K</i><i style="left:630px">H</i><i style="left:637.5px">V</i><i style="left:645.75px">K</i><i style="left:653.75px">K</i><i style="left:661.5px">L</i><i style="left:677.25px">T</i><i style="left:685.5px">E</i><i style="left:693.5px">L</i><i style="left:701.75px">P</i><i style="left:805.5px">V</i><i style="left:813.5px">E</i><i style="left:821.5px">V</i><i style="left:830px">H</i><i style="left:837.5px">L</i><i style="left:853.5px">V</i><i style="left:861.5px">E</i><i style="left:885.5px">V</i><i style="left:893.75px">D</i><i style="left:901.5px">L</i><i style="left:909.75px">F</i><i style="left:917.5px">V</i><i style="left:933.5px">E</i><i style="left:941.75px">F</i><i style="left:949.5px">E</i><i style="left:957.5px">E</i><i style="left:989.75px">D</i><i style="left:997.5px">Y</i><i style="left:1005.25px">I</i><i style="left:1013.25px">T</i><i style="left:1021.75px">F</i><i style="left:1030px">H</i><i style="left:1037.25px">I</i><i style="left:1045.5px">E</i><i style="left:1077.5px">V</i><i style="left:1085.75px">K</i><i style="left:1093.75px">F</i><i style="left:1101.75px">P</i><i style="left:1109.75px">F</i><i style="left:1117.75px">R</i><i style="left:1125.25px">I</i><i style="left:1133.25px">I</i><i style="left:1149.75px">R</i><i style="left:1157.25px">I</i></div>
<div class="ln" style="top:374.75px"><i style="left:5.75px">R</i><i style="left:13.75px">P</i><i style="left:21.5px">E</i><i style="left:37.75px">R</i><i style="left:46px">H</i><i style="left:54px">O</i><i style="left:62.25px">C</i></div>
<div class="ln" style="top:374.75px"><i style="left:94px">1</i></div>
<div class="ln" style="top:374.75px"><i style="left:110.25px">2</i><i style="left:118.25px">2</i><i style="left:125.75px">8</i></div>
<div class="ln" style="top:374.75px"><i style="left:165.25px">T</i><i style="left:173.75px">F</i><i style="left:181.75px">D</i><i style="left:189.75px">R</i><i style="left:198px">S</i><i style="left:221.25px">I</i><i style="left:229.75px">K</i><i style="left:237.25px">I</i><i style="left:253.75px">P</i><i style="left:262px">S</i><i style="left:269.25px">I</i><i style="left:277.5px">L</i><i style="left:286px">S</i><i style="left:301.75px">D</i><i style="left:309.75px">F</i><i style="left:325.75px">D</i><i style="left:333.75px">F</i><i style="left:342.25px">G</i><i style="left:349.75px">R</i><i style="left:357.5px">E</i><i style="left:365.25px">I</i><i style="left:373.25px">Q</i><i style="left:389.25px">I</i><i style="left:397.5px">E</i><i style="left:413.25px">Q</i><i style="left:422.25px">G</i><i style="left:437.75px">D</i><i style="left:453.5px">V</i><i style="left:462px">H</i><i style="left:469.5px">V</i><i style="left:477.75px">D</i><i style="left:485.5px">V</i><i style="left:501.75px">D</i><i style="left:510.25px">G</i><i style="left:518px">H</i><i style="left:525.75px">F</i><i style="left:533.5px">V</i><i style="left:541.75px">P</i><i style="left:557.5px">L</i><i style="left:565.25px">T</i><i style="left:573.75px">F</i><i style="left:582.25px">G</i><i style="left:589.75px">P</i><i style="left:597.75px">P</i><i style="left:613.5px">V</i><i style="left:637.75px">F</i><i style="left:645.75px">R</i><i style="left:653.75px">K</i><i style="left:662px">H</i><i style="left:677.5px">V</i><i style="left:685.75px">K</i><i style="left:693.25px">T</i><i style="left:701.5px">V</i><i style="left:813.75px">D</i><i style="left:821.5px">V</i><i style="left:830px">H</i><i style="left:837.5px">L</i><i style="left:853.25px">I</i><i style="left:862px">S</i><i style="left:877.75px">P</i><i style="left:885.5px">V</i><i style="left:893.75px">D</i><i style="left:909.5px">Y</i><i style="left:917.25px">I</i><i style="left:925.75px">D</i><i style="left:941.5px">Y</i><i style="left:957.25px">Q</i><i style="left:974.25px">G</i><i style="left:989.75px">D</i><i style="left:997.5px">V</i><i style="left:1005.5px">L</i><i style="left:1013.25px">T</i><i style="left:1030px">H</i><i style="left:1037.5px">V</i><i style="left:1045.5px">E</i><i style="left:1078.25px">G</i><i style="left:1085.75px">P</i><i style="left:1094px">H</i><i style="left:1101.25px">I</i><i style="left:1110px">H</i><i style="left:1117.75px">R</i><i style="left:1125.25px">T</i><i style="left:1133.5px">L</i><i style="left:1141.25px">Q</i><i style="left:1157.25px">I</i></div>
<div class="ln" style="top:387.75px"><i style="left:5.75px">R</i><i style="left:13.75px">P</i><i style="left:21.5px">E</i><i style="left:37.25px">T</i><i style="left:45.75px">R</i><i style="left:53.5px">E</i><i style="left:61.75px">P</i></div>
<div class="ln" style="top:387.75px"><i style="left:94px">1</i></div>
<div class="ln" style="top:387.75px"><i style="left:110.25px">2</i><i style="left:118px">1</i><i style="left:125.75px">8</i></div>
<div class="ln" style="top:387.75px"><i style="left:181.5px">E</i><i style="left:189.75px">R</i><i style="left:198px">S</i><i style="left:221.75px">F</i><i style="left:229.25px">T</i><i style="left:237.5px">L</i><i style="left:253.75px">P</i><i style="left:262px">S</i><i style="left:269.5px">L</i><i style="left:277.5px">L</i><i style="left:286px">S</i><i style="left:301.75px">D</i><i style="left:309.75px">F</i><i style="left:318px">S</i><i style="left:333.5px">L</i><i style="left:341.75px">D</i><i style="left:349.75px">R</i><i style="left:365.5px">L</i><i style="left:373.5px">V</i><i style="left:381.5px">Y</i><i style="left:389.5px">L</i><i style="left:397.5px">E</i><i style="left:414px">H</i><i style="left:422.25px">G</i><i style="left:437.25px">Q</i><i style="left:453.5px">V</i><i style="left:462px">H</i><i style="left:469.5px">L</i><i style="left:477.75px">D</i><i style="left:485.5px">V</i><i style="left:501.75px">D</i><i style="left:510.25px">G</i><i style="left:518px">H</i><i style="left:525.75px">F</i><i style="left:533.5px">V</i><i style="left:541.75px">P</i><i style="left:557.5px">L</i><i style="left:565.25px">T</i><i style="left:573.75px">F</i><i style="left:582.25px">G</i><i style="left:597.75px">P</i><i style="left:605.5px">V</i><i style="left:613.5px">L</i><i style="left:621.75px">R</i><i style="left:630.25px">C</i><i style="left:637.5px">L</i><i style="left:645.75px">R</i><i style="left:654px">S</i><i style="left:661.75px">K</i><i style="left:677.25px">T</i><i style="left:686px">H</i><i style="left:693.5px">L</i><i style="left:701.75px">P</i><i style="left:805.75px">F</i><i style="left:813.75px">D</i><i style="left:821.5px">V</i><i style="left:830px">H</i><i style="left:837.5px">L</i><i style="left:853.5px">V</i><i style="left:862px">S</i><i style="left:869.75px">R</i><i style="left:877.75px">P</i><i style="left:893.75px">D</i><i style="left:909.5px">L</i><i style="left:917.25px">I</i><i style="left:925.5px">E</i><i style="left:933.75px">D</i><i style="left:941.75px">F</i><i style="left:949.5px">V</i><i style="left:957.25px">Q</i><i style="left:974.25px">G</i><i style="left:989.75px">D</i><i style="left:997.75px">F</i><i style="left:1005.5px">L</i><i style="left:1013.25px">T</i><i style="left:1021.75px">F</i><i style="left:1030px">H</i><i style="left:1037.25px">I</i><i style="left:1045.5px">E</i><i style="left:1077.5px">E</i><i style="left:1085.5px">V</i><i style="left:1094px">H</i><i style="left:1110px">H</i><i style="left:1117.75px">R</i><i style="left:1125.5px">L</i><i style="left:1133.25px">I</i><i style="left:1142px">H</i><i style="left:1157.25px">I</i></div>
<div class="ln" style="top:400.75px"><i style="left:13.5px">L</i><i style="left:22px">S</i><i style="left:29.5px">E</i><i style="left:45.5px">E</i><i style="left:54.25px">C</i><i style="left:62px">O</i><i style="left:69.5px">L</i><i style="left:77.25px">I</i></div>
<div class="ln" style="top:400.75px"><i style="left:94px">1</i></div>
<div class="ln" style="top:400.75px"><i style="left:110.25px">2</i><i style="left:117.5px">3</i><i style="left:126px">1</i></div>
<div class="ln" style="top:400.75px"><i style="left:229.75px">K</i><i style="left:237.25px">I</i><i style="left:246px">S</i><i style="left:253.75px">P</i><i style="left:262px">S</i><i style="left:269.5px">L</i><i style="left:286.25px">C</i><i style="left:301.75px">D</i><i style="left:309.5px">L</i><i style="left:317.5px">L</i><i style="left:325.75px">K</i><i style="left:333.75px">F</i><i style="left:341.75px">K</i><i style="left:349.5px">E</i><i style="left:357.25px">Q</i><i style="left:365.25px">I</i><i style="left:373.5px">E</i><i style="left:381.75px">F</i><i style="left:389.25px">I</i><i style="left:397.75px">D</i><i style="left:406px">S</i><i style="left:422px">H</i><i style="left:437.75px">D</i><i style="left:445.5px">Y</i><i style="left:453.75px">F</i><i style="left:462px">H</i><i style="left:469.25px">I</i><i style="left:477.75px">D</i><i style="left:485.25px">I</i><i style="left:501.75px">D</i><i style="left:510.25px">G</i><i style="left:518px">H</i><i style="left:525.75px">F</i><i style="left:533.5px">V</i><i style="left:541.75px">P</i><i style="left:557.5px">L</i><i style="left:565.25px">T</i><i style="left:573.5px">L</i><i style="left:582px">S</i><i style="left:589.75px">P</i><i style="left:597.75px">F</i><i style="left:605.75px">F</i><i style="left:613.5px">V</i><i style="left:622px">S</i><i style="left:629.25px">Q</i><i style="left:637.5px">V</i><i style="left:645.75px">K</i><i style="left:653.75px">K</i><i style="left:661.5px">L</i><i style="left:685.25px">T</i><i style="left:693.75px">K</i><i style="left:701.75px">P</i><i style="left:805.5px">L</i><i style="left:813.75px">D</i><i style="left:822.25px">C</i><i style="left:830px">H</i><i style="left:837.5px">L</i><i style="left:853.5px">V</i><i style="left:861.25px">T</i><i style="left:877.75px">R</i><i style="left:885.75px">P</i><i style="left:893.25px">Q</i><i style="left:901.75px">D</i><i style="left:909.5px">Y</i><i style="left:917.25px">I</i><i style="left:933.25px">Q</i><i style="left:941.5px">L</i><i style="left:957.75px">R</i><i style="left:974.25px">G</i><i style="left:989.75px">D</i><i style="left:997.75px">F</i><i style="left:1005.25px">I</i><i style="left:1013.25px">T</i><i style="left:1021.5px">L</i><i style="left:1030px">H</i><i style="left:1037.75px">P</i><i style="left:1045.5px">E</i><i style="left:1053.25px">T</i><i style="left:1069.25px">I</i><i style="left:1086.25px">G</i><i style="left:1093.25px">Q</i><i style="left:1109.75px">F</i><i style="left:1117.75px">R</i><i style="left:1125.5px">L</i><i style="left:1133.25px">I</i><i style="left:1141.75px">D</i><i style="left:1149.5px">E</i><i style="left:1157.25px">I</i></div>
<div class="ln" style="top:413.75px"><i style="left:6px">S</i><i style="left:14.25px">G</i><i style="left:22.25px">C</i><i style="left:29.5px">E</i><i style="left:45.5px">E</i><i style="left:54.25px">C</i><i style="left:62px">O</i><i style="left:69.5px">L</i><i style="left:77.25px">I</i></div>
<div class="ln" style="top:413.75px"><i style="left:94px">1</i></div>
<div class="ln" style="top:413.75px"><i style="left:110.25px">2</i><i style="left:118px">1</i><i style="left:126px">O</i></div>
<div class="ln" style="top:413.75px"><i style="left:229.25px">I</i><i style="left:237.5px">L</i><i style="left:246px">H</i><i style="left:253.75px">P</i><i style="left:262px">S</i><i style="left:269.5px">L</i><i style="left:286px">S</i><i style="left:309.75px">P</i><i style="left:317.5px">L</i><i style="left:326px">H</i><i style="left:333.5px">Y</i><i style="left:342.25px">G</i><i style="left:349.75px">R</i><i style="left:357.5px">E</i><i style="left:365.5px">L</i><i style="left:373.25px">T</i><i style="left:389.5px">L</i><i style="left:397.75px">D</i><i style="left:413.5px">L</i><i style="left:421.75px">D</i><i style="left:429.75px">F</i><i style="left:438.25px">G</i><i style="left:446px">S</i><i style="left:453.5px">L</i><i style="left:462px">H</i><i style="left:469.5px">L</i><i style="left:477.75px">D</i><i style="left:485.25px">I</i><i style="left:493.5px">E</i><i style="left:501.75px">D</i><i style="left:510px">S</i><i style="left:518px">S</i><i style="left:525.75px">F</i><i style="left:533.25px">I</i><i style="left:557.25px">I</i><i style="left:565.25px">T</i><i style="left:573.75px">F</i><i style="left:582.25px">G</i><i style="left:597.75px">K</i><i style="left:605.25px">T</i><i style="left:613.5px">V</i><i style="left:621.25px">Q</i><i style="left:637.5px">V</i><i style="left:653.75px">R</i><i style="left:661.25px">Q</i><i style="left:677.25px">T</i><i style="left:685.75px">P</i><i style="left:694px">H</i><i style="left:701.75px">P</i><i style="left:805.5px">L</i><i style="left:814px">S</i><i style="left:821.75px">F</i><i style="left:830px">H</i><i style="left:837.75px">F</i><i style="left:853.5px">L</i><i style="left:877.75px">R</i><i style="left:885.75px">P</i><i style="left:893.25px">Q</i><i style="left:901.75px">R</i><i style="left:917.75px">F</i><i style="left:941.5px">L</i><i style="left:957.5px">E</i><i style="left:965.25px">I</i><i style="left:973.75px">R</i><i style="left:981.75px">P</i><i style="left:1005.25px">I</i><i style="left:1013.75px">F</i><i style="left:1021.5px">V</i><i style="left:1030px">H</i><i style="left:1045.5px">E</i><i style="left:1069.25px">T</i><i style="left:1077.5px">L</i><i style="left:1085.75px">D</i><i style="left:1093.5px">Y</i><i style="left:1101.75px">P</i><i style="left:1110px">S</i><i style="left:1117.5px">E</i><i style="left:1125.25px">T</i><i style="left:1133.5px">L</i><i style="left:1141.25px">T</i><i style="left:1149.5px">E</i><i style="left:1157.25px">I</i></div>
</div>
<svg class="a" style="left:0;top:0" width="1164" height="504" shape-rendering="crispEdges"><path d="M144 72h3v1h-3zM145 71h1v3h-1zM152 72h3v1h-3zM153 71h1v3h-1zM160 72h3v1h-3zM161 71h1v3h-1zM168 72h3v1h-3zM169 71h1v3h-1zM176 72h3v1h-3zM177 71h1v3h-1zM184 72h3v1h-3zM185 71h1v3h-1zM192 72h3v1h-3zM193 71h1v3h-1zM200 72h3v1h-3zM201 71h1v3h-1zM408 72h3v1h-3zM409 71h1v3h-1zM416 72h3v1h-3zM417 71h1v3h-1zM704 72h3v1h-3zM705 71h1v3h-1zM712 72h3v1h-3zM713 71h1v3h-1zM720 72h3v1h-3zM721 71h1v3h-1zM728 72h3v1h-3zM729 71h1v3h-1zM736 72h3v1h-3zM737 71h1v3h-1zM744 72h3v1h-3zM745 71h1v3h-1zM752 72h3v1h-3zM753 71h1v3h-1zM760 72h3v1h-3zM761 71h1v3h-1zM768 72h3v1h-3zM769 71h1v3h-1zM776 72h3v1h-3zM777 71h1v3h-1zM784 72h3v1h-3zM785 71h1v3h-1zM792 72h3v1h-3zM793 71h1v3h-1zM800 72h3v1h-3zM801 71h1v3h-1zM872 72h3v1h-3zM873 71h1v3h-1zM1056 72h3v1h-3zM1057 71h1v3h-1zM1064 72h3v1h-3zM1065 71h1v3h-1zM144 85h3v1h-3zM145 84h1v3h-1zM152 85h3v1h-3zM153 84h1v3h-1zM160 85h3v1h-3zM161 84h1v3h-1zM408 85h3v1h-3zM409 84h1v3h-1zM416 85h3v1h-3zM417 84h1v3h-1zM704 85h3v1h-3zM705 84h1v3h-1zM712 85h3v1h-3zM713 84h1v3h-1zM720 85h3v1h-3zM721 84h1v3h-1zM728 85h3v1h-3zM729 84h1v3h-1zM736 85h3v1h-3zM737 84h1v3h-1zM744 85h3v1h-3zM745 84h1v3h-1zM752 85h3v1h-3zM753 84h1v3h-1zM760 85h3v1h-3zM761 84h1v3h-1zM768 85h3v1h-3zM769 84h1v3h-1zM776 85h3v1h-3zM777 84h1v3h-1zM784 85h3v1h-3zM785 84h1v3h-1zM792 85h3v1h-3zM793 84h1v3h-1zM800 85h3v1h-3zM801 84h1v3h-1zM872 85h3v1h-3zM873 84h1v3h-1zM1056 85h3v1h-3zM1057 84h1v3h-1zM1064 85h3v1h-3zM1065 84h1v3h-1zM144 98h3v1h-3zM145 97h1v3h-1zM152 98h3v1h-3zM153 97h1v3h-1zM160 98h3v1h-3zM161 97h1v3h-1zM168 98h3v1h-3zM169 97h1v3h-1zM176 98h3v1h-3zM177 97h1v3h-1zM184 98h3v1h-3zM185 97h1v3h-1zM192 98h3v1h-3zM193 97h1v3h-1zM200 98h3v1h-3zM201 97h1v3h-1zM408 98h3v1h-3zM409 97h1v3h-1zM416 98h3v1h-3zM417 97h1v3h-1zM704 98h3v1h-3zM705 97h1v3h-1zM712 98h3v1h-3zM713 97h1v3h-1zM720 98h3v1h-3zM721 97h1v3h-1zM728 98h3v1h-3zM729 97h1v3h-1zM736 98h3v1h-3zM737 97h1v3h-1zM744 98h3v1h-3zM745 97h1v3h-1zM752 98h3v1h-3zM753 97h1v3h-1zM760 98h3v1h-3zM761 97h1v3h-1zM768 98h3v1h-3zM769 97h1v3h-1zM776 98h3v1h-3zM777 97h1v3h-1zM784 98h3v1h-3zM785 97h1v3h-1zM792 98h3v1h-3zM793 97h1v3h-1zM800 98h3v1h-3zM801 97h1v3h-1zM872 98h3v1h-3zM873 97h1v3h-1zM1056 98h3v1h-3zM1057 97h1v3h-1zM1064 98h3v1h-3zM1065 97h1v3h-1zM144 111h3v1h-3zM145 110h1v3h-1zM152 111h3v1h-3zM153 110h1v3h-1zM160 111h3v1h-3zM161 110h1v3h-1zM168 111h3v1h-3zM169 110h1v3h-1zM176 111h3v1h-3zM177 110h1v3h-1zM184 111h3v1h-3zM185 110h1v3h-1zM192 111h3v1h-3zM193 110h1v3h-1zM872 111h3v1h-3zM873 110h1v3h-1zM1056 111h3v1h-3zM1057 110h1v3h-1zM1064 111h3v1h-3zM1065 110h1v3h-1zM208 124h3v1h-3zM209 123h1v3h-1zM672 124h3v1h-3zM673 123h1v3h-1zM712 124h3v1h-3zM713 123h1v3h-1zM720 124h3v1h-3zM721 123h1v3h-1zM728 124h3v1h-3zM729 123h1v3h-1zM736 124h3v1h-3zM737 123h1v3h-1zM744 124h3v1h-3zM745 123h1v3h-1zM752 124h3v1h-3zM753 123h1v3h-1zM760 124h3v1h-3zM761 123h1v3h-1zM768 124h3v1h-3zM769 123h1v3h-1zM776 124h3v1h-3zM777 123h1v3h-1zM784 124h3v1h-3zM785 123h1v3h-1zM792 124h3v1h-3zM793 123h1v3h-1zM800 124h3v1h-3zM801 123h1v3h-1zM872 124h3v1h-3zM873 123h1v3h-1zM1056 124h3v1h-3zM1057 123h1v3h-1zM1064 124h3v1h-3zM1065 123h1v3h-1zM144 137h3v1h-3zM145 136h1v3h-1zM152 137h3v1h-3zM153 136h1v3h-1zM160 137h3v1h-3zM161 136h1v3h-1zM168 137h3v1h-3zM169 136h1v3h-1zM208 137h3v1h-3zM209 136h1v3h-1zM672 137h3v1h-3zM673 136h1v3h-1zM712 137h3v1h-3zM713 136h1v3h-1zM720 137h3v1h-3zM721 136h1v3h-1zM728 137h3v1h-3zM729 136h1v3h-1zM736 137h3v1h-3zM737 136h1v3h-1zM744 137h3v1h-3zM745 136h1v3h-1zM752 137h3v1h-3zM753 136h1v3h-1zM760 137h3v1h-3zM761 136h1v3h-1zM768 137h3v1h-3zM769 136h1v3h-1zM776 137h3v1h-3zM777 136h1v3h-1zM784 137h3v1h-3zM785 136h1v3h-1zM792 137h3v1h-3zM793 136h1v3h-1zM800 137h3v1h-3zM801 136h1v3h-1zM872 137h3v1h-3zM873 136h1v3h-1zM1056 137h3v1h-3zM1057 136h1v3h-1zM1064 137h3v1h-3zM1065 136h1v3h-1zM144 150h3v1h-3zM145 149h1v3h-1zM152 150h3v1h-3zM153 149h1v3h-1zM160 150h3v1h-3zM161 149h1v3h-1zM168 150h3v1h-3zM169 149h1v3h-1zM672 150h3v1h-3zM673 149h1v3h-1zM712 150h3v1h-3zM713 149h1v3h-1zM720 150h3v1h-3zM721 149h1v3h-1zM728 150h3v1h-3zM729 149h1v3h-1zM736 150h3v1h-3zM737 149h1v3h-1zM744 150h3v1h-3zM745 149h1v3h-1zM752 150h3v1h-3zM753 149h1v3h-1zM760 150h3v1h-3zM761 149h1v3h-1zM768 150h3v1h-3zM769 149h1v3h-1zM776 150h3v1h-3zM777 149h1v3h-1zM784 150h3v1h-3zM785 149h1v3h-1zM792 150h3v1h-3zM793 149h1v3h-1zM800 150h3v1h-3zM801 149h1v3h-1zM872 150h3v1h-3zM873 149h1v3h-1zM1056 150h3v1h-3zM1057 149h1v3h-1zM1064 150h3v1h-3zM1065 149h1v3h-1zM208 163h3v1h-3zM209 162h1v3h-1zM216 163h3v1h-3zM217 162h1v3h-1zM672 163h3v1h-3zM673 162h1v3h-1zM712 163h3v1h-3zM713 162h1v3h-1zM720 163h3v1h-3zM721 162h1v3h-1zM728 163h3v1h-3zM729 162h1v3h-1zM736 163h3v1h-3zM737 162h1v3h-1zM744 163h3v1h-3zM745 162h1v3h-1zM752 163h3v1h-3zM753 162h1v3h-1zM760 163h3v1h-3zM761 162h1v3h-1zM768 163h3v1h-3zM769 162h1v3h-1zM776 163h3v1h-3zM777 162h1v3h-1zM784 163h3v1h-3zM785 162h1v3h-1zM792 163h3v1h-3zM793 162h1v3h-1zM800 163h3v1h-3zM801 162h1v3h-1zM872 163h3v1h-3zM873 162h1v3h-1zM208 176h3v1h-3zM209 175h1v3h-1zM216 176h3v1h-3zM217 175h1v3h-1zM672 176h3v1h-3zM673 175h1v3h-1zM712 176h3v1h-3zM713 175h1v3h-1zM720 176h3v1h-3zM721 175h1v3h-1zM728 176h3v1h-3zM729 175h1v3h-1zM736 176h3v1h-3zM737 175h1v3h-1zM744 176h3v1h-3zM745 175h1v3h-1zM752 176h3v1h-3zM753 175h1v3h-1zM760 176h3v1h-3zM761 175h1v3h-1zM768 176h3v1h-3zM769 175h1v3h-1zM776 176h3v1h-3zM777 175h1v3h-1zM784 176h3v1h-3zM785 175h1v3h-1zM792 176h3v1h-3zM793 175h1v3h-1zM800 176h3v1h-3zM801 175h1v3h-1zM872 176h3v1h-3zM873 175h1v3h-1zM208 189h3v1h-3zM209 188h1v3h-1zM216 189h3v1h-3zM217 188h1v3h-1zM672 189h3v1h-3zM673 188h1v3h-1zM712 189h3v1h-3zM713 188h1v3h-1zM720 189h3v1h-3zM721 188h1v3h-1zM728 189h3v1h-3zM729 188h1v3h-1zM736 189h3v1h-3zM737 188h1v3h-1zM744 189h3v1h-3zM745 188h1v3h-1zM752 189h3v1h-3zM753 188h1v3h-1zM760 189h3v1h-3zM761 188h1v3h-1zM768 189h3v1h-3zM769 188h1v3h-1zM776 189h3v1h-3zM777 188h1v3h-1zM784 189h3v1h-3zM785 188h1v3h-1zM792 189h3v1h-3zM793 188h1v3h-1zM800 189h3v1h-3zM801 188h1v3h-1zM872 189h3v1h-3zM873 188h1v3h-1zM144 202h3v1h-3zM145 201h1v3h-1zM152 202h3v1h-3zM153 201h1v3h-1zM160 202h3v1h-3zM161 201h1v3h-1zM168 202h3v1h-3zM169 201h1v3h-1zM200 202h3v1h-3zM201 201h1v3h-1zM208 202h3v1h-3zM209 201h1v3h-1zM216 202h3v1h-3zM217 201h1v3h-1zM672 202h3v1h-3zM673 201h1v3h-1zM712 202h3v1h-3zM713 201h1v3h-1zM720 202h3v1h-3zM721 201h1v3h-1zM728 202h3v1h-3zM729 201h1v3h-1zM736 202h3v1h-3zM737 201h1v3h-1zM744 202h3v1h-3zM745 201h1v3h-1zM752 202h3v1h-3zM753 201h1v3h-1zM760 202h3v1h-3zM761 201h1v3h-1zM768 202h3v1h-3zM769 201h1v3h-1zM776 202h3v1h-3zM777 201h1v3h-1zM784 202h3v1h-3zM785 201h1v3h-1zM792 202h3v1h-3zM793 201h1v3h-1zM800 202h3v1h-3zM801 201h1v3h-1zM872 202h3v1h-3zM873 201h1v3h-1zM144 215h3v1h-3zM145 214h1v3h-1zM152 215h3v1h-3zM153 214h1v3h-1zM160 215h3v1h-3zM161 214h1v3h-1zM168 215h3v1h-3zM169 214h1v3h-1zM176 215h3v1h-3zM177 214h1v3h-1zM184 215h3v1h-3zM185 214h1v3h-1zM192 215h3v1h-3zM193 214h1v3h-1zM208 215h3v1h-3zM209 214h1v3h-1zM216 215h3v1h-3zM217 214h1v3h-1zM672 215h3v1h-3zM673 214h1v3h-1zM712 215h3v1h-3zM713 214h1v3h-1zM720 215h3v1h-3zM721 214h1v3h-1zM728 215h3v1h-3zM729 214h1v3h-1zM736 215h3v1h-3zM737 214h1v3h-1zM744 215h3v1h-3zM745 214h1v3h-1zM752 215h3v1h-3zM753 214h1v3h-1zM760 215h3v1h-3zM761 214h1v3h-1zM768 215h3v1h-3zM769 214h1v3h-1zM776 215h3v1h-3zM777 214h1v3h-1zM784 215h3v1h-3zM785 214h1v3h-1zM792 215h3v1h-3zM793 214h1v3h-1zM800 215h3v1h-3zM801 214h1v3h-1zM872 215h3v1h-3zM873 214h1v3h-1zM1056 215h3v1h-3zM1057 214h1v3h-1zM1064 215h3v1h-3zM1065 214h1v3h-1zM144 228h3v1h-3zM145 227h1v3h-1zM152 228h3v1h-3zM153 227h1v3h-1zM160 228h3v1h-3zM161 227h1v3h-1zM168 228h3v1h-3zM169 227h1v3h-1zM176 228h3v1h-3zM177 227h1v3h-1zM208 228h3v1h-3zM209 227h1v3h-1zM216 228h3v1h-3zM217 227h1v3h-1zM712 228h3v1h-3zM713 227h1v3h-1zM720 228h3v1h-3zM721 227h1v3h-1zM728 228h3v1h-3zM729 227h1v3h-1zM736 228h3v1h-3zM737 227h1v3h-1zM744 228h3v1h-3zM745 227h1v3h-1zM752 228h3v1h-3zM753 227h1v3h-1zM760 228h3v1h-3zM761 227h1v3h-1zM768 228h3v1h-3zM769 227h1v3h-1zM776 228h3v1h-3zM777 227h1v3h-1zM784 228h3v1h-3zM785 227h1v3h-1zM792 228h3v1h-3zM793 227h1v3h-1zM800 228h3v1h-3zM801 227h1v3h-1zM872 228h3v1h-3zM873 227h1v3h-1zM1056 228h3v1h-3zM1057 227h1v3h-1zM1064 228h3v1h-3zM1065 227h1v3h-1zM144 241h3v1h-3zM145 240h1v3h-1zM152 241h3v1h-3zM153 240h1v3h-1zM160 241h3v1h-3zM161 240h1v3h-1zM168 241h3v1h-3zM169 240h1v3h-1zM176 241h3v1h-3zM177 240h1v3h-1zM208 241h3v1h-3zM209 240h1v3h-1zM216 241h3v1h-3zM217 240h1v3h-1zM712 241h3v1h-3zM713 240h1v3h-1zM720 241h3v1h-3zM721 240h1v3h-1zM728 241h3v1h-3zM729 240h1v3h-1zM736 241h3v1h-3zM737 240h1v3h-1zM744 241h3v1h-3zM745 240h1v3h-1zM752 241h3v1h-3zM753 240h1v3h-1zM760 241h3v1h-3zM761 240h1v3h-1zM768 241h3v1h-3zM769 240h1v3h-1zM776 241h3v1h-3zM777 240h1v3h-1zM784 241h3v1h-3zM785 240h1v3h-1zM792 241h3v1h-3zM793 240h1v3h-1zM800 241h3v1h-3zM801 240h1v3h-1zM872 241h3v1h-3zM873 240h1v3h-1zM1056 241h3v1h-3zM1057 240h1v3h-1zM1064 241h3v1h-3zM1065 240h1v3h-1zM144 254h3v1h-3zM145 253h1v3h-1zM152 254h3v1h-3zM153 253h1v3h-1zM160 254h3v1h-3zM161 253h1v3h-1zM168 254h3v1h-3zM169 253h1v3h-1zM176 254h3v1h-3zM177 253h1v3h-1zM208 254h3v1h-3zM209 253h1v3h-1zM216 254h3v1h-3zM217 253h1v3h-1zM712 254h3v1h-3zM713 253h1v3h-1zM720 254h3v1h-3zM721 253h1v3h-1zM728 254h3v1h-3zM729 253h1v3h-1zM736 254h3v1h-3zM737 253h1v3h-1zM744 254h3v1h-3zM745 253h1v3h-1zM752 254h3v1h-3zM753 253h1v3h-1zM760 254h3v1h-3zM761 253h1v3h-1zM768 254h3v1h-3zM769 253h1v3h-1zM776 254h3v1h-3zM777 253h1v3h-1zM784 254h3v1h-3zM785 253h1v3h-1zM792 254h3v1h-3zM793 253h1v3h-1zM800 254h3v1h-3zM801 253h1v3h-1zM872 254h3v1h-3zM873 253h1v3h-1zM1056 254h3v1h-3zM1057 253h1v3h-1zM1064 254h3v1h-3zM1065 253h1v3h-1zM144 267h3v1h-3zM145 266h1v3h-1zM152 267h3v1h-3zM153 266h1v3h-1zM160 267h3v1h-3zM161 266h1v3h-1zM168 267h3v1h-3zM169 266h1v3h-1zM176 267h3v1h-3zM177 266h1v3h-1zM208 267h3v1h-3zM209 266h1v3h-1zM216 267h3v1h-3zM217 266h1v3h-1zM712 267h3v1h-3zM713 266h1v3h-1zM720 267h3v1h-3zM721 266h1v3h-1zM728 267h3v1h-3zM729 266h1v3h-1zM736 267h3v1h-3zM737 266h1v3h-1zM744 267h3v1h-3zM745 266h1v3h-1zM752 267h3v1h-3zM753 266h1v3h-1zM760 267h3v1h-3zM761 266h1v3h-1zM768 267h3v1h-3zM769 266h1v3h-1zM776 267h3v1h-3zM777 266h1v3h-1zM784 267h3v1h-3zM785 266h1v3h-1zM792 267h3v1h-3zM793 266h1v3h-1zM800 267h3v1h-3zM801 266h1v3h-1zM872 267h3v1h-3zM873 266h1v3h-1zM1056 267h3v1h-3zM1057 266h1v3h-1zM1064 267h3v1h-3zM1065 266h1v3h-1zM144 280h3v1h-3zM145 279h1v3h-1zM152 280h3v1h-3zM153 279h1v3h-1zM160 280h3v1h-3zM161 279h1v3h-1zM168 280h3v1h-3zM169 279h1v3h-1zM176 280h3v1h-3zM177 279h1v3h-1zM208 280h3v1h-3zM209 279h1v3h-1zM216 280h3v1h-3zM217 279h1v3h-1zM712 280h3v1h-3zM713 279h1v3h-1zM720 280h3v1h-3zM721 279h1v3h-1zM728 280h3v1h-3zM729 279h1v3h-1zM736 280h3v1h-3zM737 279h1v3h-1zM744 280h3v1h-3zM745 279h1v3h-1zM752 280h3v1h-3zM753 279h1v3h-1zM760 280h3v1h-3zM761 279h1v3h-1zM768 280h3v1h-3zM769 279h1v3h-1zM776 280h3v1h-3zM777 279h1v3h-1zM784 280h3v1h-3zM785 279h1v3h-1zM792 280h3v1h-3zM793 279h1v3h-1zM800 280h3v1h-3zM801 279h1v3h-1zM872 280h3v1h-3zM873 279h1v3h-1zM1056 280h3v1h-3zM1057 279h1v3h-1zM1064 280h3v1h-3zM1065 279h1v3h-1zM208 293h3v1h-3zM209 292h1v3h-1zM216 293h3v1h-3zM217 292h1v3h-1zM672 293h3v1h-3zM673 292h1v3h-1zM712 293h3v1h-3zM713 292h1v3h-1zM720 293h3v1h-3zM721 292h1v3h-1zM728 293h3v1h-3zM729 292h1v3h-1zM736 293h3v1h-3zM737 292h1v3h-1zM744 293h3v1h-3zM745 292h1v3h-1zM752 293h3v1h-3zM753 292h1v3h-1zM760 293h3v1h-3zM761 292h1v3h-1zM768 293h3v1h-3zM769 292h1v3h-1zM776 293h3v1h-3zM777 292h1v3h-1zM784 293h3v1h-3zM785 292h1v3h-1zM792 293h3v1h-3zM793 292h1v3h-1zM800 293h3v1h-3zM801 292h1v3h-1zM872 293h3v1h-3zM873 292h1v3h-1zM1056 293h3v1h-3zM1057 292h1v3h-1zM1064 293h3v1h-3zM1065 292h1v3h-1zM208 306h3v1h-3zM209 305h1v3h-1zM216 306h3v1h-3zM217 305h1v3h-1zM672 306h3v1h-3zM673 305h1v3h-1zM712 306h3v1h-3zM713 305h1v3h-1zM720 306h3v1h-3zM721 305h1v3h-1zM728 306h3v1h-3zM729 305h1v3h-1zM736 306h3v1h-3zM737 305h1v3h-1zM744 306h3v1h-3zM745 305h1v3h-1zM752 306h3v1h-3zM753 305h1v3h-1zM760 306h3v1h-3zM761 305h1v3h-1zM768 306h3v1h-3zM769 305h1v3h-1zM776 306h3v1h-3zM777 305h1v3h-1zM784 306h3v1h-3zM785 305h1v3h-1zM792 306h3v1h-3zM793 305h1v3h-1zM800 306h3v1h-3zM801 305h1v3h-1zM872 306h3v1h-3zM873 305h1v3h-1zM1056 306h3v1h-3zM1057 305h1v3h-1zM1064 306h3v1h-3zM1065 305h1v3h-1zM144 319h3v1h-3zM145 318h1v3h-1zM152 319h3v1h-3zM153 318h1v3h-1zM160 319h3v1h-3zM161 318h1v3h-1zM168 319h3v1h-3zM169 318h1v3h-1zM208 319h3v1h-3zM209 318h1v3h-1zM216 319h3v1h-3zM217 318h1v3h-1zM672 319h3v1h-3zM673 318h1v3h-1zM712 319h3v1h-3zM713 318h1v3h-1zM720 319h3v1h-3zM721 318h1v3h-1zM728 319h3v1h-3zM729 318h1v3h-1zM736 319h3v1h-3zM737 318h1v3h-1zM744 319h3v1h-3zM745 318h1v3h-1zM752 319h3v1h-3zM753 318h1v3h-1zM760 319h3v1h-3zM761 318h1v3h-1zM768 319h3v1h-3zM769 318h1v3h-1zM776 319h3v1h-3zM777 318h1v3h-1zM784 319h3v1h-3zM785 318h1v3h-1zM792 319h3v1h-3zM793 318h1v3h-1zM800 319h3v1h-3zM801 318h1v3h-1zM872 319h3v1h-3zM873 318h1v3h-1zM1056 319h3v1h-3zM1057 318h1v3h-1zM1064 319h3v1h-3zM1065 318h1v3h-1zM144 332h3v1h-3zM145 331h1v3h-1zM152 332h3v1h-3zM153 331h1v3h-1zM160 332h3v1h-3zM161 331h1v3h-1zM168 332h3v1h-3zM169 331h1v3h-1zM176 332h3v1h-3zM177 331h1v3h-1zM184 332h3v1h-3zM185 331h1v3h-1zM192 332h3v1h-3zM193 331h1v3h-1zM208 332h3v1h-3zM209 331h1v3h-1zM216 332h3v1h-3zM217 331h1v3h-1zM232 332h3v1h-3zM233 331h1v3h-1zM416 332h3v1h-3zM417 331h1v3h-1zM424 332h3v1h-3zM425 331h1v3h-1zM672 332h3v1h-3zM673 331h1v3h-1zM712 332h3v1h-3zM713 331h1v3h-1zM720 332h3v1h-3zM721 331h1v3h-1zM728 332h3v1h-3zM729 331h1v3h-1zM736 332h3v1h-3zM737 331h1v3h-1zM744 332h3v1h-3zM745 331h1v3h-1zM752 332h3v1h-3zM753 331h1v3h-1zM760 332h3v1h-3zM761 331h1v3h-1zM768 332h3v1h-3zM769 331h1v3h-1zM776 332h3v1h-3zM777 331h1v3h-1zM784 332h3v1h-3zM785 331h1v3h-1zM792 332h3v1h-3zM793 331h1v3h-1zM800 332h3v1h-3zM801 331h1v3h-1zM872 332h3v1h-3zM873 331h1v3h-1zM1056 332h3v1h-3zM1057 331h1v3h-1zM1064 332h3v1h-3zM1065 331h1v3h-1zM144 345h3v1h-3zM145 344h1v3h-1zM152 345h3v1h-3zM153 344h1v3h-1zM160 345h3v1h-3zM161 344h1v3h-1zM168 345h3v1h-3zM169 344h1v3h-1zM176 345h3v1h-3zM177 344h1v3h-1zM184 345h3v1h-3zM185 344h1v3h-1zM192 345h3v1h-3zM193 344h1v3h-1zM208 345h3v1h-3zM209 344h1v3h-1zM216 345h3v1h-3zM217 344h1v3h-1zM232 345h3v1h-3zM233 344h1v3h-1zM416 345h3v1h-3zM417 344h1v3h-1zM424 345h3v1h-3zM425 344h1v3h-1zM672 345h3v1h-3zM673 344h1v3h-1zM712 345h3v1h-3zM713 344h1v3h-1zM720 345h3v1h-3zM721 344h1v3h-1zM728 345h3v1h-3zM729 344h1v3h-1zM736 345h3v1h-3zM737 344h1v3h-1zM744 345h3v1h-3zM745 344h1v3h-1zM752 345h3v1h-3zM753 344h1v3h-1zM760 345h3v1h-3zM761 344h1v3h-1zM768 345h3v1h-3zM769 344h1v3h-1zM776 345h3v1h-3zM777 344h1v3h-1zM784 345h3v1h-3zM785 344h1v3h-1zM792 345h3v1h-3zM793 344h1v3h-1zM800 345h3v1h-3zM801 344h1v3h-1zM872 345h3v1h-3zM873 344h1v3h-1zM1056 345h3v1h-3zM1057 344h1v3h-1zM1064 345h3v1h-3zM1065 344h1v3h-1zM144 358h3v1h-3zM145 357h1v3h-1zM152 358h3v1h-3zM153 357h1v3h-1zM160 358h3v1h-3zM161 357h1v3h-1zM168 358h3v1h-3zM169 357h1v3h-1zM176 358h3v1h-3zM177 357h1v3h-1zM184 358h3v1h-3zM185 357h1v3h-1zM192 358h3v1h-3zM193 357h1v3h-1zM208 358h3v1h-3zM209 357h1v3h-1zM216 358h3v1h-3zM217 357h1v3h-1zM672 358h3v1h-3zM673 357h1v3h-1zM712 358h3v1h-3zM713 357h1v3h-1zM720 358h3v1h-3zM721 357h1v3h-1zM728 358h3v1h-3zM729 357h1v3h-1zM736 358h3v1h-3zM737 357h1v3h-1zM744 358h3v1h-3zM745 357h1v3h-1zM752 358h3v1h-3zM753 357h1v3h-1zM760 358h3v1h-3zM761 357h1v3h-1zM768 358h3v1h-3zM769 357h1v3h-1zM776 358h3v1h-3zM777 357h1v3h-1zM784 358h3v1h-3zM785 357h1v3h-1zM792 358h3v1h-3zM793 357h1v3h-1zM800 358h3v1h-3zM801 357h1v3h-1zM872 358h3v1h-3zM873 357h1v3h-1zM1056 358h3v1h-3zM1057 357h1v3h-1zM1064 358h3v1h-3zM1065 357h1v3h-1zM144 371h3v1h-3zM145 370h1v3h-1zM152 371h3v1h-3zM153 370h1v3h-1zM160 371h3v1h-3zM161 370h1v3h-1zM168 371h3v1h-3zM169 370h1v3h-1zM176 371h3v1h-3zM177 370h1v3h-1zM184 371h3v1h-3zM185 370h1v3h-1zM192 371h3v1h-3zM193 370h1v3h-1zM208 371h3v1h-3zM209 370h1v3h-1zM216 371h3v1h-3zM217 370h1v3h-1zM672 371h3v1h-3zM673 370h1v3h-1zM712 371h3v1h-3zM713 370h1v3h-1zM720 371h3v1h-3zM721 370h1v3h-1zM728 371h3v1h-3zM729 370h1v3h-1zM736 371h3v1h-3zM737 370h1v3h-1zM744 371h3v1h-3zM745 370h1v3h-1zM752 371h3v1h-3zM753 370h1v3h-1zM760 371h3v1h-3zM761 370h1v3h-1zM768 371h3v1h-3zM769 370h1v3h-1zM776 371h3v1h-3zM777 370h1v3h-1zM784 371h3v1h-3zM785 370h1v3h-1zM792 371h3v1h-3zM793 370h1v3h-1zM800 371h3v1h-3zM801 370h1v3h-1zM872 371h3v1h-3zM873 370h1v3h-1zM976 371h3v1h-3zM977 370h1v3h-1zM984 371h3v1h-3zM985 370h1v3h-1zM1056 371h3v1h-3zM1057 370h1v3h-1zM1064 371h3v1h-3zM1065 370h1v3h-1zM144 384h3v1h-3zM145 383h1v3h-1zM152 384h3v1h-3zM153 383h1v3h-1zM208 384h3v1h-3zM209 383h1v3h-1zM216 384h3v1h-3zM217 383h1v3h-1zM672 384h3v1h-3zM673 383h1v3h-1zM712 384h3v1h-3zM713 383h1v3h-1zM720 384h3v1h-3zM721 383h1v3h-1zM728 384h3v1h-3zM729 383h1v3h-1zM736 384h3v1h-3zM737 383h1v3h-1zM744 384h3v1h-3zM745 383h1v3h-1zM752 384h3v1h-3zM753 383h1v3h-1zM760 384h3v1h-3zM761 383h1v3h-1zM768 384h3v1h-3zM769 383h1v3h-1zM776 384h3v1h-3zM777 383h1v3h-1zM784 384h3v1h-3zM785 383h1v3h-1zM792 384h3v1h-3zM793 383h1v3h-1zM800 384h3v1h-3zM801 383h1v3h-1zM872 384h3v1h-3zM873 383h1v3h-1zM1056 384h3v1h-3zM1057 383h1v3h-1zM1064 384h3v1h-3zM1065 383h1v3h-1zM144 397h3v1h-3zM145 396h1v3h-1zM152 397h3v1h-3zM153 396h1v3h-1zM160 397h3v1h-3zM161 396h1v3h-1zM168 397h3v1h-3zM169 396h1v3h-1zM208 397h3v1h-3zM209 396h1v3h-1zM216 397h3v1h-3zM217 396h1v3h-1zM672 397h3v1h-3zM673 396h1v3h-1zM712 397h3v1h-3zM713 396h1v3h-1zM720 397h3v1h-3zM721 396h1v3h-1zM728 397h3v1h-3zM729 396h1v3h-1zM736 397h3v1h-3zM737 396h1v3h-1zM744 397h3v1h-3zM745 396h1v3h-1zM752 397h3v1h-3zM753 396h1v3h-1zM760 397h3v1h-3zM761 396h1v3h-1zM768 397h3v1h-3zM769 396h1v3h-1zM776 397h3v1h-3zM777 396h1v3h-1zM784 397h3v1h-3zM785 396h1v3h-1zM792 397h3v1h-3zM793 396h1v3h-1zM800 397h3v1h-3zM801 396h1v3h-1zM904 397h3v1h-3zM905 396h1v3h-1zM1056 397h3v1h-3zM1057 396h1v3h-1zM1064 397h3v1h-3zM1065 396h1v3h-1zM144 410h3v1h-3zM145 409h1v3h-1zM152 410h3v1h-3zM153 409h1v3h-1zM160 410h3v1h-3zM161 409h1v3h-1zM168 410h3v1h-3zM169 409h1v3h-1zM176 410h3v1h-3zM177 409h1v3h-1zM184 410h3v1h-3zM185 409h1v3h-1zM192 410h3v1h-3zM193 409h1v3h-1zM200 410h3v1h-3zM201 409h1v3h-1zM208 410h3v1h-3zM209 409h1v3h-1zM216 410h3v1h-3zM217 409h1v3h-1zM416 410h3v1h-3zM417 409h1v3h-1zM672 410h3v1h-3zM673 409h1v3h-1zM712 410h3v1h-3zM713 409h1v3h-1zM720 410h3v1h-3zM721 409h1v3h-1zM728 410h3v1h-3zM729 409h1v3h-1zM736 410h3v1h-3zM737 409h1v3h-1zM744 410h3v1h-3zM745 409h1v3h-1zM752 410h3v1h-3zM753 409h1v3h-1zM760 410h3v1h-3zM761 409h1v3h-1zM768 410h3v1h-3zM769 409h1v3h-1zM776 410h3v1h-3zM777 409h1v3h-1zM784 410h3v1h-3zM785 409h1v3h-1zM792 410h3v1h-3zM793 409h1v3h-1zM800 410h3v1h-3zM801 409h1v3h-1zM872 410h3v1h-3zM873 409h1v3h-1zM1064 410h3v1h-3zM1065 409h1v3h-1zM144 423h3v1h-3zM145 422h1v3h-1zM152 423h3v1h-3zM153 422h1v3h-1zM160 423h3v1h-3zM161 422h1v3h-1zM168 423h3v1h-3zM169 422h1v3h-1zM176 423h3v1h-3zM177 422h1v3h-1zM184 423h3v1h-3zM185 422h1v3h-1zM192 423h3v1h-3zM193 422h1v3h-1zM200 423h3v1h-3zM201 422h1v3h-1zM208 423h3v1h-3zM209 422h1v3h-1zM216 423h3v1h-3zM217 422h1v3h-1zM672 423h3v1h-3zM673 422h1v3h-1zM712 423h3v1h-3zM713 422h1v3h-1zM720 423h3v1h-3zM721 422h1v3h-1zM728 423h3v1h-3zM729 422h1v3h-1zM736 423h3v1h-3zM737 422h1v3h-1zM744 423h3v1h-3zM745 422h1v3h-1zM752 423h3v1h-3zM753 422h1v3h-1zM760 423h3v1h-3zM761 422h1v3h-1zM768 423h3v1h-3zM769 422h1v3h-1zM776 423h3v1h-3zM777 422h1v3h-1zM784 423h3v1h-3zM785 422h1v3h-1zM792 423h3v1h-3zM793 422h1v3h-1zM800 423h3v1h-3zM801 422h1v3h-1zM872 423h3v1h-3zM873 422h1v3h-1zM1056 423h3v1h-3zM1057 422h1v3h-1zM1064 423h3v1h-3zM1065 422h1v3h-1zM143 42h6v1h-6zM151 42h6v1h-6zM159 42h6v1h-6zM167 42h6v1h-6zM191 42h6v1h-6zM199 42h6v1h-6zM207 42h6v1h-6zM215 42h6v1h-6zM223 42h6v1h-6zM231 42h6v1h-6zM239 42h6v1h-6zM247 42h6v1h-6zM271 42h6v1h-6zM279 42h6v1h-6zM287 42h6v1h-6zM295 42h6v1h-6zM303 42h6v1h-6zM311 42h6v1h-6zM319 42h6v1h-6zM327 42h6v1h-6zM351 42h6v1h-6zM359 42h6v1h-6zM367 42h6v1h-6zM375 42h6v1h-6zM383 42h6v1h-6zM391 42h6v1h-6zM399 42h6v1h-6zM407 42h6v1h-6zM431 42h6v1h-6zM439 42h6v1h-6zM447 42h6v1h-6zM455 42h6v1h-6zM463 42h6v1h-6zM471 42h6v1h-6zM479 42h6v1h-6zM511 42h6v1h-6zM519 42h6v1h-6zM527 42h6v1h-6zM535 42h6v1h-6zM543 42h6v1h-6zM551 42h6v1h-6zM559 42h6v1h-6zM591 42h6v1h-6zM599 42h6v1h-6zM607 42h6v1h-6zM615 42h6v1h-6zM623 42h6v1h-6zM631 42h6v1h-6zM639 42h6v1h-6zM671 42h6v1h-6zM679 42h6v1h-6zM687 42h6v1h-6zM695 42h6v1h-6zM703 42h6v1h-6zM711 42h6v1h-6zM719 42h6v1h-6zM751 42h6v1h-6zM759 42h6v1h-6zM767 42h6v1h-6zM775 42h6v1h-6zM783 42h6v1h-6zM791 42h6v1h-6zM799 42h6v1h-6zM831 42h6v1h-6zM839 42h6v1h-6zM847 42h6v1h-6zM855 42h6v1h-6zM863 42h6v1h-6zM871 42h6v1h-6zM879 42h6v1h-6zM911 42h6v1h-6zM919 42h6v1h-6zM927 42h6v1h-6zM935 42h6v1h-6zM943 42h6v1h-6zM951 42h6v1h-6zM959 42h6v1h-6zM991 42h6v1h-6zM999 42h6v1h-6zM1007 42h6v1h-6zM1015 42h6v1h-6zM1023 42h6v1h-6zM1031 42h6v1h-6zM1039 42h6v1h-6zM1071 42h6v1h-6zM1079 42h6v1h-6zM1087 42h6v1h-6zM1095 42h6v1h-6zM1103 42h6v1h-6zM1111 42h6v1h-6zM1119 42h6v1h-6zM1151 42h6v1h-6zM1159 42h6v1h-6zM30 73h7v1h-7zM38 64h1v9h-1zM44 64h1v9h-1zM39 66h1v1h-1zM40 67h1v1h-1zM41 68h1v2h-1zM42 67h1v1h-1zM43 66h1v1h-1zM206 64h1v9h-1zM212 64h1v9h-1zM207 66h1v1h-1zM208 67h1v1h-1zM209 68h1v2h-1zM210 67h1v1h-1zM211 66h1v1h-1zM249 64h1v1h-1zM250 64h1v1h-1zM248 65h1v1h-1zM251 65h1v1h-1zM247 66h1v7h-1zM252 66h1v7h-1zM248 69h1v1h-1zM249 69h1v1h-1zM250 69h1v1h-1zM251 69h1v1h-1zM289 64h1v1h-1zM290 64h1v1h-1zM288 65h1v1h-1zM291 65h1v1h-1zM287 66h1v7h-1zM292 66h1v7h-1zM288 69h1v1h-1zM289 69h1v1h-1zM290 69h1v1h-1zM291 69h1v1h-1zM297 64h1v1h-1zM298 64h1v1h-1zM296 65h1v1h-1zM299 65h1v1h-1zM295 66h1v7h-1zM300 66h1v7h-1zM296 69h1v1h-1zM297 69h1v1h-1zM298 69h1v1h-1zM299 69h1v1h-1zM321 64h1v1h-1zM322 64h1v1h-1zM320 65h1v1h-1zM323 65h1v1h-1zM319 66h1v7h-1zM324 66h1v7h-1zM320 69h1v1h-1zM321 69h1v1h-1zM322 69h1v1h-1zM323 69h1v1h-1zM369 64h1v1h-1zM370 64h1v1h-1zM368 65h1v1h-1zM371 65h1v1h-1zM367 66h1v7h-1zM372 66h1v7h-1zM368 69h1v1h-1zM369 69h1v1h-1zM370 69h1v1h-1zM371 69h1v1h-1zM377 64h1v1h-1zM378 64h1v1h-1zM376 65h1v1h-1zM379 65h1v1h-1zM375 66h1v7h-1zM380 66h1v7h-1zM376 69h1v1h-1zM377 69h1v1h-1zM378 69h1v1h-1zM379 69h1v1h-1zM401 64h1v1h-1zM402 64h1v1h-1zM400 65h1v1h-1zM403 65h1v1h-1zM399 66h1v7h-1zM404 66h1v7h-1zM400 69h1v1h-1zM401 69h1v1h-1zM402 69h1v1h-1zM403 69h1v1h-1zM433 64h1v1h-1zM434 64h1v1h-1zM432 65h1v1h-1zM435 65h1v1h-1zM431 66h1v7h-1zM436 66h1v7h-1zM432 69h1v1h-1zM433 69h1v1h-1zM434 69h1v1h-1zM435 69h1v1h-1zM446 64h1v8h-1zM452 64h1v8h-1zM447 72h1v1h-1zM448 71h1v1h-1zM449 68h1v3h-1zM450 71h1v1h-1zM451 72h1v1h-1zM494 64h1v9h-1zM500 64h1v9h-1zM495 66h1v1h-1zM496 67h1v1h-1zM497 68h1v2h-1zM498 67h1v1h-1zM499 66h1v1h-1zM551 64h1v9h-1zM556 64h1v9h-1zM552 66h1v1h-1zM553 67h1v1h-1zM554 68h1v1h-1zM555 69h1v1h-1zM657 64h1v1h-1zM658 64h1v1h-1zM656 65h1v1h-1zM659 65h1v1h-1zM655 66h1v7h-1zM660 66h1v7h-1zM656 69h1v1h-1zM657 69h1v1h-1zM658 69h1v1h-1zM659 69h1v1h-1zM665 64h1v1h-1zM666 64h1v1h-1zM664 65h1v1h-1zM667 65h1v1h-1zM663 66h1v7h-1zM668 66h1v7h-1zM664 69h1v1h-1zM665 69h1v1h-1zM666 69h1v1h-1zM667 69h1v1h-1zM806 64h1v9h-1zM812 64h1v9h-1zM807 66h1v1h-1zM808 67h1v1h-1zM809 68h1v2h-1zM810 67h1v1h-1zM811 66h1v1h-1zM846 64h1v9h-1zM852 64h1v9h-1zM847 66h1v1h-1zM848 67h1v1h-1zM849 68h1v2h-1zM850 67h1v1h-1zM851 66h1v1h-1zM879 64h1v9h-1zM884 64h1v9h-1zM880 66h1v1h-1zM881 67h1v1h-1zM882 68h1v1h-1zM883 69h1v1h-1zM910 64h1v8h-1zM916 64h1v8h-1zM911 72h1v1h-1zM912 71h1v1h-1zM913 68h1v3h-1zM914 71h1v1h-1zM915 72h1v1h-1zM921 64h1v1h-1zM922 64h1v1h-1zM920 65h1v1h-1zM923 65h1v1h-1zM919 66h1v7h-1zM924 66h1v7h-1zM920 69h1v1h-1zM921 69h1v1h-1zM922 69h1v1h-1zM923 69h1v1h-1zM953 64h1v1h-1zM954 64h1v1h-1zM952 65h1v1h-1zM955 65h1v1h-1zM951 66h1v7h-1zM956 66h1v7h-1zM952 69h1v1h-1zM953 69h1v1h-1zM954 69h1v1h-1zM955 69h1v1h-1zM969 64h1v1h-1zM970 64h1v1h-1zM968 65h1v1h-1zM971 65h1v1h-1zM967 66h1v7h-1zM972 66h1v7h-1zM968 69h1v1h-1zM969 69h1v1h-1zM970 69h1v1h-1zM971 69h1v1h-1zM985 64h1v1h-1zM986 64h1v1h-1zM984 65h1v1h-1zM987 65h1v1h-1zM983 66h1v7h-1zM988 66h1v7h-1zM984 69h1v1h-1zM985 69h1v1h-1zM986 69h1v1h-1zM987 69h1v1h-1zM999 64h1v9h-1zM1004 64h1v9h-1zM1000 66h1v1h-1zM1001 67h1v1h-1zM1002 68h1v1h-1zM1003 69h1v1h-1zM1041 64h1v1h-1zM1042 64h1v1h-1zM1040 65h1v1h-1zM1043 65h1v1h-1zM1039 66h1v7h-1zM1044 66h1v7h-1zM1040 69h1v1h-1zM1041 69h1v1h-1zM1042 69h1v1h-1zM1043 69h1v1h-1zM1073 64h1v1h-1zM1074 64h1v1h-1zM1072 65h1v1h-1zM1075 65h1v1h-1zM1071 66h1v7h-1zM1076 66h1v7h-1zM1072 69h1v1h-1zM1073 69h1v1h-1zM1074 69h1v1h-1zM1075 69h1v1h-1zM1095 64h1v9h-1zM1100 64h1v9h-1zM1096 66h1v1h-1zM1097 67h1v1h-1zM1098 68h1v1h-1zM1099 69h1v1h-1zM1137 64h1v1h-1zM1138 64h1v1h-1zM1136 65h1v1h-1zM1139 65h1v1h-1zM1135 66h1v7h-1zM1140 66h1v7h-1zM1136 69h1v1h-1zM1137 69h1v1h-1zM1138 69h1v1h-1zM1139 69h1v1h-1zM30 86h7v1h-7zM38 77h1v9h-1zM44 77h1v9h-1zM39 79h1v1h-1zM40 80h1v1h-1zM41 81h1v2h-1zM42 80h1v1h-1zM43 79h1v1h-1zM166 77h1v9h-1zM172 77h1v9h-1zM167 79h1v1h-1zM168 80h1v1h-1zM169 81h1v2h-1zM170 80h1v1h-1zM171 79h1v1h-1zM177 77h1v1h-1zM178 77h1v1h-1zM176 78h1v1h-1zM179 78h1v1h-1zM175 79h1v7h-1zM180 79h1v7h-1zM176 82h1v1h-1zM177 82h1v1h-1zM178 82h1v1h-1zM179 82h1v1h-1zM249 77h1v1h-1zM250 77h1v1h-1zM248 78h1v1h-1zM251 78h1v1h-1zM247 79h1v7h-1zM252 79h1v7h-1zM248 82h1v1h-1zM249 82h1v1h-1zM250 82h1v1h-1zM251 82h1v1h-1zM289 77h1v1h-1zM290 77h1v1h-1zM288 78h1v1h-1zM291 78h1v1h-1zM287 79h1v7h-1zM292 79h1v7h-1zM288 82h1v1h-1zM289 82h1v1h-1zM290 82h1v1h-1zM291 82h1v1h-1zM297 77h1v1h-1zM298 77h1v1h-1zM296 78h1v1h-1zM299 78h1v1h-1zM295 79h1v7h-1zM300 79h1v7h-1zM296 82h1v1h-1zM297 82h1v1h-1zM298 82h1v1h-1zM299 82h1v1h-1zM321 77h1v1h-1zM322 77h1v1h-1zM320 78h1v1h-1zM323 78h1v1h-1zM319 79h1v7h-1zM324 79h1v7h-1zM320 82h1v1h-1zM321 82h1v1h-1zM322 82h1v1h-1zM323 82h1v1h-1zM345 77h1v1h-1zM346 77h1v1h-1zM344 78h1v1h-1zM347 78h1v1h-1zM343 79h1v7h-1zM348 79h1v7h-1zM344 82h1v1h-1zM345 82h1v1h-1zM346 82h1v1h-1zM347 82h1v1h-1zM369 77h1v1h-1zM370 77h1v1h-1zM368 78h1v1h-1zM371 78h1v1h-1zM367 79h1v7h-1zM372 79h1v7h-1zM368 82h1v1h-1zM369 82h1v1h-1zM370 82h1v1h-1zM371 82h1v1h-1zM377 77h1v1h-1zM378 77h1v1h-1zM376 78h1v1h-1zM379 78h1v1h-1zM375 79h1v7h-1zM380 79h1v7h-1zM376 82h1v1h-1zM377 82h1v1h-1zM378 82h1v1h-1zM379 82h1v1h-1zM385 77h1v1h-1zM386 77h1v1h-1zM384 78h1v1h-1zM387 78h1v1h-1zM383 79h1v7h-1zM388 79h1v7h-1zM384 82h1v1h-1zM385 82h1v1h-1zM386 82h1v1h-1zM387 82h1v1h-1zM399 77h1v9h-1zM404 77h1v9h-1zM400 79h1v1h-1zM401 80h1v1h-1zM402 81h1v1h-1zM403 82h1v1h-1zM433 77h1v1h-1zM434 77h1v1h-1zM432 78h1v1h-1zM435 78h1v1h-1zM431 79h1v7h-1zM436 79h1v7h-1zM432 82h1v1h-1zM433 82h1v1h-1zM434 82h1v1h-1zM435 82h1v1h-1zM446 77h1v8h-1zM452 77h1v8h-1zM447 85h1v1h-1zM448 84h1v1h-1zM449 81h1v3h-1zM450 84h1v1h-1zM451 85h1v1h-1zM494 77h1v9h-1zM500 77h1v9h-1zM495 79h1v1h-1zM496 80h1v1h-1zM497 81h1v2h-1zM498 80h1v1h-1zM499 79h1v1h-1zM551 77h1v9h-1zM556 77h1v9h-1zM552 79h1v1h-1zM553 80h1v1h-1zM554 81h1v1h-1zM555 82h1v1h-1zM657 77h1v1h-1zM658 77h1v1h-1zM656 78h1v1h-1zM659 78h1v1h-1zM655 79h1v7h-1zM660 79h1v7h-1zM656 82h1v1h-1zM657 82h1v1h-1zM658 82h1v1h-1zM659 82h1v1h-1zM806 77h1v9h-1zM812 77h1v9h-1zM807 79h1v1h-1zM808 80h1v1h-1zM809 81h1v2h-1zM810 80h1v1h-1zM811 79h1v1h-1zM846 77h1v9h-1zM852 77h1v9h-1zM847 79h1v1h-1zM848 80h1v1h-1zM849 81h1v2h-1zM850 80h1v1h-1zM851 79h1v1h-1zM879 77h1v9h-1zM884 77h1v9h-1zM880 79h1v1h-1zM881 80h1v1h-1zM882 81h1v1h-1zM883 82h1v1h-1zM910 77h1v8h-1zM916 77h1v8h-1zM911 85h1v1h-1zM912 84h1v1h-1zM913 81h1v3h-1zM914 84h1v1h-1zM915 85h1v1h-1zM921 77h1v1h-1zM922 77h1v1h-1zM920 78h1v1h-1zM923 78h1v1h-1zM919 79h1v7h-1zM924 79h1v7h-1zM920 82h1v1h-1zM921 82h1v1h-1zM922 82h1v1h-1zM923 82h1v1h-1zM953 77h1v1h-1zM954 77h1v1h-1zM952 78h1v1h-1zM955 78h1v1h-1zM951 79h1v7h-1zM956 79h1v7h-1zM952 82h1v1h-1zM953 82h1v1h-1zM954 82h1v1h-1zM955 82h1v1h-1zM969 77h1v1h-1zM970 77h1v1h-1zM968 78h1v1h-1zM971 78h1v1h-1zM967 79h1v7h-1zM972 79h1v7h-1zM968 82h1v1h-1zM969 82h1v1h-1zM970 82h1v1h-1zM971 82h1v1h-1zM985 77h1v1h-1zM986 77h1v1h-1zM984 78h1v1h-1zM987 78h1v1h-1zM983 79h1v7h-1zM988 79h1v7h-1zM984 82h1v1h-1zM985 82h1v1h-1zM986 82h1v1h-1zM987 82h1v1h-1zM999 77h1v9h-1zM1004 77h1v9h-1zM1000 79h1v1h-1zM1001 80h1v1h-1zM1002 81h1v1h-1zM1003 82h1v1h-1zM1041 77h1v1h-1zM1042 77h1v1h-1zM1040 78h1v1h-1zM1043 78h1v1h-1zM1039 79h1v7h-1zM1044 79h1v7h-1zM1040 82h1v1h-1zM1041 82h1v1h-1zM1042 82h1v1h-1zM1043 82h1v1h-1zM1073 77h1v1h-1zM1074 77h1v1h-1zM1072 78h1v1h-1zM1075 78h1v1h-1zM1071 79h1v7h-1zM1076 79h1v7h-1zM1072 82h1v1h-1zM1073 82h1v1h-1zM1074 82h1v1h-1zM1075 82h1v1h-1zM1095 77h1v9h-1zM1100 77h1v9h-1zM1096 79h1v1h-1zM1097 80h1v1h-1zM1098 81h1v1h-1zM1099 82h1v1h-1zM1137 77h1v1h-1zM1138 77h1v1h-1zM1136 78h1v1h-1zM1139 78h1v1h-1zM1135 79h1v7h-1zM1140 79h1v7h-1zM1136 82h1v1h-1zM1137 82h1v1h-1zM1138 82h1v1h-1zM1139 82h1v1h-1zM30 99h7v1h-7zM206 90h1v9h-1zM212 90h1v9h-1zM207 92h1v1h-1zM208 93h1v1h-1zM209 94h1v2h-1zM210 93h1v1h-1zM211 92h1v1h-1zM217 90h1v1h-1zM218 90h1v1h-1zM216 91h1v1h-1zM219 91h1v1h-1zM215 92h1v7h-1zM220 92h1v7h-1zM216 95h1v1h-1zM217 95h1v1h-1zM218 95h1v1h-1zM219 95h1v1h-1zM225 90h1v1h-1zM226 90h1v1h-1zM224 91h1v1h-1zM227 91h1v1h-1zM223 92h1v7h-1zM228 92h1v7h-1zM224 95h1v1h-1zM225 95h1v1h-1zM226 95h1v1h-1zM227 95h1v1h-1zM247 90h1v9h-1zM252 90h1v9h-1zM248 92h1v1h-1zM249 93h1v1h-1zM250 94h1v1h-1zM251 95h1v1h-1zM297 90h1v1h-1zM298 90h1v1h-1zM296 91h1v1h-1zM299 91h1v1h-1zM295 92h1v7h-1zM300 92h1v7h-1zM296 95h1v1h-1zM297 95h1v1h-1zM298 95h1v1h-1zM299 95h1v1h-1zM321 90h1v1h-1zM322 90h1v1h-1zM320 91h1v1h-1zM323 91h1v1h-1zM319 92h1v7h-1zM324 92h1v7h-1zM320 95h1v1h-1zM321 95h1v1h-1zM322 95h1v1h-1zM323 95h1v1h-1zM345 90h1v1h-1zM346 90h1v1h-1zM344 91h1v1h-1zM347 91h1v1h-1zM343 92h1v7h-1zM348 92h1v7h-1zM344 95h1v1h-1zM345 95h1v1h-1zM346 95h1v1h-1zM347 95h1v1h-1zM369 90h1v1h-1zM370 90h1v1h-1zM368 91h1v1h-1zM371 91h1v1h-1zM367 92h1v7h-1zM372 92h1v7h-1zM368 95h1v1h-1zM369 95h1v1h-1zM370 95h1v1h-1zM371 95h1v1h-1zM385 90h1v1h-1zM386 90h1v1h-1zM384 91h1v1h-1zM387 91h1v1h-1zM383 92h1v7h-1zM388 92h1v7h-1zM384 95h1v1h-1zM385 95h1v1h-1zM386 95h1v1h-1zM387 95h1v1h-1zM433 90h1v1h-1zM434 90h1v1h-1zM432 91h1v1h-1zM435 91h1v1h-1zM431 92h1v7h-1zM436 92h1v7h-1zM432 95h1v1h-1zM433 95h1v1h-1zM434 95h1v1h-1zM435 95h1v1h-1zM446 90h1v8h-1zM452 90h1v8h-1zM447 98h1v1h-1zM448 97h1v1h-1zM449 94h1v3h-1zM450 97h1v1h-1zM451 98h1v1h-1zM494 90h1v9h-1zM500 90h1v9h-1zM495 92h1v1h-1zM496 93h1v1h-1zM497 94h1v2h-1zM498 93h1v1h-1zM499 92h1v1h-1zM511 90h1v9h-1zM516 90h1v9h-1zM512 92h1v1h-1zM513 93h1v1h-1zM514 94h1v1h-1zM515 95h1v1h-1zM551 90h1v9h-1zM556 90h1v9h-1zM552 92h1v1h-1zM553 93h1v1h-1zM554 94h1v1h-1zM555 95h1v1h-1zM649 90h1v1h-1zM650 90h1v1h-1zM648 91h1v1h-1zM651 91h1v1h-1zM647 92h1v7h-1zM652 92h1v7h-1zM648 95h1v1h-1zM649 95h1v1h-1zM650 95h1v1h-1zM651 95h1v1h-1zM665 90h1v1h-1zM666 90h1v1h-1zM664 91h1v1h-1zM667 91h1v1h-1zM663 92h1v7h-1zM668 92h1v7h-1zM664 95h1v1h-1zM665 95h1v1h-1zM666 95h1v1h-1zM667 95h1v1h-1zM846 90h1v9h-1zM852 90h1v9h-1zM847 92h1v1h-1zM848 93h1v1h-1zM849 94h1v2h-1zM850 93h1v1h-1zM851 92h1v1h-1zM881 90h1v1h-1zM882 90h1v1h-1zM880 91h1v1h-1zM883 91h1v1h-1zM879 92h1v7h-1zM884 92h1v7h-1zM880 95h1v1h-1zM881 95h1v1h-1zM882 95h1v1h-1zM883 95h1v1h-1zM910 90h1v8h-1zM916 90h1v8h-1zM911 98h1v1h-1zM912 97h1v1h-1zM913 94h1v3h-1zM914 97h1v1h-1zM915 98h1v1h-1zM921 90h1v1h-1zM922 90h1v1h-1zM920 91h1v1h-1zM923 91h1v1h-1zM919 92h1v7h-1zM924 92h1v7h-1zM920 95h1v1h-1zM921 95h1v1h-1zM922 95h1v1h-1zM923 95h1v1h-1zM969 90h1v1h-1zM970 90h1v1h-1zM968 91h1v1h-1zM971 91h1v1h-1zM967 92h1v7h-1zM972 92h1v7h-1zM968 95h1v1h-1zM969 95h1v1h-1zM970 95h1v1h-1zM971 95h1v1h-1zM985 90h1v1h-1zM986 90h1v1h-1zM984 91h1v1h-1zM987 91h1v1h-1zM983 92h1v7h-1zM988 92h1v7h-1zM984 95h1v1h-1zM985 95h1v1h-1zM986 95h1v1h-1zM987 95h1v1h-1zM1041 90h1v1h-1zM1042 90h1v1h-1zM1040 91h1v1h-1zM1043 91h1v1h-1zM1039 92h1v7h-1zM1044 92h1v7h-1zM1040 95h1v1h-1zM1041 95h1v1h-1zM1042 95h1v1h-1zM1043 95h1v1h-1zM1073 90h1v1h-1zM1074 90h1v1h-1zM1072 91h1v1h-1zM1075 91h1v1h-1zM1071 92h1v7h-1zM1076 92h1v7h-1zM1072 95h1v1h-1zM1073 95h1v1h-1zM1074 95h1v1h-1zM1075 95h1v1h-1zM1081 90h1v1h-1zM1082 90h1v1h-1zM1080 91h1v1h-1zM1083 91h1v1h-1zM1079 92h1v7h-1zM1084 92h1v7h-1zM1080 95h1v1h-1zM1081 95h1v1h-1zM1082 95h1v1h-1zM1083 95h1v1h-1zM1089 90h1v1h-1zM1090 90h1v1h-1zM1088 91h1v1h-1zM1091 91h1v1h-1zM1087 92h1v7h-1zM1092 92h1v7h-1zM1088 95h1v1h-1zM1089 95h1v1h-1zM1090 95h1v1h-1zM1091 95h1v1h-1zM1097 90h1v1h-1zM1098 90h1v1h-1zM1096 91h1v1h-1zM1099 91h1v1h-1zM1095 92h1v7h-1zM1100 92h1v7h-1zM1096 95h1v1h-1zM1097 95h1v1h-1zM1098 95h1v1h-1zM1099 95h1v1h-1zM1137 90h1v1h-1zM1138 90h1v1h-1zM1136 91h1v1h-1zM1139 91h1v1h-1zM1135 92h1v7h-1zM1140 92h1v7h-1zM1136 95h1v1h-1zM1137 95h1v1h-1zM1138 95h1v1h-1zM1139 95h1v1h-1zM30 112h7v1h-7zM57 103h1v1h-1zM58 103h1v1h-1zM56 104h1v1h-1zM59 104h1v1h-1zM55 105h1v7h-1zM60 105h1v7h-1zM56 108h1v1h-1zM57 108h1v1h-1zM58 108h1v1h-1zM59 108h1v1h-1zM198 103h1v9h-1zM204 103h1v9h-1zM199 105h1v1h-1zM200 106h1v1h-1zM201 107h1v2h-1zM202 106h1v1h-1zM203 105h1v1h-1zM249 103h1v1h-1zM250 103h1v1h-1zM248 104h1v1h-1zM251 104h1v1h-1zM247 105h1v7h-1zM252 105h1v7h-1zM248 108h1v1h-1zM249 108h1v1h-1zM250 108h1v1h-1zM251 108h1v1h-1zM289 103h1v1h-1zM290 103h1v1h-1zM288 104h1v1h-1zM291 104h1v1h-1zM287 105h1v7h-1zM292 105h1v7h-1zM288 108h1v1h-1zM289 108h1v1h-1zM290 108h1v1h-1zM291 108h1v1h-1zM321 103h1v1h-1zM322 103h1v1h-1zM320 104h1v1h-1zM323 104h1v1h-1zM319 105h1v7h-1zM324 105h1v7h-1zM320 108h1v1h-1zM321 108h1v1h-1zM322 108h1v1h-1zM323 108h1v1h-1zM327 103h1v9h-1zM332 103h1v9h-1zM328 105h1v1h-1zM329 106h1v1h-1zM330 107h1v1h-1zM331 108h1v1h-1zM407 103h1v9h-1zM412 103h1v9h-1zM408 105h1v1h-1zM409 106h1v1h-1zM410 107h1v1h-1zM411 108h1v1h-1zM417 103h1v1h-1zM418 103h1v1h-1zM416 104h1v1h-1zM419 104h1v1h-1zM415 105h1v7h-1zM420 105h1v7h-1zM416 108h1v1h-1zM417 108h1v1h-1zM418 108h1v1h-1zM419 108h1v1h-1zM433 103h1v1h-1zM434 103h1v1h-1zM432 104h1v1h-1zM435 104h1v1h-1zM431 105h1v7h-1zM436 105h1v7h-1zM432 108h1v1h-1zM433 108h1v1h-1zM434 108h1v1h-1zM435 108h1v1h-1zM446 103h1v8h-1zM452 103h1v8h-1zM447 111h1v1h-1zM448 110h1v1h-1zM449 107h1v3h-1zM450 110h1v1h-1zM451 111h1v1h-1zM494 103h1v9h-1zM500 103h1v9h-1zM495 105h1v1h-1zM496 106h1v1h-1zM497 107h1v2h-1zM498 106h1v1h-1zM499 105h1v1h-1zM551 103h1v9h-1zM556 103h1v9h-1zM552 105h1v1h-1zM553 106h1v1h-1zM554 107h1v1h-1zM555 108h1v1h-1zM721 103h1v1h-1zM722 103h1v1h-1zM720 104h1v1h-1zM723 104h1v1h-1zM719 105h1v7h-1zM724 105h1v7h-1zM720 108h1v1h-1zM721 108h1v1h-1zM722 108h1v1h-1zM723 108h1v1h-1zM735 103h1v9h-1zM740 103h1v9h-1zM736 105h1v1h-1zM737 106h1v1h-1zM738 107h1v1h-1zM739 108h1v1h-1zM793 103h1v1h-1zM794 103h1v1h-1zM792 104h1v1h-1zM795 104h1v1h-1zM791 105h1v7h-1zM796 105h1v7h-1zM792 108h1v1h-1zM793 108h1v1h-1zM794 108h1v1h-1zM795 108h1v1h-1zM838 103h1v9h-1zM844 103h1v9h-1zM839 105h1v1h-1zM840 106h1v1h-1zM841 107h1v2h-1zM842 106h1v1h-1zM843 105h1v1h-1zM846 103h1v9h-1zM852 103h1v9h-1zM847 105h1v1h-1zM848 106h1v1h-1zM849 107h1v2h-1zM850 106h1v1h-1zM851 105h1v1h-1zM879 103h1v9h-1zM884 103h1v9h-1zM880 105h1v1h-1zM881 106h1v1h-1zM882 107h1v1h-1zM883 108h1v1h-1zM910 103h1v8h-1zM916 103h1v8h-1zM911 111h1v1h-1zM912 110h1v1h-1zM913 107h1v3h-1zM914 110h1v1h-1zM915 111h1v1h-1zM953 103h1v1h-1zM954 103h1v1h-1zM952 104h1v1h-1zM955 104h1v1h-1zM951 105h1v7h-1zM956 105h1v7h-1zM952 108h1v1h-1zM953 108h1v1h-1zM954 108h1v1h-1zM955 108h1v1h-1zM985 103h1v1h-1zM986 103h1v1h-1zM984 104h1v1h-1zM987 104h1v1h-1zM983 105h1v7h-1zM988 105h1v7h-1zM984 108h1v1h-1zM985 108h1v1h-1zM986 108h1v1h-1zM987 108h1v1h-1zM1073 103h1v1h-1zM1074 103h1v1h-1zM1072 104h1v1h-1zM1075 104h1v1h-1zM1071 105h1v7h-1zM1076 105h1v7h-1zM1072 108h1v1h-1zM1073 108h1v1h-1zM1074 108h1v1h-1zM1075 108h1v1h-1zM30 125h7v1h-7zM169 116h1v1h-1zM170 116h1v1h-1zM168 117h1v1h-1zM171 117h1v1h-1zM167 118h1v7h-1zM172 118h1v7h-1zM168 121h1v1h-1zM169 121h1v1h-1zM170 121h1v1h-1zM171 121h1v1h-1zM174 116h1v9h-1zM180 116h1v9h-1zM175 118h1v1h-1zM176 119h1v1h-1zM177 120h1v2h-1zM178 119h1v1h-1zM179 118h1v1h-1zM249 116h1v1h-1zM250 116h1v1h-1zM248 117h1v1h-1zM251 117h1v1h-1zM247 118h1v7h-1zM252 118h1v7h-1zM248 121h1v1h-1zM249 121h1v1h-1zM250 121h1v1h-1zM251 121h1v1h-1zM278 116h1v9h-1zM284 116h1v9h-1zM279 118h1v1h-1zM280 119h1v1h-1zM281 120h1v2h-1zM282 119h1v1h-1zM283 118h1v1h-1zM297 116h1v1h-1zM298 116h1v1h-1zM296 117h1v1h-1zM299 117h1v1h-1zM295 118h1v7h-1zM300 118h1v7h-1zM296 121h1v1h-1zM297 121h1v1h-1zM298 121h1v1h-1zM299 121h1v1h-1zM321 116h1v1h-1zM322 116h1v1h-1zM320 117h1v1h-1zM323 117h1v1h-1zM319 118h1v7h-1zM324 118h1v7h-1zM320 121h1v1h-1zM321 121h1v1h-1zM322 121h1v1h-1zM323 121h1v1h-1zM369 116h1v1h-1zM370 116h1v1h-1zM368 117h1v1h-1zM371 117h1v1h-1zM367 118h1v7h-1zM372 118h1v7h-1zM368 121h1v1h-1zM369 121h1v1h-1zM370 121h1v1h-1zM371 121h1v1h-1zM383 116h1v9h-1zM388 116h1v9h-1zM384 118h1v1h-1zM385 119h1v1h-1zM386 120h1v1h-1zM387 121h1v1h-1zM433 116h1v1h-1zM434 116h1v1h-1zM432 117h1v1h-1zM435 117h1v1h-1zM431 118h1v7h-1zM436 118h1v7h-1zM432 121h1v1h-1zM433 121h1v1h-1zM434 121h1v1h-1zM435 121h1v1h-1zM494 116h1v9h-1zM500 116h1v9h-1zM495 118h1v1h-1zM496 119h1v1h-1zM497 120h1v2h-1zM498 119h1v1h-1zM499 118h1v1h-1zM551 116h1v9h-1zM556 116h1v9h-1zM552 118h1v1h-1zM553 119h1v1h-1zM554 120h1v1h-1zM555 121h1v1h-1zM625 116h1v1h-1zM626 116h1v1h-1zM624 117h1v1h-1zM627 117h1v1h-1zM623 118h1v7h-1zM628 118h1v7h-1zM624 121h1v1h-1zM625 121h1v1h-1zM626 121h1v1h-1zM627 121h1v1h-1zM633 116h1v1h-1zM634 116h1v1h-1zM632 117h1v1h-1zM635 117h1v1h-1zM631 118h1v7h-1zM636 118h1v7h-1zM632 121h1v1h-1zM633 121h1v1h-1zM634 121h1v1h-1zM635 121h1v1h-1zM647 116h1v9h-1zM652 116h1v9h-1zM648 118h1v1h-1zM649 119h1v1h-1zM650 120h1v1h-1zM651 121h1v1h-1zM841 116h1v1h-1zM842 116h1v1h-1zM840 117h1v1h-1zM843 117h1v1h-1zM839 118h1v7h-1zM844 118h1v7h-1zM840 121h1v1h-1zM841 121h1v1h-1zM842 121h1v1h-1zM843 121h1v1h-1zM846 116h1v9h-1zM852 116h1v9h-1zM847 118h1v1h-1zM848 119h1v1h-1zM849 120h1v2h-1zM850 119h1v1h-1zM851 118h1v1h-1zM937 116h1v1h-1zM938 116h1v1h-1zM936 117h1v1h-1zM939 117h1v1h-1zM935 118h1v7h-1zM940 118h1v7h-1zM936 121h1v1h-1zM937 121h1v1h-1zM938 121h1v1h-1zM939 121h1v1h-1zM969 116h1v1h-1zM970 116h1v1h-1zM968 117h1v1h-1zM971 117h1v1h-1zM967 118h1v7h-1zM972 118h1v7h-1zM968 121h1v1h-1zM969 121h1v1h-1zM970 121h1v1h-1zM971 121h1v1h-1zM985 116h1v1h-1zM986 116h1v1h-1zM984 117h1v1h-1zM987 117h1v1h-1zM983 118h1v7h-1zM988 118h1v7h-1zM984 121h1v1h-1zM985 121h1v1h-1zM986 121h1v1h-1zM987 121h1v1h-1zM1073 116h1v1h-1zM1074 116h1v1h-1zM1072 117h1v1h-1zM1075 117h1v1h-1zM1071 118h1v7h-1zM1076 118h1v7h-1zM1072 121h1v1h-1zM1073 121h1v1h-1zM1074 121h1v1h-1zM1075 121h1v1h-1zM1081 116h1v1h-1zM1082 116h1v1h-1zM1080 117h1v1h-1zM1083 117h1v1h-1zM1079 118h1v7h-1zM1084 118h1v7h-1zM1080 121h1v1h-1zM1081 121h1v1h-1zM1082 121h1v1h-1zM1083 121h1v1h-1zM1095 116h1v9h-1zM1100 116h1v9h-1zM1096 118h1v1h-1zM1097 119h1v1h-1zM1098 120h1v1h-1zM1099 121h1v1h-1zM30 138h7v1h-7zM62 129h1v9h-1zM68 129h1v9h-1zM63 131h1v1h-1zM64 132h1v1h-1zM65 133h1v2h-1zM66 132h1v1h-1zM67 131h1v1h-1zM174 129h1v9h-1zM180 129h1v9h-1zM175 131h1v1h-1zM176 132h1v1h-1zM177 133h1v2h-1zM178 132h1v1h-1zM179 131h1v1h-1zM249 129h1v1h-1zM250 129h1v1h-1zM248 130h1v1h-1zM251 130h1v1h-1zM247 131h1v7h-1zM252 131h1v7h-1zM248 134h1v1h-1zM249 134h1v1h-1zM250 134h1v1h-1zM251 134h1v1h-1zM278 129h1v9h-1zM284 129h1v9h-1zM279 131h1v1h-1zM280 132h1v1h-1zM281 133h1v2h-1zM282 132h1v1h-1zM283 131h1v1h-1zM297 129h1v1h-1zM298 129h1v1h-1zM296 130h1v1h-1zM299 130h1v1h-1zM295 131h1v7h-1zM300 131h1v7h-1zM296 134h1v1h-1zM297 134h1v1h-1zM298 134h1v1h-1zM299 134h1v1h-1zM321 129h1v1h-1zM322 129h1v1h-1zM320 130h1v1h-1zM323 130h1v1h-1zM319 131h1v7h-1zM324 131h1v7h-1zM320 134h1v1h-1zM321 134h1v1h-1zM322 134h1v1h-1zM323 134h1v1h-1zM361 129h1v1h-1zM362 129h1v1h-1zM360 130h1v1h-1zM363 130h1v1h-1zM359 131h1v7h-1zM364 131h1v7h-1zM360 134h1v1h-1zM361 134h1v1h-1zM362 134h1v1h-1zM363 134h1v1h-1zM369 129h1v1h-1zM370 129h1v1h-1zM368 130h1v1h-1zM371 130h1v1h-1zM367 131h1v7h-1zM372 131h1v7h-1zM368 134h1v1h-1zM369 134h1v1h-1zM370 134h1v1h-1zM371 134h1v1h-1zM383 129h1v9h-1zM388 129h1v9h-1zM384 131h1v1h-1zM385 132h1v1h-1zM386 133h1v1h-1zM387 134h1v1h-1zM433 129h1v1h-1zM434 129h1v1h-1zM432 130h1v1h-1zM435 130h1v1h-1zM431 131h1v7h-1zM436 131h1v7h-1zM432 134h1v1h-1zM433 134h1v1h-1zM434 134h1v1h-1zM435 134h1v1h-1zM439 129h1v9h-1zM444 129h1v9h-1zM440 131h1v1h-1zM441 132h1v1h-1zM442 133h1v1h-1zM443 134h1v1h-1zM494 129h1v9h-1zM500 129h1v9h-1zM495 131h1v1h-1zM496 132h1v1h-1zM497 133h1v2h-1zM498 132h1v1h-1zM499 131h1v1h-1zM551 129h1v9h-1zM556 129h1v9h-1zM552 131h1v1h-1zM553 132h1v1h-1zM554 133h1v1h-1zM555 134h1v1h-1zM625 129h1v1h-1zM626 129h1v1h-1zM624 130h1v1h-1zM627 130h1v1h-1zM623 131h1v7h-1zM628 131h1v7h-1zM624 134h1v1h-1zM625 134h1v1h-1zM626 134h1v1h-1zM627 134h1v1h-1zM633 129h1v1h-1zM634 129h1v1h-1zM632 130h1v1h-1zM635 130h1v1h-1zM631 131h1v7h-1zM636 131h1v7h-1zM632 134h1v1h-1zM633 134h1v1h-1zM634 134h1v1h-1zM635 134h1v1h-1zM647 129h1v9h-1zM652 129h1v9h-1zM648 131h1v1h-1zM649 132h1v1h-1zM650 133h1v1h-1zM651 134h1v1h-1zM841 129h1v1h-1zM842 129h1v1h-1zM840 130h1v1h-1zM843 130h1v1h-1zM839 131h1v7h-1zM844 131h1v7h-1zM840 134h1v1h-1zM841 134h1v1h-1zM842 134h1v1h-1zM843 134h1v1h-1zM846 129h1v9h-1zM852 129h1v9h-1zM847 131h1v1h-1zM848 132h1v1h-1zM849 133h1v2h-1zM850 132h1v1h-1zM851 131h1v1h-1zM937 129h1v1h-1zM938 129h1v1h-1zM936 130h1v1h-1zM939 130h1v1h-1zM935 131h1v7h-1zM940 131h1v7h-1zM936 134h1v1h-1zM937 134h1v1h-1zM938 134h1v1h-1zM939 134h1v1h-1zM969 129h1v1h-1zM970 129h1v1h-1zM968 130h1v1h-1zM971 130h1v1h-1zM967 131h1v7h-1zM972 131h1v7h-1zM968 134h1v1h-1zM969 134h1v1h-1zM970 134h1v1h-1zM971 134h1v1h-1zM985 129h1v1h-1zM986 129h1v1h-1zM984 130h1v1h-1zM987 130h1v1h-1zM983 131h1v7h-1zM988 131h1v7h-1zM984 134h1v1h-1zM985 134h1v1h-1zM986 134h1v1h-1zM987 134h1v1h-1zM1073 129h1v1h-1zM1074 129h1v1h-1zM1072 130h1v1h-1zM1075 130h1v1h-1zM1071 131h1v7h-1zM1076 131h1v7h-1zM1072 134h1v1h-1zM1073 134h1v1h-1zM1074 134h1v1h-1zM1075 134h1v1h-1zM1081 129h1v1h-1zM1082 129h1v1h-1zM1080 130h1v1h-1zM1083 130h1v1h-1zM1079 131h1v7h-1zM1084 131h1v7h-1zM1080 134h1v1h-1zM1081 134h1v1h-1zM1082 134h1v1h-1zM1083 134h1v1h-1zM1095 129h1v9h-1zM1100 129h1v9h-1zM1096 131h1v1h-1zM1097 132h1v1h-1zM1098 133h1v1h-1zM1099 134h1v1h-1zM30 151h7v1h-7zM71 142h1v9h-1zM76 142h1v9h-1zM72 144h1v1h-1zM73 145h1v1h-1zM74 146h1v1h-1zM75 147h1v1h-1zM174 142h1v9h-1zM180 142h1v9h-1zM175 144h1v1h-1zM176 145h1v1h-1zM177 146h1v2h-1zM178 145h1v1h-1zM179 144h1v1h-1zM278 142h1v9h-1zM284 142h1v9h-1zM279 144h1v1h-1zM280 145h1v1h-1zM281 146h1v2h-1zM282 145h1v1h-1zM283 144h1v1h-1zM297 142h1v1h-1zM298 142h1v1h-1zM296 143h1v1h-1zM299 143h1v1h-1zM295 144h1v7h-1zM300 144h1v7h-1zM296 147h1v1h-1zM297 147h1v1h-1zM298 147h1v1h-1zM299 147h1v1h-1zM369 142h1v1h-1zM370 142h1v1h-1zM368 143h1v1h-1zM371 143h1v1h-1zM367 144h1v7h-1zM372 144h1v7h-1zM368 147h1v1h-1zM369 147h1v1h-1zM370 147h1v1h-1zM371 147h1v1h-1zM417 142h1v1h-1zM418 142h1v1h-1zM416 143h1v1h-1zM419 143h1v1h-1zM415 144h1v7h-1zM420 144h1v7h-1zM416 147h1v1h-1zM417 147h1v1h-1zM418 147h1v1h-1zM419 147h1v1h-1zM494 142h1v9h-1zM500 142h1v9h-1zM495 144h1v1h-1zM496 145h1v1h-1zM497 146h1v2h-1zM498 145h1v1h-1zM499 144h1v1h-1zM551 142h1v9h-1zM556 142h1v9h-1zM552 144h1v1h-1zM553 145h1v1h-1zM554 146h1v1h-1zM555 147h1v1h-1zM625 142h1v1h-1zM626 142h1v1h-1zM624 143h1v1h-1zM627 143h1v1h-1zM623 144h1v7h-1zM628 144h1v7h-1zM624 147h1v1h-1zM625 147h1v1h-1zM626 147h1v1h-1zM627 147h1v1h-1zM633 142h1v1h-1zM634 142h1v1h-1zM632 143h1v1h-1zM635 143h1v1h-1zM631 144h1v7h-1zM636 144h1v7h-1zM632 147h1v1h-1zM633 147h1v1h-1zM634 147h1v1h-1zM635 147h1v1h-1zM647 142h1v9h-1zM652 142h1v9h-1zM648 144h1v1h-1zM649 145h1v1h-1zM650 146h1v1h-1zM651 147h1v1h-1zM841 142h1v1h-1zM842 142h1v1h-1zM840 143h1v1h-1zM843 143h1v1h-1zM839 144h1v7h-1zM844 144h1v7h-1zM840 147h1v1h-1zM841 147h1v1h-1zM842 147h1v1h-1zM843 147h1v1h-1zM846 142h1v9h-1zM852 142h1v9h-1zM847 144h1v1h-1zM848 145h1v1h-1zM849 146h1v2h-1zM850 145h1v1h-1zM851 144h1v1h-1zM879 142h1v9h-1zM884 142h1v9h-1zM880 144h1v1h-1zM881 145h1v1h-1zM882 146h1v1h-1zM883 147h1v1h-1zM985 142h1v1h-1zM986 142h1v1h-1zM984 143h1v1h-1zM987 143h1v1h-1zM983 144h1v7h-1zM988 144h1v7h-1zM984 147h1v1h-1zM985 147h1v1h-1zM986 147h1v1h-1zM987 147h1v1h-1zM1073 142h1v1h-1zM1074 142h1v1h-1zM1072 143h1v1h-1zM1075 143h1v1h-1zM1071 144h1v7h-1zM1076 144h1v7h-1zM1072 147h1v1h-1zM1073 147h1v1h-1zM1074 147h1v1h-1zM1075 147h1v1h-1zM30 164h7v1h-7zM297 155h1v1h-1zM298 155h1v1h-1zM296 156h1v1h-1zM299 156h1v1h-1zM295 157h1v7h-1zM300 157h1v7h-1zM296 160h1v1h-1zM297 160h1v1h-1zM298 160h1v1h-1zM299 160h1v1h-1zM303 155h1v9h-1zM308 155h1v9h-1zM304 157h1v1h-1zM305 158h1v1h-1zM306 159h1v1h-1zM307 160h1v1h-1zM385 155h1v1h-1zM386 155h1v1h-1zM384 156h1v1h-1zM387 156h1v1h-1zM383 157h1v7h-1zM388 157h1v7h-1zM384 160h1v1h-1zM385 160h1v1h-1zM386 160h1v1h-1zM387 160h1v1h-1zM417 155h1v1h-1zM418 155h1v1h-1zM416 156h1v1h-1zM419 156h1v1h-1zM415 157h1v7h-1zM420 157h1v7h-1zM416 160h1v1h-1zM417 160h1v1h-1zM418 160h1v1h-1zM419 160h1v1h-1zM446 155h1v8h-1zM452 155h1v8h-1zM447 163h1v1h-1zM448 162h1v1h-1zM449 159h1v3h-1zM450 162h1v1h-1zM451 163h1v1h-1zM494 155h1v9h-1zM500 155h1v9h-1zM495 157h1v1h-1zM496 158h1v1h-1zM497 159h1v2h-1zM498 158h1v1h-1zM499 157h1v1h-1zM551 155h1v9h-1zM556 155h1v9h-1zM552 157h1v1h-1zM553 158h1v1h-1zM554 159h1v1h-1zM555 160h1v1h-1zM846 155h1v9h-1zM852 155h1v9h-1zM847 157h1v1h-1zM848 158h1v1h-1zM849 159h1v2h-1zM850 158h1v1h-1zM851 157h1v1h-1zM969 155h1v1h-1zM970 155h1v1h-1zM968 156h1v1h-1zM971 156h1v1h-1zM967 157h1v7h-1zM972 157h1v7h-1zM968 160h1v1h-1zM969 160h1v1h-1zM970 160h1v1h-1zM971 160h1v1h-1zM985 155h1v1h-1zM986 155h1v1h-1zM984 156h1v1h-1zM987 156h1v1h-1zM983 157h1v7h-1zM988 157h1v7h-1zM984 160h1v1h-1zM985 160h1v1h-1zM986 160h1v1h-1zM987 160h1v1h-1zM1143 155h1v9h-1zM1148 155h1v9h-1zM1144 157h1v1h-1zM1145 158h1v1h-1zM1146 159h1v1h-1zM1147 160h1v1h-1zM30 177h7v1h-7zM297 168h1v1h-1zM298 168h1v1h-1zM296 169h1v1h-1zM299 169h1v1h-1zM295 170h1v7h-1zM300 170h1v7h-1zM296 173h1v1h-1zM297 173h1v1h-1zM298 173h1v1h-1zM299 173h1v1h-1zM303 168h1v9h-1zM308 168h1v9h-1zM304 170h1v1h-1zM305 171h1v1h-1zM306 172h1v1h-1zM307 173h1v1h-1zM321 168h1v1h-1zM322 168h1v1h-1zM320 169h1v1h-1zM323 169h1v1h-1zM319 170h1v7h-1zM324 170h1v7h-1zM320 173h1v1h-1zM321 173h1v1h-1zM322 173h1v1h-1zM323 173h1v1h-1zM385 168h1v1h-1zM386 168h1v1h-1zM384 169h1v1h-1zM387 169h1v1h-1zM383 170h1v7h-1zM388 170h1v7h-1zM384 173h1v1h-1zM385 173h1v1h-1zM386 173h1v1h-1zM387 173h1v1h-1zM417 168h1v1h-1zM418 168h1v1h-1zM416 169h1v1h-1zM419 169h1v1h-1zM415 170h1v7h-1zM420 170h1v7h-1zM416 173h1v1h-1zM417 173h1v1h-1zM418 173h1v1h-1zM419 173h1v1h-1zM446 168h1v8h-1zM452 168h1v8h-1zM447 176h1v1h-1zM448 175h1v1h-1zM449 172h1v3h-1zM450 175h1v1h-1zM451 176h1v1h-1zM494 168h1v9h-1zM500 168h1v9h-1zM495 170h1v1h-1zM496 171h1v1h-1zM497 172h1v2h-1zM498 171h1v1h-1zM499 170h1v1h-1zM551 168h1v9h-1zM556 168h1v9h-1zM552 170h1v1h-1zM553 171h1v1h-1zM554 172h1v1h-1zM555 173h1v1h-1zM633 168h1v1h-1zM634 168h1v1h-1zM632 169h1v1h-1zM635 169h1v1h-1zM631 170h1v7h-1zM636 170h1v7h-1zM632 173h1v1h-1zM633 173h1v1h-1zM634 173h1v1h-1zM635 173h1v1h-1zM846 168h1v9h-1zM852 168h1v9h-1zM847 170h1v1h-1zM848 171h1v1h-1zM849 172h1v2h-1zM850 171h1v1h-1zM851 170h1v1h-1zM969 168h1v1h-1zM970 168h1v1h-1zM968 169h1v1h-1zM971 169h1v1h-1zM967 170h1v7h-1zM972 170h1v7h-1zM968 173h1v1h-1zM969 173h1v1h-1zM970 173h1v1h-1zM971 173h1v1h-1zM985 168h1v1h-1zM986 168h1v1h-1zM984 169h1v1h-1zM987 169h1v1h-1zM983 170h1v7h-1zM988 170h1v7h-1zM984 173h1v1h-1zM985 173h1v1h-1zM986 173h1v1h-1zM987 173h1v1h-1zM1065 168h1v1h-1zM1066 168h1v1h-1zM1064 169h1v1h-1zM1067 169h1v1h-1zM1063 170h1v7h-1zM1068 170h1v7h-1zM1064 173h1v1h-1zM1065 173h1v1h-1zM1066 173h1v1h-1zM1067 173h1v1h-1zM1143 168h1v9h-1zM1148 168h1v9h-1zM1144 170h1v1h-1zM1145 171h1v1h-1zM1146 172h1v1h-1zM1147 173h1v1h-1zM30 190h7v1h-7zM73 181h1v1h-1zM74 181h1v1h-1zM72 182h1v1h-1zM75 182h1v1h-1zM71 183h1v7h-1zM76 183h1v7h-1zM72 186h1v1h-1zM73 186h1v1h-1zM74 186h1v1h-1zM75 186h1v1h-1zM191 181h1v9h-1zM196 181h1v9h-1zM192 183h1v1h-1zM193 184h1v1h-1zM194 185h1v1h-1zM195 186h1v1h-1zM297 181h1v1h-1zM298 181h1v1h-1zM296 182h1v1h-1zM299 182h1v1h-1zM295 183h1v7h-1zM300 183h1v7h-1zM296 186h1v1h-1zM297 186h1v1h-1zM298 186h1v1h-1zM299 186h1v1h-1zM303 181h1v9h-1zM308 181h1v9h-1zM304 183h1v1h-1zM305 184h1v1h-1zM306 185h1v1h-1zM307 186h1v1h-1zM385 181h1v1h-1zM386 181h1v1h-1zM384 182h1v1h-1zM387 182h1v1h-1zM383 183h1v7h-1zM388 183h1v7h-1zM384 186h1v1h-1zM385 186h1v1h-1zM386 186h1v1h-1zM387 186h1v1h-1zM417 181h1v1h-1zM418 181h1v1h-1zM416 182h1v1h-1zM419 182h1v1h-1zM415 183h1v7h-1zM420 183h1v7h-1zM416 186h1v1h-1zM417 186h1v1h-1zM418 186h1v1h-1zM419 186h1v1h-1zM446 181h1v8h-1zM452 181h1v8h-1zM447 189h1v1h-1zM448 188h1v1h-1zM449 185h1v3h-1zM450 188h1v1h-1zM451 189h1v1h-1zM494 181h1v9h-1zM500 181h1v9h-1zM495 183h1v1h-1zM496 184h1v1h-1zM497 185h1v2h-1zM498 184h1v1h-1zM499 183h1v1h-1zM551 181h1v9h-1zM556 181h1v9h-1zM552 183h1v1h-1zM553 184h1v1h-1zM554 185h1v1h-1zM555 186h1v1h-1zM633 181h1v1h-1zM634 181h1v1h-1zM632 182h1v1h-1zM635 182h1v1h-1zM631 183h1v7h-1zM636 183h1v7h-1zM632 186h1v1h-1zM633 186h1v1h-1zM634 186h1v1h-1zM635 186h1v1h-1zM846 181h1v9h-1zM852 181h1v9h-1zM847 183h1v1h-1zM848 184h1v1h-1zM849 185h1v2h-1zM850 184h1v1h-1zM851 183h1v1h-1zM969 181h1v1h-1zM970 181h1v1h-1zM968 182h1v1h-1zM971 182h1v1h-1zM967 183h1v7h-1zM972 183h1v7h-1zM968 186h1v1h-1zM969 186h1v1h-1zM970 186h1v1h-1zM971 186h1v1h-1zM985 181h1v1h-1zM986 181h1v1h-1zM984 182h1v1h-1zM987 182h1v1h-1zM983 183h1v7h-1zM988 183h1v7h-1zM984 186h1v1h-1zM985 186h1v1h-1zM986 186h1v1h-1zM987 186h1v1h-1zM1143 181h1v9h-1zM1148 181h1v9h-1zM1144 183h1v1h-1zM1145 184h1v1h-1zM1146 185h1v1h-1zM1147 186h1v1h-1zM30 203h7v1h-7zM55 194h1v9h-1zM60 194h1v9h-1zM56 196h1v1h-1zM57 197h1v1h-1zM58 198h1v1h-1zM59 199h1v1h-1zM191 194h1v9h-1zM196 194h1v9h-1zM192 196h1v1h-1zM193 197h1v1h-1zM194 198h1v1h-1zM195 199h1v1h-1zM249 194h1v1h-1zM250 194h1v1h-1zM248 195h1v1h-1zM251 195h1v1h-1zM247 196h1v7h-1zM252 196h1v7h-1zM248 199h1v1h-1zM249 199h1v1h-1zM250 199h1v1h-1zM251 199h1v1h-1zM297 194h1v1h-1zM298 194h1v1h-1zM296 195h1v1h-1zM299 195h1v1h-1zM295 196h1v7h-1zM300 196h1v7h-1zM296 199h1v1h-1zM297 199h1v1h-1zM298 199h1v1h-1zM299 199h1v1h-1zM385 194h1v1h-1zM386 194h1v1h-1zM384 195h1v1h-1zM387 195h1v1h-1zM383 196h1v7h-1zM388 196h1v7h-1zM384 199h1v1h-1zM385 199h1v1h-1zM386 199h1v1h-1zM387 199h1v1h-1zM417 194h1v1h-1zM418 194h1v1h-1zM416 195h1v1h-1zM419 195h1v1h-1zM415 196h1v7h-1zM420 196h1v7h-1zM416 199h1v1h-1zM417 199h1v1h-1zM418 199h1v1h-1zM419 199h1v1h-1zM433 194h1v1h-1zM434 194h1v1h-1zM432 195h1v1h-1zM435 195h1v1h-1zM431 196h1v7h-1zM436 196h1v7h-1zM432 199h1v1h-1zM433 199h1v1h-1zM434 199h1v1h-1zM435 199h1v1h-1zM446 194h1v8h-1zM452 194h1v8h-1zM447 202h1v1h-1zM448 201h1v1h-1zM449 198h1v3h-1zM450 201h1v1h-1zM451 202h1v1h-1zM494 194h1v9h-1zM500 194h1v9h-1zM495 196h1v1h-1zM496 197h1v1h-1zM497 198h1v2h-1zM498 197h1v1h-1zM499 196h1v1h-1zM551 194h1v9h-1zM556 194h1v9h-1zM552 196h1v1h-1zM553 197h1v1h-1zM554 198h1v1h-1zM555 199h1v1h-1zM633 194h1v1h-1zM634 194h1v1h-1zM632 195h1v1h-1zM635 195h1v1h-1zM631 196h1v7h-1zM636 196h1v7h-1zM632 199h1v1h-1zM633 199h1v1h-1zM634 199h1v1h-1zM635 199h1v1h-1zM846 194h1v9h-1zM852 194h1v9h-1zM847 196h1v1h-1zM848 197h1v1h-1zM849 198h1v2h-1zM850 197h1v1h-1zM851 196h1v1h-1zM953 194h1v1h-1zM954 194h1v1h-1zM952 195h1v1h-1zM955 195h1v1h-1zM951 196h1v7h-1zM956 196h1v7h-1zM952 199h1v1h-1zM953 199h1v1h-1zM954 199h1v1h-1zM955 199h1v1h-1zM969 194h1v1h-1zM970 194h1v1h-1zM968 195h1v1h-1zM971 195h1v1h-1zM967 196h1v7h-1zM972 196h1v7h-1zM968 199h1v1h-1zM969 199h1v1h-1zM970 199h1v1h-1zM971 199h1v1h-1zM985 194h1v1h-1zM986 194h1v1h-1zM984 195h1v1h-1zM987 195h1v1h-1zM983 196h1v7h-1zM988 196h1v7h-1zM984 199h1v1h-1zM985 199h1v1h-1zM986 199h1v1h-1zM987 199h1v1h-1zM1063 194h1v9h-1zM1068 194h1v9h-1zM1064 196h1v1h-1zM1065 197h1v1h-1zM1066 198h1v1h-1zM1067 199h1v1h-1zM1073 194h1v1h-1zM1074 194h1v1h-1zM1072 195h1v1h-1zM1075 195h1v1h-1zM1071 196h1v7h-1zM1076 196h1v7h-1zM1072 199h1v1h-1zM1073 199h1v1h-1zM1074 199h1v1h-1zM1075 199h1v1h-1zM30 216h7v1h-7zM49 207h1v1h-1zM50 207h1v1h-1zM48 208h1v1h-1zM51 208h1v1h-1zM47 209h1v7h-1zM52 209h1v7h-1zM48 212h1v1h-1zM49 212h1v1h-1zM50 212h1v1h-1zM51 212h1v1h-1zM198 207h1v9h-1zM204 207h1v9h-1zM199 209h1v1h-1zM200 210h1v1h-1zM201 211h1v2h-1zM202 210h1v1h-1zM203 209h1v1h-1zM249 207h1v1h-1zM250 207h1v1h-1zM248 208h1v1h-1zM251 208h1v1h-1zM247 209h1v7h-1zM252 209h1v7h-1zM248 212h1v1h-1zM249 212h1v1h-1zM250 212h1v1h-1zM251 212h1v1h-1zM297 207h1v1h-1zM298 207h1v1h-1zM296 208h1v1h-1zM299 208h1v1h-1zM295 209h1v7h-1zM300 209h1v7h-1zM296 212h1v1h-1zM297 212h1v1h-1zM298 212h1v1h-1zM299 212h1v1h-1zM321 207h1v1h-1zM322 207h1v1h-1zM320 208h1v1h-1zM323 208h1v1h-1zM319 209h1v7h-1zM324 209h1v7h-1zM320 212h1v1h-1zM321 212h1v1h-1zM322 212h1v1h-1zM323 212h1v1h-1zM329 207h1v1h-1zM330 207h1v1h-1zM328 208h1v1h-1zM331 208h1v1h-1zM327 209h1v7h-1zM332 209h1v7h-1zM328 212h1v1h-1zM329 212h1v1h-1zM330 212h1v1h-1zM331 212h1v1h-1zM351 207h1v9h-1zM356 207h1v9h-1zM352 209h1v1h-1zM353 210h1v1h-1zM354 211h1v1h-1zM355 212h1v1h-1zM433 207h1v1h-1zM434 207h1v1h-1zM432 208h1v1h-1zM435 208h1v1h-1zM431 209h1v7h-1zM436 209h1v7h-1zM432 212h1v1h-1zM433 212h1v1h-1zM434 212h1v1h-1zM435 212h1v1h-1zM494 207h1v9h-1zM500 207h1v9h-1zM495 209h1v1h-1zM496 210h1v1h-1zM497 211h1v2h-1zM498 210h1v1h-1zM499 209h1v1h-1zM551 207h1v9h-1zM556 207h1v9h-1zM552 209h1v1h-1zM553 210h1v1h-1zM554 211h1v1h-1zM555 212h1v1h-1zM633 207h1v1h-1zM634 207h1v1h-1zM632 208h1v1h-1zM635 208h1v1h-1zM631 209h1v7h-1zM636 209h1v7h-1zM632 212h1v1h-1zM633 212h1v1h-1zM634 212h1v1h-1zM635 212h1v1h-1zM846 207h1v9h-1zM852 207h1v9h-1zM847 209h1v1h-1zM848 210h1v1h-1zM849 211h1v2h-1zM850 210h1v1h-1zM851 209h1v1h-1zM937 207h1v1h-1zM938 207h1v1h-1zM936 208h1v1h-1zM939 208h1v1h-1zM935 209h1v7h-1zM940 209h1v7h-1zM936 212h1v1h-1zM937 212h1v1h-1zM938 212h1v1h-1zM939 212h1v1h-1zM953 207h1v1h-1zM954 207h1v1h-1zM952 208h1v1h-1zM955 208h1v1h-1zM951 209h1v7h-1zM956 209h1v7h-1zM952 212h1v1h-1zM953 212h1v1h-1zM954 212h1v1h-1zM955 212h1v1h-1zM969 207h1v1h-1zM970 207h1v1h-1zM968 208h1v1h-1zM971 208h1v1h-1zM967 209h1v7h-1zM972 209h1v7h-1zM968 212h1v1h-1zM969 212h1v1h-1zM970 212h1v1h-1zM971 212h1v1h-1zM985 207h1v1h-1zM986 207h1v1h-1zM984 208h1v1h-1zM987 208h1v1h-1zM983 209h1v7h-1zM988 209h1v7h-1zM984 212h1v1h-1zM985 212h1v1h-1zM986 212h1v1h-1zM987 212h1v1h-1zM1041 207h1v1h-1zM1042 207h1v1h-1zM1040 208h1v1h-1zM1043 208h1v1h-1zM1039 209h1v7h-1zM1044 209h1v7h-1zM1040 212h1v1h-1zM1041 212h1v1h-1zM1042 212h1v1h-1zM1043 212h1v1h-1zM1073 207h1v1h-1zM1074 207h1v1h-1zM1072 208h1v1h-1zM1075 208h1v1h-1zM1071 209h1v7h-1zM1076 209h1v7h-1zM1072 212h1v1h-1zM1073 212h1v1h-1zM1074 212h1v1h-1zM1075 212h1v1h-1zM30 229h7v1h-7zM182 220h1v9h-1zM188 220h1v9h-1zM183 222h1v1h-1zM184 223h1v1h-1zM185 224h1v2h-1zM186 223h1v1h-1zM187 222h1v1h-1zM249 220h1v1h-1zM250 220h1v1h-1zM248 221h1v1h-1zM251 221h1v1h-1zM247 222h1v7h-1zM252 222h1v7h-1zM248 225h1v1h-1zM249 225h1v1h-1zM250 225h1v1h-1zM251 225h1v1h-1zM297 220h1v1h-1zM298 220h1v1h-1zM296 221h1v1h-1zM299 221h1v1h-1zM295 222h1v7h-1zM300 222h1v7h-1zM296 225h1v1h-1zM297 225h1v1h-1zM298 225h1v1h-1zM299 225h1v1h-1zM321 220h1v1h-1zM322 220h1v1h-1zM320 221h1v1h-1zM323 221h1v1h-1zM319 222h1v7h-1zM324 222h1v7h-1zM320 225h1v1h-1zM321 225h1v1h-1zM322 225h1v1h-1zM323 225h1v1h-1zM377 220h1v1h-1zM378 220h1v1h-1zM376 221h1v1h-1zM379 221h1v1h-1zM375 222h1v7h-1zM380 222h1v7h-1zM376 225h1v1h-1zM377 225h1v1h-1zM378 225h1v1h-1zM379 225h1v1h-1zM393 220h1v1h-1zM394 220h1v1h-1zM392 221h1v1h-1zM395 221h1v1h-1zM391 222h1v7h-1zM396 222h1v7h-1zM392 225h1v1h-1zM393 225h1v1h-1zM394 225h1v1h-1zM395 225h1v1h-1zM409 220h1v1h-1zM410 220h1v1h-1zM408 221h1v1h-1zM411 221h1v1h-1zM407 222h1v7h-1zM412 222h1v7h-1zM408 225h1v1h-1zM409 225h1v1h-1zM410 225h1v1h-1zM411 225h1v1h-1zM417 220h1v1h-1zM418 220h1v1h-1zM416 221h1v1h-1zM419 221h1v1h-1zM415 222h1v7h-1zM420 222h1v7h-1zM416 225h1v1h-1zM417 225h1v1h-1zM418 225h1v1h-1zM419 225h1v1h-1zM433 220h1v1h-1zM434 220h1v1h-1zM432 221h1v1h-1zM435 221h1v1h-1zM431 222h1v7h-1zM436 222h1v7h-1zM432 225h1v1h-1zM433 225h1v1h-1zM434 225h1v1h-1zM435 225h1v1h-1zM494 220h1v9h-1zM500 220h1v9h-1zM495 222h1v1h-1zM496 223h1v1h-1zM497 224h1v2h-1zM498 223h1v1h-1zM499 222h1v1h-1zM511 220h1v9h-1zM516 220h1v9h-1zM512 222h1v1h-1zM513 223h1v1h-1zM514 224h1v1h-1zM515 225h1v1h-1zM551 220h1v9h-1zM556 220h1v9h-1zM552 222h1v1h-1zM553 223h1v1h-1zM554 224h1v1h-1zM555 225h1v1h-1zM598 220h1v9h-1zM604 220h1v9h-1zM599 222h1v1h-1zM600 223h1v1h-1zM601 224h1v2h-1zM602 223h1v1h-1zM603 222h1v1h-1zM655 220h1v9h-1zM660 220h1v9h-1zM656 222h1v1h-1zM657 223h1v1h-1zM658 224h1v1h-1zM659 225h1v1h-1zM697 220h1v1h-1zM698 220h1v1h-1zM696 221h1v1h-1zM699 221h1v1h-1zM695 222h1v7h-1zM700 222h1v7h-1zM696 225h1v1h-1zM697 225h1v1h-1zM698 225h1v1h-1zM699 225h1v1h-1zM846 220h1v9h-1zM852 220h1v9h-1zM847 222h1v1h-1zM848 223h1v1h-1zM849 224h1v2h-1zM850 223h1v1h-1zM851 222h1v1h-1zM953 220h1v1h-1zM954 220h1v1h-1zM952 221h1v1h-1zM955 221h1v1h-1zM951 222h1v7h-1zM956 222h1v7h-1zM952 225h1v1h-1zM953 225h1v1h-1zM954 225h1v1h-1zM955 225h1v1h-1zM961 220h1v1h-1zM962 220h1v1h-1zM960 221h1v1h-1zM963 221h1v1h-1zM959 222h1v7h-1zM964 222h1v7h-1zM960 225h1v1h-1zM961 225h1v1h-1zM962 225h1v1h-1zM963 225h1v1h-1zM969 220h1v1h-1zM970 220h1v1h-1zM968 221h1v1h-1zM971 221h1v1h-1zM967 222h1v7h-1zM972 222h1v7h-1zM968 225h1v1h-1zM969 225h1v1h-1zM970 225h1v1h-1zM971 225h1v1h-1zM985 220h1v1h-1zM986 220h1v1h-1zM984 221h1v1h-1zM987 221h1v1h-1zM983 222h1v7h-1zM988 222h1v7h-1zM984 225h1v1h-1zM985 225h1v1h-1zM986 225h1v1h-1zM987 225h1v1h-1zM1073 220h1v1h-1zM1074 220h1v1h-1zM1072 221h1v1h-1zM1075 221h1v1h-1zM1071 222h1v7h-1zM1076 222h1v7h-1zM1072 225h1v1h-1zM1073 225h1v1h-1zM1074 225h1v1h-1zM1075 225h1v1h-1zM30 242h7v1h-7zM62 233h1v9h-1zM68 233h1v9h-1zM63 235h1v1h-1zM64 236h1v1h-1zM65 237h1v2h-1zM66 236h1v1h-1zM67 235h1v1h-1zM73 233h1v1h-1zM74 233h1v1h-1zM72 234h1v1h-1zM75 234h1v1h-1zM71 235h1v7h-1zM76 235h1v7h-1zM72 238h1v1h-1zM73 238h1v1h-1zM74 238h1v1h-1zM75 238h1v1h-1zM182 233h1v9h-1zM188 233h1v9h-1zM183 235h1v1h-1zM184 236h1v1h-1zM185 237h1v2h-1zM186 236h1v1h-1zM187 235h1v1h-1zM249 233h1v1h-1zM250 233h1v1h-1zM248 234h1v1h-1zM251 234h1v1h-1zM247 235h1v7h-1zM252 235h1v7h-1zM248 238h1v1h-1zM249 238h1v1h-1zM250 238h1v1h-1zM251 238h1v1h-1zM297 233h1v1h-1zM298 233h1v1h-1zM296 234h1v1h-1zM299 234h1v1h-1zM295 235h1v7h-1zM300 235h1v7h-1zM296 238h1v1h-1zM297 238h1v1h-1zM298 238h1v1h-1zM299 238h1v1h-1zM321 233h1v1h-1zM322 233h1v1h-1zM320 234h1v1h-1zM323 234h1v1h-1zM319 235h1v7h-1zM324 235h1v7h-1zM320 238h1v1h-1zM321 238h1v1h-1zM322 238h1v1h-1zM323 238h1v1h-1zM377 233h1v1h-1zM378 233h1v1h-1zM376 234h1v1h-1zM379 234h1v1h-1zM375 235h1v7h-1zM380 235h1v7h-1zM376 238h1v1h-1zM377 238h1v1h-1zM378 238h1v1h-1zM379 238h1v1h-1zM383 233h1v9h-1zM388 233h1v9h-1zM384 235h1v1h-1zM385 236h1v1h-1zM386 237h1v1h-1zM387 238h1v1h-1zM409 233h1v1h-1zM410 233h1v1h-1zM408 234h1v1h-1zM411 234h1v1h-1zM407 235h1v7h-1zM412 235h1v7h-1zM408 238h1v1h-1zM409 238h1v1h-1zM410 238h1v1h-1zM411 238h1v1h-1zM417 233h1v1h-1zM418 233h1v1h-1zM416 234h1v1h-1zM419 234h1v1h-1zM415 235h1v7h-1zM420 235h1v7h-1zM416 238h1v1h-1zM417 238h1v1h-1zM418 238h1v1h-1zM419 238h1v1h-1zM494 233h1v9h-1zM500 233h1v9h-1zM495 235h1v1h-1zM496 236h1v1h-1zM497 237h1v2h-1zM498 236h1v1h-1zM499 235h1v1h-1zM511 233h1v9h-1zM516 233h1v9h-1zM512 235h1v1h-1zM513 236h1v1h-1zM514 237h1v1h-1zM515 238h1v1h-1zM551 233h1v9h-1zM556 233h1v9h-1zM552 235h1v1h-1zM553 236h1v1h-1zM554 237h1v1h-1zM555 238h1v1h-1zM598 233h1v9h-1zM604 233h1v9h-1zM599 235h1v1h-1zM600 236h1v1h-1zM601 237h1v2h-1zM602 236h1v1h-1zM603 235h1v1h-1zM633 233h1v1h-1zM634 233h1v1h-1zM632 234h1v1h-1zM635 234h1v1h-1zM631 235h1v7h-1zM636 235h1v7h-1zM632 238h1v1h-1zM633 238h1v1h-1zM634 238h1v1h-1zM635 238h1v1h-1zM655 233h1v9h-1zM660 233h1v9h-1zM656 235h1v1h-1zM657 236h1v1h-1zM658 237h1v1h-1zM659 238h1v1h-1zM697 233h1v1h-1zM698 233h1v1h-1zM696 234h1v1h-1zM699 234h1v1h-1zM695 235h1v7h-1zM700 235h1v7h-1zM696 238h1v1h-1zM697 238h1v1h-1zM698 238h1v1h-1zM699 238h1v1h-1zM846 233h1v9h-1zM852 233h1v9h-1zM847 235h1v1h-1zM848 236h1v1h-1zM849 237h1v2h-1zM850 236h1v1h-1zM851 235h1v1h-1zM953 233h1v1h-1zM954 233h1v1h-1zM952 234h1v1h-1zM955 234h1v1h-1zM951 235h1v7h-1zM956 235h1v7h-1zM952 238h1v1h-1zM953 238h1v1h-1zM954 238h1v1h-1zM955 238h1v1h-1zM969 233h1v1h-1zM970 233h1v1h-1zM968 234h1v1h-1zM971 234h1v1h-1zM967 235h1v7h-1zM972 235h1v7h-1zM968 238h1v1h-1zM969 238h1v1h-1zM970 238h1v1h-1zM971 238h1v1h-1zM985 233h1v1h-1zM986 233h1v1h-1zM984 234h1v1h-1zM987 234h1v1h-1zM983 235h1v7h-1zM988 235h1v7h-1zM984 238h1v1h-1zM985 238h1v1h-1zM986 238h1v1h-1zM987 238h1v1h-1zM1073 233h1v1h-1zM1074 233h1v1h-1zM1072 234h1v1h-1zM1075 234h1v1h-1zM1071 235h1v7h-1zM1076 235h1v7h-1zM1072 238h1v1h-1zM1073 238h1v1h-1zM1074 238h1v1h-1zM1075 238h1v1h-1zM30 255h7v1h-7zM49 246h1v1h-1zM50 246h1v1h-1zM48 247h1v1h-1zM51 247h1v1h-1zM47 248h1v7h-1zM52 248h1v7h-1zM48 251h1v1h-1zM49 251h1v1h-1zM50 251h1v1h-1zM51 251h1v1h-1zM71 246h1v9h-1zM76 246h1v9h-1zM72 248h1v1h-1zM73 249h1v1h-1zM74 250h1v1h-1zM75 251h1v1h-1zM182 246h1v9h-1zM188 246h1v9h-1zM183 248h1v1h-1zM184 249h1v1h-1zM185 250h1v2h-1zM186 249h1v1h-1zM187 248h1v1h-1zM249 246h1v1h-1zM250 246h1v1h-1zM248 247h1v1h-1zM251 247h1v1h-1zM247 248h1v7h-1zM252 248h1v7h-1zM248 251h1v1h-1zM249 251h1v1h-1zM250 251h1v1h-1zM251 251h1v1h-1zM297 246h1v1h-1zM298 246h1v1h-1zM296 247h1v1h-1zM299 247h1v1h-1zM295 248h1v7h-1zM300 248h1v7h-1zM296 251h1v1h-1zM297 251h1v1h-1zM298 251h1v1h-1zM299 251h1v1h-1zM321 246h1v1h-1zM322 246h1v1h-1zM320 247h1v1h-1zM323 247h1v1h-1zM319 248h1v7h-1zM324 248h1v7h-1zM320 251h1v1h-1zM321 251h1v1h-1zM322 251h1v1h-1zM323 251h1v1h-1zM383 246h1v9h-1zM388 246h1v9h-1zM384 248h1v1h-1zM385 249h1v1h-1zM386 250h1v1h-1zM387 251h1v1h-1zM407 246h1v9h-1zM412 246h1v9h-1zM408 248h1v1h-1zM409 249h1v1h-1zM410 250h1v1h-1zM411 251h1v1h-1zM417 246h1v1h-1zM418 246h1v1h-1zM416 247h1v1h-1zM419 247h1v1h-1zM415 248h1v7h-1zM420 248h1v7h-1zM416 251h1v1h-1zM417 251h1v1h-1zM418 251h1v1h-1zM419 251h1v1h-1zM433 246h1v1h-1zM434 246h1v1h-1zM432 247h1v1h-1zM435 247h1v1h-1zM431 248h1v7h-1zM436 248h1v7h-1zM432 251h1v1h-1zM433 251h1v1h-1zM434 251h1v1h-1zM435 251h1v1h-1zM494 246h1v9h-1zM500 246h1v9h-1zM495 248h1v1h-1zM496 249h1v1h-1zM497 250h1v2h-1zM498 249h1v1h-1zM499 248h1v1h-1zM511 246h1v9h-1zM516 246h1v9h-1zM512 248h1v1h-1zM513 249h1v1h-1zM514 250h1v1h-1zM515 251h1v1h-1zM551 246h1v9h-1zM556 246h1v9h-1zM552 248h1v1h-1zM553 249h1v1h-1zM554 250h1v1h-1zM555 251h1v1h-1zM601 246h1v1h-1zM602 246h1v1h-1zM600 247h1v1h-1zM603 247h1v1h-1zM599 248h1v7h-1zM604 248h1v7h-1zM600 251h1v1h-1zM601 251h1v1h-1zM602 251h1v1h-1zM603 251h1v1h-1zM633 246h1v1h-1zM634 246h1v1h-1zM632 247h1v1h-1zM635 247h1v1h-1zM631 248h1v7h-1zM636 248h1v7h-1zM632 251h1v1h-1zM633 251h1v1h-1zM634 251h1v1h-1zM635 251h1v1h-1zM697 246h1v1h-1zM698 246h1v1h-1zM696 247h1v1h-1zM699 247h1v1h-1zM695 248h1v7h-1zM700 248h1v7h-1zM696 251h1v1h-1zM697 251h1v1h-1zM698 251h1v1h-1zM699 251h1v1h-1zM846 246h1v9h-1zM852 246h1v9h-1zM847 248h1v1h-1zM848 249h1v1h-1zM849 250h1v2h-1zM850 249h1v1h-1zM851 248h1v1h-1zM953 246h1v1h-1zM954 246h1v1h-1zM952 247h1v1h-1zM955 247h1v1h-1zM951 248h1v7h-1zM956 248h1v7h-1zM952 251h1v1h-1zM953 251h1v1h-1zM954 251h1v1h-1zM955 251h1v1h-1zM969 246h1v1h-1zM970 246h1v1h-1zM968 247h1v1h-1zM971 247h1v1h-1zM967 248h1v7h-1zM972 248h1v7h-1zM968 251h1v1h-1zM969 251h1v1h-1zM970 251h1v1h-1zM971 251h1v1h-1zM985 246h1v1h-1zM986 246h1v1h-1zM984 247h1v1h-1zM987 247h1v1h-1zM983 248h1v7h-1zM988 248h1v7h-1zM984 251h1v1h-1zM985 251h1v1h-1zM986 251h1v1h-1zM987 251h1v1h-1zM991 246h1v9h-1zM996 246h1v9h-1zM992 248h1v1h-1zM993 249h1v1h-1zM994 250h1v1h-1zM995 251h1v1h-1zM30 268h7v1h-7zM65 259h1v1h-1zM66 259h1v1h-1zM64 260h1v1h-1zM67 260h1v1h-1zM63 261h1v7h-1zM68 261h1v7h-1zM64 264h1v1h-1zM65 264h1v1h-1zM66 264h1v1h-1zM67 264h1v1h-1zM182 259h1v9h-1zM188 259h1v9h-1zM183 261h1v1h-1zM184 262h1v1h-1zM185 263h1v2h-1zM186 262h1v1h-1zM187 261h1v1h-1zM249 259h1v1h-1zM250 259h1v1h-1zM248 260h1v1h-1zM251 260h1v1h-1zM247 261h1v7h-1zM252 261h1v7h-1zM248 264h1v1h-1zM249 264h1v1h-1zM250 264h1v1h-1zM251 264h1v1h-1zM297 259h1v1h-1zM298 259h1v1h-1zM296 260h1v1h-1zM299 260h1v1h-1zM295 261h1v7h-1zM300 261h1v7h-1zM296 264h1v1h-1zM297 264h1v1h-1zM298 264h1v1h-1zM299 264h1v1h-1zM321 259h1v1h-1zM322 259h1v1h-1zM320 260h1v1h-1zM323 260h1v1h-1zM319 261h1v7h-1zM324 261h1v7h-1zM320 264h1v1h-1zM321 264h1v1h-1zM322 264h1v1h-1zM323 264h1v1h-1zM393 259h1v1h-1zM394 259h1v1h-1zM392 260h1v1h-1zM395 260h1v1h-1zM391 261h1v7h-1zM396 261h1v7h-1zM392 264h1v1h-1zM393 264h1v1h-1zM394 264h1v1h-1zM395 264h1v1h-1zM417 259h1v1h-1zM418 259h1v1h-1zM416 260h1v1h-1zM419 260h1v1h-1zM415 261h1v7h-1zM420 261h1v7h-1zM416 264h1v1h-1zM417 264h1v1h-1zM418 264h1v1h-1zM419 264h1v1h-1zM446 259h1v8h-1zM452 259h1v8h-1zM447 267h1v1h-1zM448 266h1v1h-1zM449 263h1v3h-1zM450 266h1v1h-1zM451 267h1v1h-1zM494 259h1v9h-1zM500 259h1v9h-1zM495 261h1v1h-1zM496 262h1v1h-1zM497 263h1v2h-1zM498 262h1v1h-1zM499 261h1v1h-1zM511 259h1v9h-1zM516 259h1v9h-1zM512 261h1v1h-1zM513 262h1v1h-1zM514 263h1v1h-1zM515 264h1v1h-1zM551 259h1v9h-1zM556 259h1v9h-1zM552 261h1v1h-1zM553 262h1v1h-1zM554 263h1v1h-1zM555 264h1v1h-1zM574 259h1v9h-1zM580 259h1v9h-1zM575 261h1v1h-1zM576 262h1v1h-1zM577 263h1v2h-1zM578 262h1v1h-1zM579 261h1v1h-1zM598 259h1v9h-1zM604 259h1v9h-1zM599 261h1v1h-1zM600 262h1v1h-1zM601 263h1v2h-1zM602 262h1v1h-1zM603 261h1v1h-1zM633 259h1v1h-1zM634 259h1v1h-1zM632 260h1v1h-1zM635 260h1v1h-1zM631 261h1v7h-1zM636 261h1v7h-1zM632 264h1v1h-1zM633 264h1v1h-1zM634 264h1v1h-1zM635 264h1v1h-1zM655 259h1v9h-1zM660 259h1v9h-1zM656 261h1v1h-1zM657 262h1v1h-1zM658 263h1v1h-1zM659 264h1v1h-1zM671 259h1v9h-1zM676 259h1v9h-1zM672 261h1v1h-1zM673 262h1v1h-1zM674 263h1v1h-1zM675 264h1v1h-1zM846 259h1v9h-1zM852 259h1v9h-1zM847 261h1v1h-1zM848 262h1v1h-1zM849 263h1v2h-1zM850 262h1v1h-1zM851 261h1v1h-1zM903 259h1v9h-1zM908 259h1v9h-1zM904 261h1v1h-1zM905 262h1v1h-1zM906 263h1v1h-1zM907 264h1v1h-1zM953 259h1v1h-1zM954 259h1v1h-1zM952 260h1v1h-1zM955 260h1v1h-1zM951 261h1v7h-1zM956 261h1v7h-1zM952 264h1v1h-1zM953 264h1v1h-1zM954 264h1v1h-1zM955 264h1v1h-1zM969 259h1v1h-1zM970 259h1v1h-1zM968 260h1v1h-1zM971 260h1v1h-1zM967 261h1v7h-1zM972 261h1v7h-1zM968 264h1v1h-1zM969 264h1v1h-1zM970 264h1v1h-1zM971 264h1v1h-1zM985 259h1v1h-1zM986 259h1v1h-1zM984 260h1v1h-1zM987 260h1v1h-1zM983 261h1v7h-1zM988 261h1v7h-1zM984 264h1v1h-1zM985 264h1v1h-1zM986 264h1v1h-1zM987 264h1v1h-1zM1143 259h1v9h-1zM1148 259h1v9h-1zM1144 261h1v1h-1zM1145 262h1v1h-1zM1146 263h1v1h-1zM1147 264h1v1h-1zM30 281h7v1h-7zM65 272h1v1h-1zM66 272h1v1h-1zM64 273h1v1h-1zM67 273h1v1h-1zM63 274h1v7h-1zM68 274h1v7h-1zM64 277h1v1h-1zM65 277h1v1h-1zM66 277h1v1h-1zM67 277h1v1h-1zM182 272h1v9h-1zM188 272h1v9h-1zM183 274h1v1h-1zM184 275h1v1h-1zM185 276h1v2h-1zM186 275h1v1h-1zM187 274h1v1h-1zM191 272h1v9h-1zM196 272h1v9h-1zM192 274h1v1h-1zM193 275h1v1h-1zM194 276h1v1h-1zM195 277h1v1h-1zM249 272h1v1h-1zM250 272h1v1h-1zM248 273h1v1h-1zM251 273h1v1h-1zM247 274h1v7h-1zM252 274h1v7h-1zM248 277h1v1h-1zM249 277h1v1h-1zM250 277h1v1h-1zM251 277h1v1h-1zM297 272h1v1h-1zM298 272h1v1h-1zM296 273h1v1h-1zM299 273h1v1h-1zM295 274h1v7h-1zM300 274h1v7h-1zM296 277h1v1h-1zM297 277h1v1h-1zM298 277h1v1h-1zM299 277h1v1h-1zM321 272h1v1h-1zM322 272h1v1h-1zM320 273h1v1h-1zM323 273h1v1h-1zM319 274h1v7h-1zM324 274h1v7h-1zM320 277h1v1h-1zM321 277h1v1h-1zM322 277h1v1h-1zM323 277h1v1h-1zM417 272h1v1h-1zM418 272h1v1h-1zM416 273h1v1h-1zM419 273h1v1h-1zM415 274h1v7h-1zM420 274h1v7h-1zM416 277h1v1h-1zM417 277h1v1h-1zM418 277h1v1h-1zM419 277h1v1h-1zM494 272h1v9h-1zM500 272h1v9h-1zM495 274h1v1h-1zM496 275h1v1h-1zM497 276h1v2h-1zM498 275h1v1h-1zM499 274h1v1h-1zM511 272h1v9h-1zM516 272h1v9h-1zM512 274h1v1h-1zM513 275h1v1h-1zM514 276h1v1h-1zM515 277h1v1h-1zM551 272h1v9h-1zM556 272h1v9h-1zM552 274h1v1h-1zM553 275h1v1h-1zM554 276h1v1h-1zM555 277h1v1h-1zM574 272h1v9h-1zM580 272h1v9h-1zM575 274h1v1h-1zM576 275h1v1h-1zM577 276h1v2h-1zM578 275h1v1h-1zM579 274h1v1h-1zM598 272h1v9h-1zM604 272h1v9h-1zM599 274h1v1h-1zM600 275h1v1h-1zM601 276h1v2h-1zM602 275h1v1h-1zM603 274h1v1h-1zM655 272h1v9h-1zM660 272h1v9h-1zM656 274h1v1h-1zM657 275h1v1h-1zM658 276h1v1h-1zM659 277h1v1h-1zM671 272h1v9h-1zM676 272h1v9h-1zM672 274h1v1h-1zM673 275h1v1h-1zM674 276h1v1h-1zM675 277h1v1h-1zM697 272h1v1h-1zM698 272h1v1h-1zM696 273h1v1h-1zM699 273h1v1h-1zM695 274h1v7h-1zM700 274h1v7h-1zM696 277h1v1h-1zM697 277h1v1h-1zM698 277h1v1h-1zM699 277h1v1h-1zM846 272h1v9h-1zM852 272h1v9h-1zM847 274h1v1h-1zM848 275h1v1h-1zM849 276h1v2h-1zM850 275h1v1h-1zM851 274h1v1h-1zM903 272h1v9h-1zM908 272h1v9h-1zM904 274h1v1h-1zM905 275h1v1h-1zM906 276h1v1h-1zM907 277h1v1h-1zM953 272h1v1h-1zM954 272h1v1h-1zM952 273h1v1h-1zM955 273h1v1h-1zM951 274h1v7h-1zM956 274h1v7h-1zM952 277h1v1h-1zM953 277h1v1h-1zM954 277h1v1h-1zM955 277h1v1h-1zM969 272h1v1h-1zM970 272h1v1h-1zM968 273h1v1h-1zM971 273h1v1h-1zM967 274h1v7h-1zM972 274h1v7h-1zM968 277h1v1h-1zM969 277h1v1h-1zM970 277h1v1h-1zM971 277h1v1h-1zM985 272h1v1h-1zM986 272h1v1h-1zM984 273h1v1h-1zM987 273h1v1h-1zM983 274h1v7h-1zM988 274h1v7h-1zM984 277h1v1h-1zM985 277h1v1h-1zM986 277h1v1h-1zM987 277h1v1h-1zM1073 272h1v1h-1zM1074 272h1v1h-1zM1072 273h1v1h-1zM1075 273h1v1h-1zM1071 274h1v7h-1zM1076 274h1v7h-1zM1072 277h1v1h-1zM1073 277h1v1h-1zM1074 277h1v1h-1zM1075 277h1v1h-1zM1143 272h1v9h-1zM1148 272h1v9h-1zM1144 274h1v1h-1zM1145 275h1v1h-1zM1146 276h1v1h-1zM1147 277h1v1h-1zM38 294h7v1h-7zM49 285h1v1h-1zM50 285h1v1h-1zM48 286h1v1h-1zM51 286h1v1h-1zM47 287h1v7h-1zM52 287h1v7h-1zM48 290h1v1h-1zM49 290h1v1h-1zM50 290h1v1h-1zM51 290h1v1h-1zM201 285h1v1h-1zM202 285h1v1h-1zM200 286h1v1h-1zM203 286h1v1h-1zM199 287h1v7h-1zM204 287h1v7h-1zM200 290h1v1h-1zM201 290h1v1h-1zM202 290h1v1h-1zM203 290h1v1h-1zM249 285h1v1h-1zM250 285h1v1h-1zM248 286h1v1h-1zM251 286h1v1h-1zM247 287h1v7h-1zM252 287h1v7h-1zM248 290h1v1h-1zM249 290h1v1h-1zM250 290h1v1h-1zM251 290h1v1h-1zM297 285h1v1h-1zM298 285h1v1h-1zM296 286h1v1h-1zM299 286h1v1h-1zM295 287h1v7h-1zM300 287h1v7h-1zM296 290h1v1h-1zM297 290h1v1h-1zM298 290h1v1h-1zM299 290h1v1h-1zM321 285h1v1h-1zM322 285h1v1h-1zM320 286h1v1h-1zM323 286h1v1h-1zM319 287h1v7h-1zM324 287h1v7h-1zM320 290h1v1h-1zM321 290h1v1h-1zM322 290h1v1h-1zM323 290h1v1h-1zM385 285h1v1h-1zM386 285h1v1h-1zM384 286h1v1h-1zM387 286h1v1h-1zM383 287h1v7h-1zM388 287h1v7h-1zM384 290h1v1h-1zM385 290h1v1h-1zM386 290h1v1h-1zM387 290h1v1h-1zM409 285h1v1h-1zM410 285h1v1h-1zM408 286h1v1h-1zM411 286h1v1h-1zM407 287h1v7h-1zM412 287h1v7h-1zM408 290h1v1h-1zM409 290h1v1h-1zM410 290h1v1h-1zM411 290h1v1h-1zM433 285h1v1h-1zM434 285h1v1h-1zM432 286h1v1h-1zM435 286h1v1h-1zM431 287h1v7h-1zM436 287h1v7h-1zM432 290h1v1h-1zM433 290h1v1h-1zM434 290h1v1h-1zM435 290h1v1h-1zM494 285h1v9h-1zM500 285h1v9h-1zM495 287h1v1h-1zM496 288h1v1h-1zM497 289h1v2h-1zM498 288h1v1h-1zM499 287h1v1h-1zM511 285h1v9h-1zM516 285h1v9h-1zM512 287h1v1h-1zM513 288h1v1h-1zM514 289h1v1h-1zM515 290h1v1h-1zM551 285h1v9h-1zM556 285h1v9h-1zM552 287h1v1h-1zM553 288h1v1h-1zM554 289h1v1h-1zM555 290h1v1h-1zM633 285h1v1h-1zM634 285h1v1h-1zM632 286h1v1h-1zM635 286h1v1h-1zM631 287h1v7h-1zM636 287h1v7h-1zM632 290h1v1h-1zM633 290h1v1h-1zM634 290h1v1h-1zM635 290h1v1h-1zM846 285h1v9h-1zM852 285h1v9h-1zM847 287h1v1h-1zM848 288h1v1h-1zM849 289h1v2h-1zM850 288h1v1h-1zM851 287h1v1h-1zM905 285h1v1h-1zM906 285h1v1h-1zM904 286h1v1h-1zM907 286h1v1h-1zM903 287h1v7h-1zM908 287h1v7h-1zM904 290h1v1h-1zM905 290h1v1h-1zM906 290h1v1h-1zM907 290h1v1h-1zM953 285h1v1h-1zM954 285h1v1h-1zM952 286h1v1h-1zM955 286h1v1h-1zM951 287h1v7h-1zM956 287h1v7h-1zM952 290h1v1h-1zM953 290h1v1h-1zM954 290h1v1h-1zM955 290h1v1h-1zM969 285h1v1h-1zM970 285h1v1h-1zM968 286h1v1h-1zM971 286h1v1h-1zM967 287h1v7h-1zM972 287h1v7h-1zM968 290h1v1h-1zM969 290h1v1h-1zM970 290h1v1h-1zM971 290h1v1h-1zM985 285h1v1h-1zM986 285h1v1h-1zM984 286h1v1h-1zM987 286h1v1h-1zM983 287h1v7h-1zM988 287h1v7h-1zM984 290h1v1h-1zM985 290h1v1h-1zM986 290h1v1h-1zM987 290h1v1h-1zM991 285h1v9h-1zM996 285h1v9h-1zM992 287h1v1h-1zM993 288h1v1h-1zM994 289h1v1h-1zM995 290h1v1h-1zM1073 285h1v1h-1zM1074 285h1v1h-1zM1072 286h1v1h-1zM1075 286h1v1h-1zM1071 287h1v7h-1zM1076 287h1v7h-1zM1072 290h1v1h-1zM1073 290h1v1h-1zM1074 290h1v1h-1zM1075 290h1v1h-1zM38 307h7v1h-7zM49 298h1v1h-1zM50 298h1v1h-1zM48 299h1v1h-1zM51 299h1v1h-1zM47 300h1v7h-1zM52 300h1v7h-1zM48 303h1v1h-1zM49 303h1v1h-1zM50 303h1v1h-1zM51 303h1v1h-1zM201 298h1v1h-1zM202 298h1v1h-1zM200 299h1v1h-1zM203 299h1v1h-1zM199 300h1v7h-1zM204 300h1v7h-1zM200 303h1v1h-1zM201 303h1v1h-1zM202 303h1v1h-1zM203 303h1v1h-1zM249 298h1v1h-1zM250 298h1v1h-1zM248 299h1v1h-1zM251 299h1v1h-1zM247 300h1v7h-1zM252 300h1v7h-1zM248 303h1v1h-1zM249 303h1v1h-1zM250 303h1v1h-1zM251 303h1v1h-1zM297 298h1v1h-1zM298 298h1v1h-1zM296 299h1v1h-1zM299 299h1v1h-1zM295 300h1v7h-1zM300 300h1v7h-1zM296 303h1v1h-1zM297 303h1v1h-1zM298 303h1v1h-1zM299 303h1v1h-1zM321 298h1v1h-1zM322 298h1v1h-1zM320 299h1v1h-1zM323 299h1v1h-1zM319 300h1v7h-1zM324 300h1v7h-1zM320 303h1v1h-1zM321 303h1v1h-1zM322 303h1v1h-1zM323 303h1v1h-1zM385 298h1v1h-1zM386 298h1v1h-1zM384 299h1v1h-1zM387 299h1v1h-1zM383 300h1v7h-1zM388 300h1v7h-1zM384 303h1v1h-1zM385 303h1v1h-1zM386 303h1v1h-1zM387 303h1v1h-1zM409 298h1v1h-1zM410 298h1v1h-1zM408 299h1v1h-1zM411 299h1v1h-1zM407 300h1v7h-1zM412 300h1v7h-1zM408 303h1v1h-1zM409 303h1v1h-1zM410 303h1v1h-1zM411 303h1v1h-1zM433 298h1v1h-1zM434 298h1v1h-1zM432 299h1v1h-1zM435 299h1v1h-1zM431 300h1v7h-1zM436 300h1v7h-1zM432 303h1v1h-1zM433 303h1v1h-1zM434 303h1v1h-1zM435 303h1v1h-1zM494 298h1v9h-1zM500 298h1v9h-1zM495 300h1v1h-1zM496 301h1v1h-1zM497 302h1v2h-1zM498 301h1v1h-1zM499 300h1v1h-1zM511 298h1v9h-1zM516 298h1v9h-1zM512 300h1v1h-1zM513 301h1v1h-1zM514 302h1v1h-1zM515 303h1v1h-1zM551 298h1v9h-1zM556 298h1v9h-1zM552 300h1v1h-1zM553 301h1v1h-1zM554 302h1v1h-1zM555 303h1v1h-1zM633 298h1v1h-1zM634 298h1v1h-1zM632 299h1v1h-1zM635 299h1v1h-1zM631 300h1v7h-1zM636 300h1v7h-1zM632 303h1v1h-1zM633 303h1v1h-1zM634 303h1v1h-1zM635 303h1v1h-1zM846 298h1v9h-1zM852 298h1v9h-1zM847 300h1v1h-1zM848 301h1v1h-1zM849 302h1v2h-1zM850 301h1v1h-1zM851 300h1v1h-1zM905 298h1v1h-1zM906 298h1v1h-1zM904 299h1v1h-1zM907 299h1v1h-1zM903 300h1v7h-1zM908 300h1v7h-1zM904 303h1v1h-1zM905 303h1v1h-1zM906 303h1v1h-1zM907 303h1v1h-1zM934 298h1v9h-1zM940 298h1v9h-1zM935 300h1v1h-1zM936 301h1v1h-1zM937 302h1v2h-1zM938 301h1v1h-1zM939 300h1v1h-1zM953 298h1v1h-1zM954 298h1v1h-1zM952 299h1v1h-1zM955 299h1v1h-1zM951 300h1v7h-1zM956 300h1v7h-1zM952 303h1v1h-1zM953 303h1v1h-1zM954 303h1v1h-1zM955 303h1v1h-1zM969 298h1v1h-1zM970 298h1v1h-1zM968 299h1v1h-1zM971 299h1v1h-1zM967 300h1v7h-1zM972 300h1v7h-1zM968 303h1v1h-1zM969 303h1v1h-1zM970 303h1v1h-1zM971 303h1v1h-1zM985 298h1v1h-1zM986 298h1v1h-1zM984 299h1v1h-1zM987 299h1v1h-1zM983 300h1v7h-1zM988 300h1v7h-1zM984 303h1v1h-1zM985 303h1v1h-1zM986 303h1v1h-1zM987 303h1v1h-1zM991 298h1v9h-1zM996 298h1v9h-1zM992 300h1v1h-1zM993 301h1v1h-1zM994 302h1v1h-1zM995 303h1v1h-1zM1073 298h1v1h-1zM1074 298h1v1h-1zM1072 299h1v1h-1zM1075 299h1v1h-1zM1071 300h1v7h-1zM1076 300h1v7h-1zM1072 303h1v1h-1zM1073 303h1v1h-1zM1074 303h1v1h-1zM1075 303h1v1h-1zM30 320h7v1h-7zM174 311h1v9h-1zM180 311h1v9h-1zM175 313h1v1h-1zM176 314h1v1h-1zM177 315h1v2h-1zM178 314h1v1h-1zM179 313h1v1h-1zM201 311h1v1h-1zM202 311h1v1h-1zM200 312h1v1h-1zM203 312h1v1h-1zM199 313h1v7h-1zM204 313h1v7h-1zM200 316h1v1h-1zM201 316h1v1h-1zM202 316h1v1h-1zM203 316h1v1h-1zM249 311h1v1h-1zM250 311h1v1h-1zM248 312h1v1h-1zM251 312h1v1h-1zM247 313h1v7h-1zM252 313h1v7h-1zM248 316h1v1h-1zM249 316h1v1h-1zM250 316h1v1h-1zM251 316h1v1h-1zM297 311h1v1h-1zM298 311h1v1h-1zM296 312h1v1h-1zM299 312h1v1h-1zM295 313h1v7h-1zM300 313h1v7h-1zM296 316h1v1h-1zM297 316h1v1h-1zM298 316h1v1h-1zM299 316h1v1h-1zM321 311h1v1h-1zM322 311h1v1h-1zM320 312h1v1h-1zM323 312h1v1h-1zM319 313h1v7h-1zM324 313h1v7h-1zM320 316h1v1h-1zM321 316h1v1h-1zM322 316h1v1h-1zM323 316h1v1h-1zM433 311h1v1h-1zM434 311h1v1h-1zM432 312h1v1h-1zM435 312h1v1h-1zM431 313h1v7h-1zM436 313h1v7h-1zM432 316h1v1h-1zM433 316h1v1h-1zM434 316h1v1h-1zM435 316h1v1h-1zM494 311h1v9h-1zM500 311h1v9h-1zM495 313h1v1h-1zM496 314h1v1h-1zM497 315h1v2h-1zM498 314h1v1h-1zM499 313h1v1h-1zM511 311h1v9h-1zM516 311h1v9h-1zM512 313h1v1h-1zM513 314h1v1h-1zM514 315h1v1h-1zM515 316h1v1h-1zM551 311h1v9h-1zM556 311h1v9h-1zM552 313h1v1h-1zM553 314h1v1h-1zM554 315h1v1h-1zM555 316h1v1h-1zM625 311h1v1h-1zM626 311h1v1h-1zM624 312h1v1h-1zM627 312h1v1h-1zM623 313h1v7h-1zM628 313h1v7h-1zM624 316h1v1h-1zM625 316h1v1h-1zM626 316h1v1h-1zM627 316h1v1h-1zM633 311h1v1h-1zM634 311h1v1h-1zM632 312h1v1h-1zM635 312h1v1h-1zM631 313h1v7h-1zM636 313h1v7h-1zM632 316h1v1h-1zM633 316h1v1h-1zM634 316h1v1h-1zM635 316h1v1h-1zM846 311h1v9h-1zM852 311h1v9h-1zM847 313h1v1h-1zM848 314h1v1h-1zM849 315h1v2h-1zM850 314h1v1h-1zM851 313h1v1h-1zM953 311h1v1h-1zM954 311h1v1h-1zM952 312h1v1h-1zM955 312h1v1h-1zM951 313h1v7h-1zM956 313h1v7h-1zM952 316h1v1h-1zM953 316h1v1h-1zM954 316h1v1h-1zM955 316h1v1h-1zM969 311h1v1h-1zM970 311h1v1h-1zM968 312h1v1h-1zM971 312h1v1h-1zM967 313h1v7h-1zM972 313h1v7h-1zM968 316h1v1h-1zM969 316h1v1h-1zM970 316h1v1h-1zM971 316h1v1h-1zM985 311h1v1h-1zM986 311h1v1h-1zM984 312h1v1h-1zM987 312h1v1h-1zM983 313h1v7h-1zM988 313h1v7h-1zM984 316h1v1h-1zM985 316h1v1h-1zM986 316h1v1h-1zM987 316h1v1h-1zM998 311h1v9h-1zM1004 311h1v9h-1zM999 313h1v1h-1zM1000 314h1v1h-1zM1001 315h1v2h-1zM1002 314h1v1h-1zM1003 313h1v1h-1zM1073 311h1v1h-1zM1074 311h1v1h-1zM1072 312h1v1h-1zM1075 312h1v1h-1zM1071 313h1v7h-1zM1076 313h1v7h-1zM1072 316h1v1h-1zM1073 316h1v1h-1zM1074 316h1v1h-1zM1075 316h1v1h-1zM1150 311h1v9h-1zM1156 311h1v9h-1zM1151 313h1v1h-1zM1152 314h1v1h-1zM1153 315h1v2h-1zM1154 314h1v1h-1zM1155 313h1v1h-1zM30 333h7v1h-7zM198 324h1v9h-1zM204 324h1v9h-1zM199 326h1v1h-1zM200 327h1v1h-1zM201 328h1v2h-1zM202 327h1v1h-1zM203 326h1v1h-1zM249 324h1v1h-1zM250 324h1v1h-1zM248 325h1v1h-1zM251 325h1v1h-1zM247 326h1v7h-1zM252 326h1v7h-1zM248 329h1v1h-1zM249 329h1v1h-1zM250 329h1v1h-1zM251 329h1v1h-1zM297 324h1v1h-1zM298 324h1v1h-1zM296 325h1v1h-1zM299 325h1v1h-1zM295 326h1v7h-1zM300 326h1v7h-1zM296 329h1v1h-1zM297 329h1v1h-1zM298 329h1v1h-1zM299 329h1v1h-1zM318 324h1v9h-1zM324 324h1v9h-1zM319 326h1v1h-1zM320 327h1v1h-1zM321 328h1v2h-1zM322 327h1v1h-1zM323 326h1v1h-1zM345 324h1v1h-1zM346 324h1v1h-1zM344 325h1v1h-1zM347 325h1v1h-1zM343 326h1v7h-1zM348 326h1v7h-1zM344 329h1v1h-1zM345 329h1v1h-1zM346 329h1v1h-1zM347 329h1v1h-1zM407 324h1v9h-1zM412 324h1v9h-1zM408 326h1v1h-1zM409 327h1v1h-1zM410 328h1v1h-1zM411 329h1v1h-1zM433 324h1v1h-1zM434 324h1v1h-1zM432 325h1v1h-1zM435 325h1v1h-1zM431 326h1v7h-1zM436 326h1v7h-1zM432 329h1v1h-1zM433 329h1v1h-1zM434 329h1v1h-1zM435 329h1v1h-1zM494 324h1v9h-1zM500 324h1v9h-1zM495 326h1v1h-1zM496 327h1v1h-1zM497 328h1v2h-1zM498 327h1v1h-1zM499 326h1v1h-1zM551 324h1v9h-1zM556 324h1v9h-1zM552 326h1v1h-1zM553 327h1v1h-1zM554 328h1v1h-1zM555 329h1v1h-1zM574 324h1v9h-1zM580 324h1v9h-1zM575 326h1v1h-1zM576 327h1v1h-1zM577 328h1v2h-1zM578 327h1v1h-1zM579 326h1v1h-1zM631 324h1v9h-1zM636 324h1v9h-1zM632 326h1v1h-1zM633 327h1v1h-1zM634 328h1v1h-1zM635 329h1v1h-1zM662 324h1v9h-1zM668 324h1v9h-1zM663 326h1v1h-1zM664 327h1v1h-1zM665 328h1v2h-1zM666 327h1v1h-1zM667 326h1v1h-1zM846 324h1v9h-1zM852 324h1v9h-1zM847 326h1v1h-1zM848 327h1v1h-1zM849 328h1v2h-1zM850 327h1v1h-1zM851 326h1v1h-1zM879 324h1v9h-1zM884 324h1v9h-1zM880 326h1v1h-1zM881 327h1v1h-1zM882 328h1v1h-1zM883 329h1v1h-1zM889 324h1v1h-1zM890 324h1v1h-1zM888 325h1v1h-1zM891 325h1v1h-1zM887 326h1v7h-1zM892 326h1v7h-1zM888 329h1v1h-1zM889 329h1v1h-1zM890 329h1v1h-1zM891 329h1v1h-1zM953 324h1v1h-1zM954 324h1v1h-1zM952 325h1v1h-1zM955 325h1v1h-1zM951 326h1v7h-1zM956 326h1v7h-1zM952 329h1v1h-1zM953 329h1v1h-1zM954 329h1v1h-1zM955 329h1v1h-1zM975 324h1v9h-1zM980 324h1v9h-1zM976 326h1v1h-1zM977 327h1v1h-1zM978 328h1v1h-1zM979 329h1v1h-1zM1041 324h1v1h-1zM1042 324h1v1h-1zM1040 325h1v1h-1zM1043 325h1v1h-1zM1039 326h1v7h-1zM1044 326h1v7h-1zM1040 329h1v1h-1zM1041 329h1v1h-1zM1042 329h1v1h-1zM1043 329h1v1h-1zM1071 324h1v9h-1zM1076 324h1v9h-1zM1072 326h1v1h-1zM1073 327h1v1h-1zM1074 328h1v1h-1zM1075 329h1v1h-1zM30 346h7v1h-7zM198 337h1v9h-1zM204 337h1v9h-1zM199 339h1v1h-1zM200 340h1v1h-1zM201 341h1v2h-1zM202 340h1v1h-1zM203 339h1v1h-1zM249 337h1v1h-1zM250 337h1v1h-1zM248 338h1v1h-1zM251 338h1v1h-1zM247 339h1v7h-1zM252 339h1v7h-1zM248 342h1v1h-1zM249 342h1v1h-1zM250 342h1v1h-1zM251 342h1v1h-1zM297 337h1v1h-1zM298 337h1v1h-1zM296 338h1v1h-1zM299 338h1v1h-1zM295 339h1v7h-1zM300 339h1v7h-1zM296 342h1v1h-1zM297 342h1v1h-1zM298 342h1v1h-1zM299 342h1v1h-1zM318 337h1v9h-1zM324 337h1v9h-1zM319 339h1v1h-1zM320 340h1v1h-1zM321 341h1v2h-1zM322 340h1v1h-1zM323 339h1v1h-1zM345 337h1v1h-1zM346 337h1v1h-1zM344 338h1v1h-1zM347 338h1v1h-1zM343 339h1v7h-1zM348 339h1v7h-1zM344 342h1v1h-1zM345 342h1v1h-1zM346 342h1v1h-1zM347 342h1v1h-1zM407 337h1v9h-1zM412 337h1v9h-1zM408 339h1v1h-1zM409 340h1v1h-1zM410 341h1v1h-1zM411 342h1v1h-1zM433 337h1v1h-1zM434 337h1v1h-1zM432 338h1v1h-1zM435 338h1v1h-1zM431 339h1v7h-1zM436 339h1v7h-1zM432 342h1v1h-1zM433 342h1v1h-1zM434 342h1v1h-1zM435 342h1v1h-1zM494 337h1v9h-1zM500 337h1v9h-1zM495 339h1v1h-1zM496 340h1v1h-1zM497 341h1v2h-1zM498 340h1v1h-1zM499 339h1v1h-1zM551 337h1v9h-1zM556 337h1v9h-1zM552 339h1v1h-1zM553 340h1v1h-1zM554 341h1v1h-1zM555 342h1v1h-1zM574 337h1v9h-1zM580 337h1v9h-1zM575 339h1v1h-1zM576 340h1v1h-1zM577 341h1v2h-1zM578 340h1v1h-1zM579 339h1v1h-1zM631 337h1v9h-1zM636 337h1v9h-1zM632 339h1v1h-1zM633 340h1v1h-1zM634 341h1v1h-1zM635 342h1v1h-1zM662 337h1v9h-1zM668 337h1v9h-1zM663 339h1v1h-1zM664 340h1v1h-1zM665 341h1v2h-1zM666 340h1v1h-1zM667 339h1v1h-1zM846 337h1v9h-1zM852 337h1v9h-1zM847 339h1v1h-1zM848 340h1v1h-1zM849 341h1v2h-1zM850 340h1v1h-1zM851 339h1v1h-1zM879 337h1v9h-1zM884 337h1v9h-1zM880 339h1v1h-1zM881 340h1v1h-1zM882 341h1v1h-1zM883 342h1v1h-1zM889 337h1v1h-1zM890 337h1v1h-1zM888 338h1v1h-1zM891 338h1v1h-1zM887 339h1v7h-1zM892 339h1v7h-1zM888 342h1v1h-1zM889 342h1v1h-1zM890 342h1v1h-1zM891 342h1v1h-1zM921 337h1v1h-1zM922 337h1v1h-1zM920 338h1v1h-1zM923 338h1v1h-1zM919 339h1v7h-1zM924 339h1v7h-1zM920 342h1v1h-1zM921 342h1v1h-1zM922 342h1v1h-1zM923 342h1v1h-1zM953 337h1v1h-1zM954 337h1v1h-1zM952 338h1v1h-1zM955 338h1v1h-1zM951 339h1v7h-1zM956 339h1v7h-1zM952 342h1v1h-1zM953 342h1v1h-1zM954 342h1v1h-1zM955 342h1v1h-1zM1041 337h1v1h-1zM1042 337h1v1h-1zM1040 338h1v1h-1zM1043 338h1v1h-1zM1039 339h1v7h-1zM1044 339h1v7h-1zM1040 342h1v1h-1zM1041 342h1v1h-1zM1042 342h1v1h-1zM1043 342h1v1h-1zM1071 337h1v9h-1zM1076 337h1v9h-1zM1072 339h1v1h-1zM1073 340h1v1h-1zM1074 341h1v1h-1zM1075 342h1v1h-1zM30 359h7v1h-7zM41 350h1v1h-1zM42 350h1v1h-1zM40 351h1v1h-1zM43 351h1v1h-1zM39 352h1v7h-1zM44 352h1v7h-1zM40 355h1v1h-1zM41 355h1v1h-1zM42 355h1v1h-1zM43 355h1v1h-1zM65 350h1v1h-1zM66 350h1v1h-1zM64 351h1v1h-1zM67 351h1v1h-1zM63 352h1v7h-1zM68 352h1v7h-1zM64 355h1v1h-1zM65 355h1v1h-1zM66 355h1v1h-1zM67 355h1v1h-1zM198 350h1v9h-1zM204 350h1v9h-1zM199 352h1v1h-1zM200 353h1v1h-1zM201 354h1v2h-1zM202 353h1v1h-1zM203 352h1v1h-1zM249 350h1v1h-1zM250 350h1v1h-1zM248 351h1v1h-1zM251 351h1v1h-1zM247 352h1v7h-1zM252 352h1v7h-1zM248 355h1v1h-1zM249 355h1v1h-1zM250 355h1v1h-1zM251 355h1v1h-1zM289 350h1v1h-1zM290 350h1v1h-1zM288 351h1v1h-1zM291 351h1v1h-1zM287 352h1v7h-1zM292 352h1v7h-1zM288 355h1v1h-1zM289 355h1v1h-1zM290 355h1v1h-1zM291 355h1v1h-1zM310 350h1v8h-1zM316 350h1v8h-1zM311 358h1v1h-1zM312 357h1v1h-1zM313 354h1v3h-1zM314 357h1v1h-1zM315 358h1v1h-1zM318 350h1v8h-1zM324 350h1v8h-1zM319 358h1v1h-1zM320 357h1v1h-1zM321 354h1v3h-1zM322 357h1v1h-1zM323 358h1v1h-1zM385 350h1v1h-1zM386 350h1v1h-1zM384 351h1v1h-1zM387 351h1v1h-1zM383 352h1v7h-1zM388 352h1v7h-1zM384 355h1v1h-1zM385 355h1v1h-1zM386 355h1v1h-1zM387 355h1v1h-1zM433 350h1v1h-1zM434 350h1v1h-1zM432 351h1v1h-1zM435 351h1v1h-1zM431 352h1v7h-1zM436 352h1v7h-1zM432 355h1v1h-1zM433 355h1v1h-1zM434 355h1v1h-1zM435 355h1v1h-1zM494 350h1v9h-1zM500 350h1v9h-1zM495 352h1v1h-1zM496 353h1v1h-1zM497 354h1v2h-1zM498 353h1v1h-1zM499 352h1v1h-1zM551 350h1v9h-1zM556 350h1v9h-1zM552 352h1v1h-1zM553 353h1v1h-1zM554 354h1v1h-1zM555 355h1v1h-1zM577 350h1v1h-1zM578 350h1v1h-1zM576 351h1v1h-1zM579 351h1v1h-1zM575 352h1v7h-1zM580 352h1v7h-1zM576 355h1v1h-1zM577 355h1v1h-1zM578 355h1v1h-1zM579 355h1v1h-1zM681 350h1v1h-1zM682 350h1v1h-1zM680 351h1v1h-1zM683 351h1v1h-1zM679 352h1v7h-1zM684 352h1v7h-1zM680 355h1v1h-1zM681 355h1v1h-1zM682 355h1v1h-1zM683 355h1v1h-1zM825 350h1v1h-1zM826 350h1v1h-1zM824 351h1v1h-1zM827 351h1v1h-1zM823 352h1v7h-1zM828 352h1v7h-1zM824 355h1v1h-1zM825 355h1v1h-1zM826 355h1v1h-1zM827 355h1v1h-1zM846 350h1v9h-1zM852 350h1v9h-1zM847 352h1v1h-1zM848 353h1v1h-1zM849 354h1v2h-1zM850 353h1v1h-1zM851 352h1v1h-1zM879 350h1v9h-1zM884 350h1v9h-1zM880 352h1v1h-1zM881 353h1v1h-1zM882 354h1v1h-1zM883 355h1v1h-1zM969 350h1v1h-1zM970 350h1v1h-1zM968 351h1v1h-1zM971 351h1v1h-1zM967 352h1v7h-1zM972 352h1v7h-1zM968 355h1v1h-1zM969 355h1v1h-1zM970 355h1v1h-1zM971 355h1v1h-1zM985 350h1v1h-1zM986 350h1v1h-1zM984 351h1v1h-1zM987 351h1v1h-1zM983 352h1v7h-1zM988 352h1v7h-1zM984 355h1v1h-1zM985 355h1v1h-1zM986 355h1v1h-1zM987 355h1v1h-1zM991 350h1v9h-1zM996 350h1v9h-1zM992 352h1v1h-1zM993 353h1v1h-1zM994 354h1v1h-1zM995 355h1v1h-1zM998 350h1v8h-1zM1004 350h1v8h-1zM999 358h1v1h-1zM1000 357h1v1h-1zM1001 354h1v3h-1zM1002 357h1v1h-1zM1003 358h1v1h-1zM1071 350h1v9h-1zM1076 350h1v9h-1zM1072 352h1v1h-1zM1073 353h1v1h-1zM1074 354h1v1h-1zM1075 355h1v1h-1zM1079 350h1v9h-1zM1084 350h1v9h-1zM1080 352h1v1h-1zM1081 353h1v1h-1zM1082 354h1v1h-1zM1083 355h1v1h-1zM30 372h7v1h-7zM38 363h1v9h-1zM44 363h1v9h-1zM39 365h1v1h-1zM40 366h1v1h-1zM41 367h1v2h-1zM42 366h1v1h-1zM43 365h1v1h-1zM73 363h1v1h-1zM74 363h1v1h-1zM72 364h1v1h-1zM75 364h1v1h-1zM71 365h1v7h-1zM76 365h1v7h-1zM72 368h1v1h-1zM73 368h1v1h-1zM74 368h1v1h-1zM75 368h1v1h-1zM198 363h1v9h-1zM204 363h1v9h-1zM199 365h1v1h-1zM200 366h1v1h-1zM201 367h1v2h-1zM202 366h1v1h-1zM203 365h1v1h-1zM257 363h1v1h-1zM258 363h1v1h-1zM256 364h1v1h-1zM259 364h1v1h-1zM255 365h1v7h-1zM260 365h1v7h-1zM256 368h1v1h-1zM257 368h1v1h-1zM258 368h1v1h-1zM259 368h1v1h-1zM297 363h1v1h-1zM298 363h1v1h-1zM296 364h1v1h-1zM299 364h1v1h-1zM295 365h1v7h-1zM300 365h1v7h-1zM296 368h1v1h-1zM297 368h1v1h-1zM298 368h1v1h-1zM299 368h1v1h-1zM393 363h1v1h-1zM394 363h1v1h-1zM392 364h1v1h-1zM395 364h1v1h-1zM391 365h1v7h-1zM396 365h1v7h-1zM392 368h1v1h-1zM393 368h1v1h-1zM394 368h1v1h-1zM395 368h1v1h-1zM417 363h1v1h-1zM418 363h1v1h-1zM416 364h1v1h-1zM419 364h1v1h-1zM415 365h1v7h-1zM420 365h1v7h-1zM416 368h1v1h-1zM417 368h1v1h-1zM418 368h1v1h-1zM419 368h1v1h-1zM486 363h1v9h-1zM492 363h1v9h-1zM487 365h1v1h-1zM488 366h1v1h-1zM489 367h1v2h-1zM490 366h1v1h-1zM491 365h1v1h-1zM494 363h1v9h-1zM500 363h1v9h-1zM495 365h1v1h-1zM496 366h1v1h-1zM497 367h1v2h-1zM498 366h1v1h-1zM499 365h1v1h-1zM551 363h1v9h-1zM556 363h1v9h-1zM552 365h1v1h-1zM553 366h1v1h-1zM554 367h1v1h-1zM555 368h1v1h-1zM574 363h1v9h-1zM580 363h1v9h-1zM575 365h1v1h-1zM576 366h1v1h-1zM577 367h1v2h-1zM578 366h1v1h-1zM579 365h1v1h-1zM617 363h1v1h-1zM618 363h1v1h-1zM616 364h1v1h-1zM619 364h1v1h-1zM615 365h1v7h-1zM620 365h1v7h-1zM616 368h1v1h-1zM617 368h1v1h-1zM618 368h1v1h-1zM619 368h1v1h-1zM846 363h1v9h-1zM852 363h1v9h-1zM847 365h1v1h-1zM848 366h1v1h-1zM849 367h1v2h-1zM850 366h1v1h-1zM851 365h1v1h-1zM879 363h1v9h-1zM884 363h1v9h-1zM880 365h1v1h-1zM881 366h1v1h-1zM882 367h1v1h-1zM883 368h1v1h-1zM927 363h1v9h-1zM932 363h1v9h-1zM928 365h1v1h-1zM929 366h1v1h-1zM930 367h1v1h-1zM931 368h1v1h-1zM966 363h1v9h-1zM972 363h1v9h-1zM967 365h1v1h-1zM968 366h1v1h-1zM969 367h1v2h-1zM970 366h1v1h-1zM971 365h1v1h-1zM1073 363h1v1h-1zM1074 363h1v1h-1zM1072 364h1v1h-1zM1075 364h1v1h-1zM1071 365h1v7h-1zM1076 365h1v7h-1zM1072 368h1v1h-1zM1073 368h1v1h-1zM1074 368h1v1h-1zM1075 368h1v1h-1zM1143 363h1v9h-1zM1148 363h1v9h-1zM1144 365h1v1h-1zM1145 366h1v1h-1zM1146 367h1v1h-1zM1147 368h1v1h-1zM30 385h7v1h-7zM73 376h1v1h-1zM74 376h1v1h-1zM72 377h1v1h-1zM75 377h1v1h-1zM71 378h1v7h-1zM76 378h1v7h-1zM72 381h1v1h-1zM73 381h1v1h-1zM74 381h1v1h-1zM75 381h1v1h-1zM158 376h1v9h-1zM164 376h1v9h-1zM159 378h1v1h-1zM160 379h1v1h-1zM161 380h1v2h-1zM162 379h1v1h-1zM163 378h1v1h-1zM249 376h1v1h-1zM250 376h1v1h-1zM248 377h1v1h-1zM251 377h1v1h-1zM247 378h1v7h-1zM252 378h1v7h-1zM248 381h1v1h-1zM249 381h1v1h-1zM250 381h1v1h-1zM251 381h1v1h-1zM297 376h1v1h-1zM298 376h1v1h-1zM296 377h1v1h-1zM299 377h1v1h-1zM295 378h1v7h-1zM300 378h1v7h-1zM296 381h1v1h-1zM297 381h1v1h-1zM298 381h1v1h-1zM299 381h1v1h-1zM321 376h1v1h-1zM322 376h1v1h-1zM320 377h1v1h-1zM323 377h1v1h-1zM319 378h1v7h-1zM324 378h1v7h-1zM320 381h1v1h-1zM321 381h1v1h-1zM322 381h1v1h-1zM323 381h1v1h-1zM385 376h1v1h-1zM386 376h1v1h-1zM384 377h1v1h-1zM387 377h1v1h-1zM383 378h1v7h-1zM388 378h1v7h-1zM384 381h1v1h-1zM385 381h1v1h-1zM386 381h1v1h-1zM387 381h1v1h-1zM409 376h1v1h-1zM410 376h1v1h-1zM408 377h1v1h-1zM411 377h1v1h-1zM407 378h1v7h-1zM412 378h1v7h-1zM408 381h1v1h-1zM409 381h1v1h-1zM410 381h1v1h-1zM411 381h1v1h-1zM433 376h1v1h-1zM434 376h1v1h-1zM432 377h1v1h-1zM435 377h1v1h-1zM431 378h1v7h-1zM436 378h1v7h-1zM432 381h1v1h-1zM433 381h1v1h-1zM434 381h1v1h-1zM435 381h1v1h-1zM446 376h1v8h-1zM452 376h1v8h-1zM447 384h1v1h-1zM448 383h1v1h-1zM449 380h1v3h-1zM450 383h1v1h-1zM451 384h1v1h-1zM494 376h1v9h-1zM500 376h1v9h-1zM495 378h1v1h-1zM496 379h1v1h-1zM497 380h1v2h-1zM498 379h1v1h-1zM499 378h1v1h-1zM551 376h1v9h-1zM556 376h1v9h-1zM552 378h1v1h-1zM553 379h1v1h-1zM554 380h1v1h-1zM555 381h1v1h-1zM609 376h1v1h-1zM610 376h1v1h-1zM608 377h1v1h-1zM611 377h1v1h-1zM607 378h1v7h-1zM612 378h1v7h-1zM608 381h1v1h-1zM609 381h1v1h-1zM610 381h1v1h-1zM611 381h1v1h-1zM625 376h1v1h-1zM626 376h1v1h-1zM624 377h1v1h-1zM627 377h1v1h-1zM623 378h1v7h-1zM628 378h1v7h-1zM624 381h1v1h-1zM625 381h1v1h-1zM626 381h1v1h-1zM627 381h1v1h-1zM633 376h1v1h-1zM634 376h1v1h-1zM632 377h1v1h-1zM635 377h1v1h-1zM631 378h1v7h-1zM636 378h1v7h-1zM632 381h1v1h-1zM633 381h1v1h-1zM634 381h1v1h-1zM635 381h1v1h-1zM806 376h1v9h-1zM812 376h1v9h-1zM807 378h1v1h-1zM808 379h1v1h-1zM809 380h1v2h-1zM810 379h1v1h-1zM811 378h1v1h-1zM846 376h1v9h-1zM852 376h1v9h-1zM847 378h1v1h-1zM848 379h1v1h-1zM849 380h1v2h-1zM850 379h1v1h-1zM851 378h1v1h-1zM905 376h1v1h-1zM906 376h1v1h-1zM904 377h1v1h-1zM907 377h1v1h-1zM903 378h1v7h-1zM908 378h1v7h-1zM904 381h1v1h-1zM905 381h1v1h-1zM906 381h1v1h-1zM907 381h1v1h-1zM937 376h1v1h-1zM938 376h1v1h-1zM936 377h1v1h-1zM939 377h1v1h-1zM935 378h1v7h-1zM940 378h1v7h-1zM936 381h1v1h-1zM937 381h1v1h-1zM938 381h1v1h-1zM939 381h1v1h-1zM953 376h1v1h-1zM954 376h1v1h-1zM952 377h1v1h-1zM955 377h1v1h-1zM951 378h1v7h-1zM956 378h1v7h-1zM952 381h1v1h-1zM953 381h1v1h-1zM954 381h1v1h-1zM955 381h1v1h-1zM969 376h1v1h-1zM970 376h1v1h-1zM968 377h1v1h-1zM971 377h1v1h-1zM967 378h1v7h-1zM972 378h1v7h-1zM968 381h1v1h-1zM969 381h1v1h-1zM970 381h1v1h-1zM971 381h1v1h-1zM985 376h1v1h-1zM986 376h1v1h-1zM984 377h1v1h-1zM987 377h1v1h-1zM983 378h1v7h-1zM988 378h1v7h-1zM984 381h1v1h-1zM985 381h1v1h-1zM986 381h1v1h-1zM987 381h1v1h-1zM1025 376h1v1h-1zM1026 376h1v1h-1zM1024 377h1v1h-1zM1027 377h1v1h-1zM1023 378h1v7h-1zM1028 378h1v7h-1zM1024 381h1v1h-1zM1025 381h1v1h-1zM1026 381h1v1h-1zM1027 381h1v1h-1zM1073 376h1v1h-1zM1074 376h1v1h-1zM1072 377h1v1h-1zM1075 377h1v1h-1zM1071 378h1v7h-1zM1076 378h1v7h-1zM1072 381h1v1h-1zM1073 381h1v1h-1zM1074 381h1v1h-1zM1075 381h1v1h-1zM1153 376h1v1h-1zM1154 376h1v1h-1zM1152 377h1v1h-1zM1155 377h1v1h-1zM1151 378h1v7h-1zM1156 378h1v7h-1zM1152 381h1v1h-1zM1153 381h1v1h-1zM1154 381h1v1h-1zM1155 381h1v1h-1zM30 398h7v1h-7zM73 389h1v1h-1zM74 389h1v1h-1zM72 390h1v1h-1zM75 390h1v1h-1zM71 391h1v7h-1zM76 391h1v7h-1zM72 394h1v1h-1zM73 394h1v1h-1zM74 394h1v1h-1zM75 394h1v1h-1zM174 389h1v9h-1zM180 389h1v9h-1zM175 391h1v1h-1zM176 392h1v1h-1zM177 393h1v2h-1zM178 392h1v1h-1zM179 391h1v1h-1zM249 389h1v1h-1zM250 389h1v1h-1zM248 390h1v1h-1zM251 390h1v1h-1zM247 391h1v7h-1zM252 391h1v7h-1zM248 394h1v1h-1zM249 394h1v1h-1zM250 394h1v1h-1zM251 394h1v1h-1zM297 389h1v1h-1zM298 389h1v1h-1zM296 390h1v1h-1zM299 390h1v1h-1zM295 391h1v7h-1zM300 391h1v7h-1zM296 394h1v1h-1zM297 394h1v1h-1zM298 394h1v1h-1zM299 394h1v1h-1zM329 389h1v1h-1zM330 389h1v1h-1zM328 390h1v1h-1zM331 390h1v1h-1zM327 391h1v7h-1zM332 391h1v7h-1zM328 394h1v1h-1zM329 394h1v1h-1zM330 394h1v1h-1zM331 394h1v1h-1zM361 389h1v1h-1zM362 389h1v1h-1zM360 390h1v1h-1zM363 390h1v1h-1zM359 391h1v7h-1zM364 391h1v7h-1zM360 394h1v1h-1zM361 394h1v1h-1zM362 394h1v1h-1zM363 394h1v1h-1zM409 389h1v1h-1zM410 389h1v1h-1zM408 390h1v1h-1zM411 390h1v1h-1zM407 391h1v7h-1zM412 391h1v7h-1zM408 394h1v1h-1zM409 394h1v1h-1zM410 394h1v1h-1zM411 394h1v1h-1zM433 389h1v1h-1zM434 389h1v1h-1zM432 390h1v1h-1zM435 390h1v1h-1zM431 391h1v7h-1zM436 391h1v7h-1zM432 394h1v1h-1zM433 394h1v1h-1zM434 394h1v1h-1zM435 394h1v1h-1zM446 389h1v8h-1zM452 389h1v8h-1zM447 397h1v1h-1zM448 396h1v1h-1zM449 393h1v3h-1zM450 396h1v1h-1zM451 397h1v1h-1zM494 389h1v9h-1zM500 389h1v9h-1zM495 391h1v1h-1zM496 392h1v1h-1zM497 393h1v2h-1zM498 392h1v1h-1zM499 391h1v1h-1zM551 389h1v9h-1zM556 389h1v9h-1zM552 391h1v1h-1zM553 392h1v1h-1zM554 393h1v1h-1zM555 394h1v1h-1zM593 389h1v1h-1zM594 389h1v1h-1zM592 390h1v1h-1zM595 390h1v1h-1zM591 391h1v7h-1zM596 391h1v7h-1zM592 394h1v1h-1zM593 394h1v1h-1zM594 394h1v1h-1zM595 394h1v1h-1zM846 389h1v9h-1zM852 389h1v9h-1zM847 391h1v1h-1zM848 392h1v1h-1zM849 393h1v2h-1zM850 392h1v1h-1zM851 391h1v1h-1zM889 389h1v1h-1zM890 389h1v1h-1zM888 390h1v1h-1zM891 390h1v1h-1zM887 391h1v7h-1zM892 391h1v7h-1zM888 394h1v1h-1zM889 394h1v1h-1zM890 394h1v1h-1zM891 394h1v1h-1zM969 389h1v1h-1zM970 389h1v1h-1zM968 390h1v1h-1zM971 390h1v1h-1zM967 391h1v7h-1zM972 391h1v7h-1zM968 394h1v1h-1zM969 394h1v1h-1zM970 394h1v1h-1zM971 394h1v1h-1zM985 389h1v1h-1zM986 389h1v1h-1zM984 390h1v1h-1zM987 390h1v1h-1zM983 391h1v7h-1zM988 391h1v7h-1zM984 394h1v1h-1zM985 394h1v1h-1zM986 394h1v1h-1zM987 394h1v1h-1zM1073 389h1v1h-1zM1074 389h1v1h-1zM1072 390h1v1h-1zM1075 390h1v1h-1zM1071 391h1v7h-1zM1076 391h1v7h-1zM1072 394h1v1h-1zM1073 394h1v1h-1zM1074 394h1v1h-1zM1075 394h1v1h-1zM1105 389h1v1h-1zM1106 389h1v1h-1zM1104 390h1v1h-1zM1107 390h1v1h-1zM1103 391h1v7h-1zM1108 391h1v7h-1zM1104 394h1v1h-1zM1105 394h1v1h-1zM1106 394h1v1h-1zM1107 394h1v1h-1zM1153 389h1v1h-1zM1154 389h1v1h-1zM1152 390h1v1h-1zM1155 390h1v1h-1zM1151 391h1v7h-1zM1156 391h1v7h-1zM1152 394h1v1h-1zM1153 394h1v1h-1zM1154 394h1v1h-1zM1155 394h1v1h-1zM9 402h1v1h-1zM10 402h1v1h-1zM8 403h1v1h-1zM11 403h1v1h-1zM7 404h1v7h-1zM12 404h1v7h-1zM8 407h1v1h-1zM9 407h1v1h-1zM10 407h1v1h-1zM11 407h1v1h-1zM38 411h7v1h-7zM222 402h1v9h-1zM228 402h1v9h-1zM223 404h1v1h-1zM224 405h1v1h-1zM225 406h1v2h-1zM226 405h1v1h-1zM227 404h1v1h-1zM278 402h1v9h-1zM284 402h1v9h-1zM279 404h1v1h-1zM280 405h1v1h-1zM281 406h1v2h-1zM282 405h1v1h-1zM283 404h1v1h-1zM294 402h1v9h-1zM300 402h1v9h-1zM295 404h1v1h-1zM296 405h1v1h-1zM297 406h1v2h-1zM298 405h1v1h-1zM299 404h1v1h-1zM433 402h1v1h-1zM434 402h1v1h-1zM432 403h1v1h-1zM435 403h1v1h-1zM431 404h1v7h-1zM436 404h1v7h-1zM432 407h1v1h-1zM433 407h1v1h-1zM434 407h1v1h-1zM435 407h1v1h-1zM494 402h1v9h-1zM500 402h1v9h-1zM495 404h1v1h-1zM496 405h1v1h-1zM497 406h1v2h-1zM498 405h1v1h-1zM499 404h1v1h-1zM551 402h1v9h-1zM556 402h1v9h-1zM552 404h1v1h-1zM553 405h1v1h-1zM554 406h1v1h-1zM555 407h1v1h-1zM681 402h1v1h-1zM682 402h1v1h-1zM680 403h1v1h-1zM683 403h1v1h-1zM679 404h1v7h-1zM684 404h1v7h-1zM680 407h1v1h-1zM681 407h1v1h-1zM682 407h1v1h-1zM683 407h1v1h-1zM846 402h1v9h-1zM852 402h1v9h-1zM847 404h1v1h-1zM848 405h1v1h-1zM849 406h1v2h-1zM850 405h1v1h-1zM851 404h1v1h-1zM929 402h1v1h-1zM930 402h1v1h-1zM928 403h1v1h-1zM931 403h1v1h-1zM927 404h1v7h-1zM932 404h1v7h-1zM928 407h1v1h-1zM929 407h1v1h-1zM930 407h1v1h-1zM931 407h1v1h-1zM953 402h1v1h-1zM954 402h1v1h-1zM952 403h1v1h-1zM955 403h1v1h-1zM951 404h1v7h-1zM956 404h1v7h-1zM952 407h1v1h-1zM953 407h1v1h-1zM954 407h1v1h-1zM955 407h1v1h-1zM969 402h1v1h-1zM970 402h1v1h-1zM968 403h1v1h-1zM971 403h1v1h-1zM967 404h1v7h-1zM972 404h1v7h-1zM968 407h1v1h-1zM969 407h1v1h-1zM970 407h1v1h-1zM971 407h1v1h-1zM985 402h1v1h-1zM986 402h1v1h-1zM984 403h1v1h-1zM987 403h1v1h-1zM983 404h1v7h-1zM988 404h1v7h-1zM984 407h1v1h-1zM985 407h1v1h-1zM986 407h1v1h-1zM987 407h1v1h-1zM1079 402h1v9h-1zM1084 402h1v9h-1zM1080 404h1v1h-1zM1081 405h1v1h-1zM1082 406h1v1h-1zM1083 407h1v1h-1zM1105 402h1v1h-1zM1106 402h1v1h-1zM1104 403h1v1h-1zM1107 403h1v1h-1zM1103 404h1v7h-1zM1108 404h1v7h-1zM1104 407h1v1h-1zM1105 407h1v1h-1zM1106 407h1v1h-1zM1107 407h1v1h-1zM38 424h7v1h-7zM222 415h1v9h-1zM228 415h1v9h-1zM223 417h1v1h-1zM224 418h1v1h-1zM225 419h1v2h-1zM226 418h1v1h-1zM227 417h1v1h-1zM281 415h1v1h-1zM282 415h1v1h-1zM280 416h1v1h-1zM283 416h1v1h-1zM279 417h1v7h-1zM284 417h1v7h-1zM280 420h1v1h-1zM281 420h1v1h-1zM282 420h1v1h-1zM283 420h1v1h-1zM297 415h1v1h-1zM298 415h1v1h-1zM296 416h1v1h-1zM299 416h1v1h-1zM295 417h1v7h-1zM300 417h1v7h-1zM296 420h1v1h-1zM297 420h1v1h-1zM298 420h1v1h-1zM299 420h1v1h-1zM303 415h1v9h-1zM308 415h1v9h-1zM304 417h1v1h-1zM305 418h1v1h-1zM306 419h1v1h-1zM307 420h1v1h-1zM385 415h1v1h-1zM386 415h1v1h-1zM384 416h1v1h-1zM387 416h1v1h-1zM383 417h1v7h-1zM388 417h1v7h-1zM384 420h1v1h-1zM385 420h1v1h-1zM386 420h1v1h-1zM387 420h1v1h-1zM407 415h1v9h-1zM412 415h1v9h-1zM408 417h1v1h-1zM409 418h1v1h-1zM410 419h1v1h-1zM411 420h1v1h-1zM543 415h1v9h-1zM548 415h1v9h-1zM544 417h1v1h-1zM545 418h1v1h-1zM546 419h1v1h-1zM547 420h1v1h-1zM551 415h1v9h-1zM556 415h1v9h-1zM552 417h1v1h-1zM553 418h1v1h-1zM554 419h1v1h-1zM555 420h1v1h-1zM590 415h1v9h-1zM596 415h1v9h-1zM591 417h1v1h-1zM592 418h1v1h-1zM593 419h1v2h-1zM594 418h1v1h-1zM595 417h1v1h-1zM633 415h1v1h-1zM634 415h1v1h-1zM632 416h1v1h-1zM635 416h1v1h-1zM631 417h1v7h-1zM636 417h1v7h-1zM632 420h1v1h-1zM633 420h1v1h-1zM634 420h1v1h-1zM635 420h1v1h-1zM649 415h1v1h-1zM650 415h1v1h-1zM648 416h1v1h-1zM651 416h1v1h-1zM647 417h1v7h-1zM652 417h1v7h-1zM648 420h1v1h-1zM649 420h1v1h-1zM650 420h1v1h-1zM651 420h1v1h-1zM846 415h1v9h-1zM852 415h1v9h-1zM847 417h1v1h-1zM848 418h1v1h-1zM849 419h1v2h-1zM850 418h1v1h-1zM851 417h1v1h-1zM865 415h1v1h-1zM866 415h1v1h-1zM864 416h1v1h-1zM867 416h1v1h-1zM863 417h1v7h-1zM868 417h1v7h-1zM864 420h1v1h-1zM865 420h1v1h-1zM866 420h1v1h-1zM867 420h1v1h-1zM910 415h1v8h-1zM916 415h1v8h-1zM911 423h1v1h-1zM912 422h1v1h-1zM913 419h1v3h-1zM914 422h1v1h-1zM915 423h1v1h-1zM927 415h1v9h-1zM932 415h1v9h-1zM928 417h1v1h-1zM929 418h1v1h-1zM930 419h1v1h-1zM931 420h1v1h-1zM937 415h1v1h-1zM938 415h1v1h-1zM936 416h1v1h-1zM939 416h1v1h-1zM935 417h1v7h-1zM940 417h1v7h-1zM936 420h1v1h-1zM937 420h1v1h-1zM938 420h1v1h-1zM939 420h1v1h-1zM953 415h1v1h-1zM954 415h1v1h-1zM952 416h1v1h-1zM955 416h1v1h-1zM951 417h1v7h-1zM956 417h1v7h-1zM952 420h1v1h-1zM953 420h1v1h-1zM954 420h1v1h-1zM955 420h1v1h-1zM993 415h1v1h-1zM994 415h1v1h-1zM992 416h1v1h-1zM995 416h1v1h-1zM991 417h1v7h-1zM996 417h1v7h-1zM992 420h1v1h-1zM993 420h1v1h-1zM994 420h1v1h-1zM995 420h1v1h-1zM998 415h1v8h-1zM1004 415h1v8h-1zM999 423h1v1h-1zM1000 422h1v1h-1zM1001 419h1v3h-1zM1002 422h1v1h-1zM1003 423h1v1h-1zM1041 415h1v1h-1zM1042 415h1v1h-1zM1040 416h1v1h-1zM1043 416h1v1h-1zM1039 417h1v7h-1zM1044 417h1v7h-1zM1040 420h1v1h-1zM1041 420h1v1h-1zM1042 420h1v1h-1zM1043 420h1v1h-1z" fill="#000"/></svg>
</body></html>
